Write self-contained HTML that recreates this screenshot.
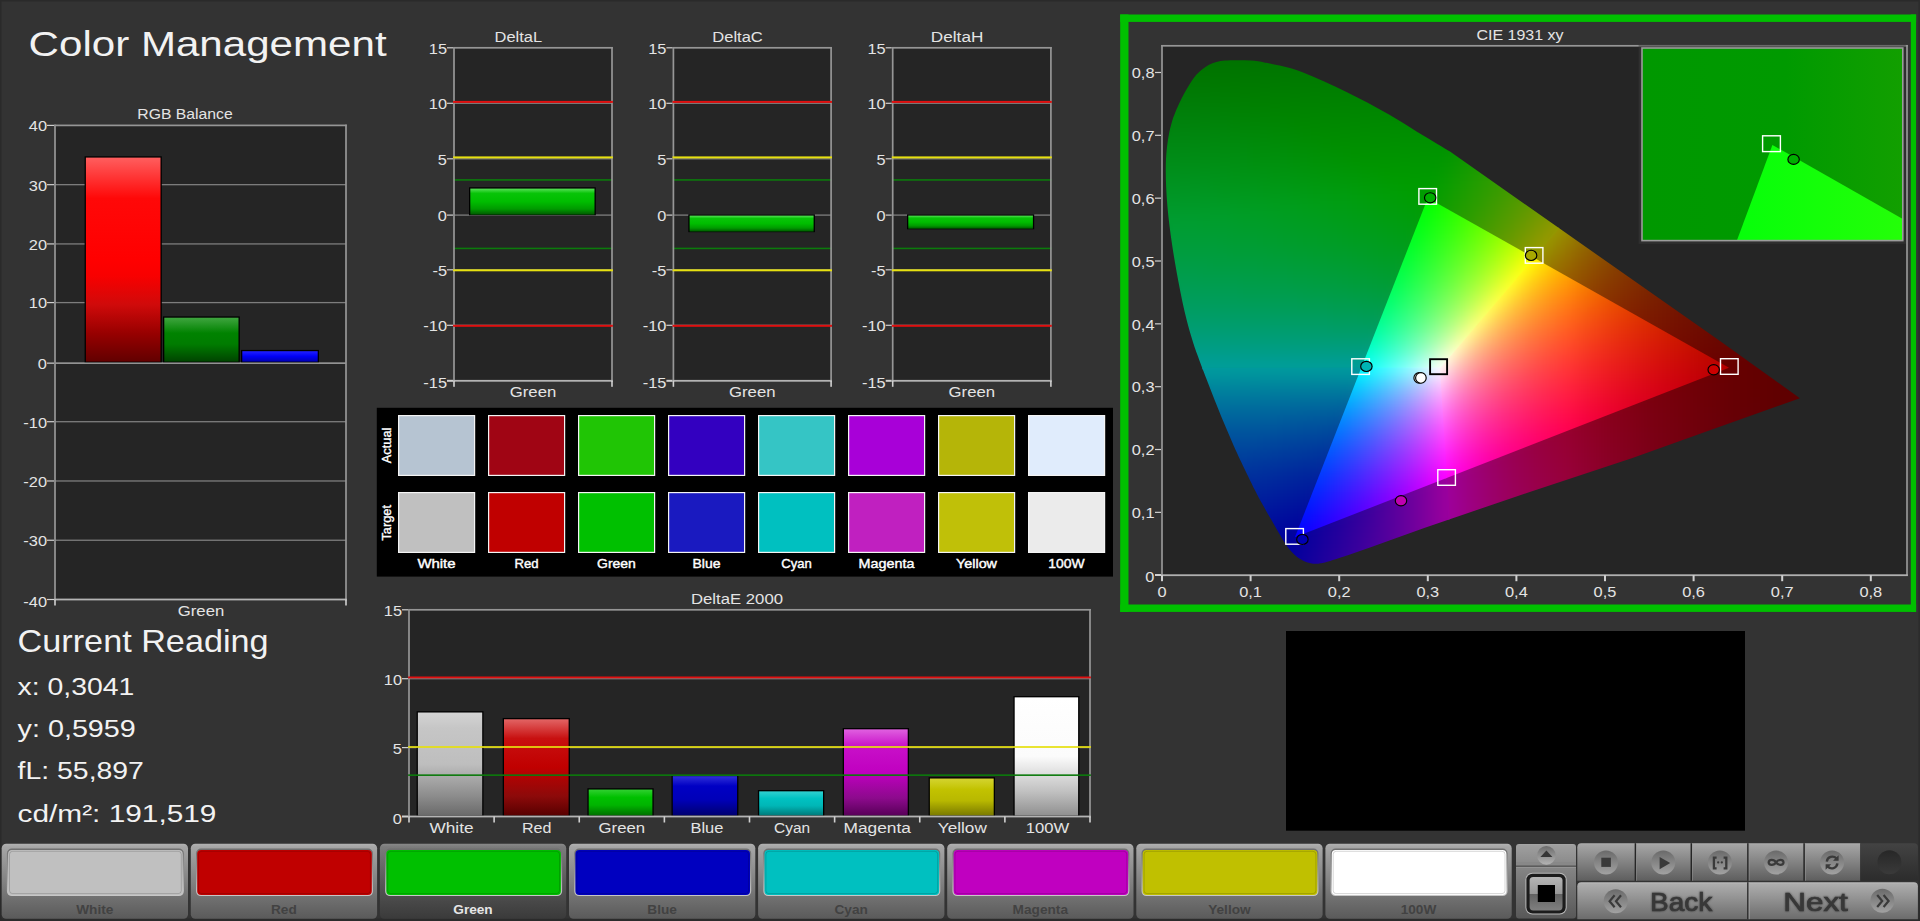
<!DOCTYPE html>
<html lang="en"><head><meta charset="utf-8"><title>Color Management</title>
<style>html,body{margin:0;padding:0;background:#333;overflow:hidden}svg{display:block;font-family:'Liberation Sans', sans-serif;fill:#e4e4e4}</style></head>
<body>
<svg width="1920" height="921" viewBox="0 0 1920 921">
<defs>
<linearGradient id="g1" x1="0" y1="0" x2="0" y2="1"><stop offset="0" stop-color="#282828"/><stop offset="1" stop-color="#303030"/></linearGradient>
<linearGradient id="g2" x1="0" y1="0" x2="0" y2="1"><stop offset="0" stop-color="#ff5e5e"/><stop offset="0.2" stop-color="#ff0808"/><stop offset="0.5" stop-color="#ff0000"/><stop offset="0.58" stop-color="#f80000"/><stop offset="0.72" stop-color="#d00a0a"/><stop offset="0.86" stop-color="#980000"/><stop offset="1" stop-color="#620000"/></linearGradient>
<linearGradient id="g3" x1="0" y1="0" x2="0" y2="1"><stop offset="0" stop-color="#3fa53f"/><stop offset="0.35" stop-color="#008200"/><stop offset="0.6" stop-color="#007c00"/><stop offset="1" stop-color="#004400"/></linearGradient>
<linearGradient id="g4" x1="0" y1="0" x2="0" y2="1"><stop offset="0" stop-color="#2020ff"/><stop offset="0.5" stop-color="#0000f4"/><stop offset="1" stop-color="#0000b0"/></linearGradient>
<linearGradient id="g5" x1="0" y1="0" x2="0" y2="1"><stop offset="0" stop-color="#58e058"/><stop offset="0.18" stop-color="#08c408"/><stop offset="0.5" stop-color="#00bd00"/><stop offset="0.78" stop-color="#009a00"/><stop offset="1" stop-color="#005800"/></linearGradient>
<linearGradient id="g6" x1="0" y1="0" x2="0" y2="1"><stop offset="0" stop-color="#58e058"/><stop offset="0.18" stop-color="#08c408"/><stop offset="0.5" stop-color="#00bd00"/><stop offset="0.78" stop-color="#009a00"/><stop offset="1" stop-color="#005800"/></linearGradient>
<linearGradient id="g7" x1="0" y1="0" x2="0" y2="1"><stop offset="0" stop-color="#58e058"/><stop offset="0.18" stop-color="#08c408"/><stop offset="0.5" stop-color="#00bd00"/><stop offset="0.78" stop-color="#009a00"/><stop offset="1" stop-color="#005800"/></linearGradient>
<linearGradient id="g8" x1="0" y1="0" x2="0" y2="1"><stop offset="0" stop-color="#d4d4d4"/><stop offset="0.15" stop-color="#c6c6c6"/><stop offset="0.5" stop-color="#bebebe"/><stop offset="0.8" stop-color="#8e8e8e"/><stop offset="1" stop-color="#6a6a6a"/></linearGradient>
<linearGradient id="g9" x1="0" y1="0" x2="0" y2="1"><stop offset="0" stop-color="#e26464"/><stop offset="0.2" stop-color="#c81010"/><stop offset="0.5" stop-color="#c00000"/><stop offset="0.8" stop-color="#8c0a0a"/><stop offset="1" stop-color="#580000"/></linearGradient>
<linearGradient id="g10" x1="0" y1="0" x2="0" y2="1"><stop offset="0" stop-color="#30d030"/><stop offset="0.3" stop-color="#00c000"/><stop offset="0.6" stop-color="#00b400"/><stop offset="1" stop-color="#007000"/></linearGradient>
<linearGradient id="g11" x1="0" y1="0" x2="0" y2="1"><stop offset="0" stop-color="#3030d8"/><stop offset="0.25" stop-color="#0000c4"/><stop offset="0.6" stop-color="#0000b8"/><stop offset="1" stop-color="#000070"/></linearGradient>
<linearGradient id="g12" x1="0" y1="0" x2="0" y2="1"><stop offset="0" stop-color="#30d0d0"/><stop offset="0.3" stop-color="#00c2c2"/><stop offset="0.6" stop-color="#00b6b6"/><stop offset="1" stop-color="#007a7a"/></linearGradient>
<linearGradient id="g13" x1="0" y1="0" x2="0" y2="1"><stop offset="0" stop-color="#e060e0"/><stop offset="0.2" stop-color="#c810c8"/><stop offset="0.5" stop-color="#c000c0"/><stop offset="0.8" stop-color="#8c0a8c"/><stop offset="1" stop-color="#580058"/></linearGradient>
<linearGradient id="g14" x1="0" y1="0" x2="0" y2="1"><stop offset="0" stop-color="#d4d430"/><stop offset="0.3" stop-color="#c2c200"/><stop offset="0.6" stop-color="#b8b800"/><stop offset="1" stop-color="#7a7a00"/></linearGradient>
<linearGradient id="g15" x1="0" y1="0" x2="0" y2="1"><stop offset="0" stop-color="#ffffff"/><stop offset="0.5" stop-color="#fbfbfb"/><stop offset="0.8" stop-color="#c0c0c0"/><stop offset="1" stop-color="#909090"/></linearGradient>
<clipPath id="locus"><path d="M1347.8 555.3C1344.53 556.35 1333.1 560.2 1328.2 561.6C1323.3 563 1321.33 563.42 1318.4 563.7C1315.47 563.98 1313.2 563.82 1310.6 563.3C1308 562.78 1305.57 562.1 1302.8 560.6C1300.03 559.1 1296.93 557.15 1294 554.3C1291.07 551.45 1288.58 548.55 1285.2 543.5C1281.82 538.45 1277.61 530.67 1273.74 524C1269.88 517.33 1265.16 509.17 1262.01 503.5C1258.86 497.83 1258.31 496.92 1254.85 490C1251.38 483.08 1244.95 469.85 1241.23 462C1237.51 454.15 1235.47 449.57 1232.53 442.9C1229.59 436.23 1226.49 428.95 1223.58 422C1220.68 415.05 1217.99 408.43 1215.11 401.2C1212.22 393.97 1209.26 386.42 1206.27 378.6C1203.28 370.78 1199.5 360.77 1197.16 354.3C1194.82 347.83 1193.98 345.43 1192.25 339.8C1190.52 334.17 1188.45 326.9 1186.79 320.5C1185.14 314.1 1183.72 307.77 1182.34 301.4C1180.96 295.03 1179.74 288.67 1178.53 282.3C1177.32 275.93 1176.17 269.57 1175.08 263.2C1173.99 256.83 1172.94 250.47 1171.99 244.1C1171.04 237.73 1170.15 231.37 1169.38 225C1168.61 218.63 1167.93 212.27 1167.39 205.9C1166.85 199.53 1166.4 193.17 1166.13 186.8C1165.86 180.43 1165.7 173.67 1165.77 167.7C1165.85 161.73 1166.07 156.53 1166.58 151C1167.1 145.47 1167.98 139.33 1168.86 134.5C1169.74 129.67 1170.91 125.42 1171.88 122C1172.85 118.58 1173.47 117.07 1174.68 114C1175.89 110.93 1177.54 107.07 1179.15 103.6C1180.76 100.13 1182.61 96.38 1184.32 93.2C1186.04 90.02 1187.73 87.25 1189.46 84.5C1191.19 81.75 1192.66 79.15 1194.7 76.7C1196.74 74.25 1199.38 71.75 1201.7 69.8C1204.02 67.85 1206.15 66.32 1208.6 65C1211.05 63.68 1213.65 62.65 1216.4 61.9C1219.15 61.15 1221.48 60.78 1225.1 60.5C1228.72 60.22 1233.77 60.18 1238.1 60.2C1242.43 60.22 1246.75 60.23 1251.1 60.6C1255.45 60.97 1261.05 61.92 1264.2 62.4C1267.35 62.88 1265.42 62.47 1270 63.5C1274.58 64.53 1284.47 66.4 1291.7 68.6C1298.93 70.8 1306.17 73.72 1313.4 76.7C1320.63 79.68 1327.85 83.07 1335.1 86.5C1342.35 89.93 1349.65 93.6 1356.9 97.3C1364.15 101 1371.37 104.72 1378.6 108.7C1385.83 112.68 1393.07 116.85 1400.3 121.2C1407.53 125.55 1413.72 129.73 1422 134.8C1430.28 139.87 1445.33 148.8 1450 151.6L1719.3 340.6L1799.9 398.3L1710.6 430L1632.5 458.1L1528.3 492.5L1424.2 527.9L1370 547.4Z"/></clipPath>
<clipPath id="tri"><path d="M1729.04 367.63L1427.8 197.96L1294.9 537.3Z"/></clipPath>
<clipPath id="sec0"><path d="M1438.23 367.98L1525.41 1686.12L2571.6 -961.46Z"/></clipPath>
<clipPath id="sec1"><path d="M1439.42 369.06L2572.79 -960.39L502.74 371.32Z"/></clipPath>
<clipPath id="sec2"><path d="M1439.8 367.45L503.12 369.72L1526.98 1685.59Z"/></clipPath>
<filter id="blo" color-interpolation-filters="sRGB" x="-5%" y="-5%" width="110%" height="110%"><feGaussianBlur stdDeviation="6"/></filter>
<filter id="bli" color-interpolation-filters="sRGB" x="-5%" y="-5%" width="110%" height="110%"><feGaussianBlur stdDeviation="4.5"/></filter>
<linearGradient id="insg" x1="0" y1="0" x2="1" y2="0"><stop offset="0" stop-color="#009800"/><stop offset="0.55" stop-color="#009a00"/><stop offset="1" stop-color="#129f00"/></linearGradient>
<linearGradient id="insb" x1="0" y1="0" x2="1" y2="0"><stop offset="0" stop-color="#06ff0a"/><stop offset="1" stop-color="#24ff08"/></linearGradient>
<linearGradient id="g16" x1="0" y1="0" x2="0" y2="1"><stop offset="0" stop-color="#b2b2b2"/><stop offset="0.04" stop-color="#a6a6a6"/><stop offset="0.55" stop-color="#7e7e7e"/><stop offset="1" stop-color="#5a5a5a"/></linearGradient>
<linearGradient id="g17" x1="0" y1="0" x2="0" y2="1"><stop offset="0" stop-color="#8a8a8a"/><stop offset="0.04" stop-color="#7c7c7c"/><stop offset="0.55" stop-color="#565656"/><stop offset="1" stop-color="#3a3a3a"/></linearGradient>
<linearGradient id="g18" x1="0" y1="0" x2="0" y2="1"><stop offset="0" stop-color="#6e6e6e"/><stop offset="1" stop-color="#c8c8c8"/></linearGradient>
<linearGradient id="g19" x1="0" y1="0" x2="0" y2="1"><stop offset="0" stop-color="#a8a8a8"/><stop offset="0.08" stop-color="#9e9e9e"/><stop offset="1" stop-color="#888888"/></linearGradient>
<linearGradient id="g20" x1="0" y1="0" x2="0" y2="1"><stop offset="0" stop-color="#868686"/><stop offset="1" stop-color="#585858"/></linearGradient>
<linearGradient id="g21" x1="0" y1="0" x2="0" y2="1"><stop offset="0" stop-color="#6c6c6c"/><stop offset="1" stop-color="#b4b4b4"/></linearGradient>
<linearGradient id="g22" x1="0" y1="0" x2="0" y2="1"><stop offset="0" stop-color="#6a6a6a"/><stop offset="1" stop-color="#a2a2a2"/></linearGradient>
<linearGradient id="g23" x1="0" y1="0" x2="0" y2="1"><stop offset="0" stop-color="#b6b6b6"/><stop offset="0.5" stop-color="#989898"/><stop offset="0.51" stop-color="#626262"/><stop offset="1" stop-color="#808080"/></linearGradient>
<linearGradient id="g24" x1="0" y1="0" x2="0" y2="1"><stop offset="0" stop-color="#b0b0b0"/><stop offset="0.05" stop-color="#a4a4a4"/><stop offset="1" stop-color="#5e5e5e"/></linearGradient>
<linearGradient id="g25" x1="0" y1="0" x2="0" y2="1"><stop offset="0" stop-color="#434343"/><stop offset="1" stop-color="#2c2c2c"/></linearGradient>
<linearGradient id="g26" x1="0" y1="0" x2="0" y2="1"><stop offset="0" stop-color="#272727"/><stop offset="1" stop-color="#3a3a3a"/></linearGradient>
<linearGradient id="g27" x1="0" y1="0" x2="0" y2="1"><stop offset="0" stop-color="#bcbcbc"/><stop offset="0.06" stop-color="#acacac"/><stop offset="1" stop-color="#6c6c6c"/></linearGradient>
<filter id="ts" x="-10%" y="-30%" width="120%" height="160%" color-interpolation-filters="sRGB"><feMorphology in="SourceGraphic" operator="dilate" radius="0.3" result="d"/><feGaussianBlur in="d" stdDeviation="0.9" result="b"/><feComponentTransfer in="b" result="b2"><feFuncA type="linear" slope="0.8"/></feComponentTransfer><feMerge><feMergeNode in="b2"/><feMergeNode in="SourceGraphic"/></feMerge></filter>
</defs>
<rect x="0" y="0" width="1920" height="921" fill="#333333"/>
<rect x="0" y="0" width="1920" height="2" fill="url(#g1)"/>
<rect x="0" y="0" width="1.5" height="921" fill="#2a2a2a"/>
<rect x="1918.4" y="0" width="1.6" height="921" fill="#2c2c2c"/>
<text x="28.6" y="56" font-size="35.4" textLength="358" lengthAdjust="spacingAndGlyphs" fill="#f2f2f2">Color Management</text>
<text x="17.6" y="651.9" font-size="31.3" textLength="251" lengthAdjust="spacingAndGlyphs" fill="#f2f2f2">Current Reading</text>
<text x="17.6" y="694.5" font-size="24.8" textLength="116.8" lengthAdjust="spacingAndGlyphs" fill="#f2f2f2">x: 0,3041</text>
<text x="17.6" y="736.8" font-size="24.8" textLength="118.2" lengthAdjust="spacingAndGlyphs" fill="#f2f2f2">y: 0,5959</text>
<text x="17.6" y="779.2" font-size="24.8" textLength="126.3" lengthAdjust="spacingAndGlyphs" fill="#f2f2f2">fL: 55,897</text>
<text x="17.6" y="821.6" font-size="24.8" textLength="198.8" lengthAdjust="spacingAndGlyphs" fill="#f2f2f2">cd/m²: 191,519</text>
<rect x="55" y="125.4" width="291" height="474.1" fill="#252525"/>
<rect x="55" y="184.01" width="291" height="1.3" fill="#7d7d7d"/>
<rect x="55" y="243.28" width="291" height="1.3" fill="#7d7d7d"/>
<rect x="55" y="301.94" width="291" height="1.3" fill="#7d7d7d"/>
<rect x="55" y="362.35" width="291" height="1.6" fill="#9a9a9a"/>
<rect x="55" y="421.06" width="291" height="1.3" fill="#7d7d7d"/>
<rect x="55" y="480.33" width="291" height="1.3" fill="#7d7d7d"/>
<rect x="55" y="539.59" width="291" height="1.3" fill="#7d7d7d"/>
<rect x="84.6" y="156.3" width="77.2" height="205.95" fill="#000"/>
<rect x="85.9" y="157.6" width="74.6" height="204.05" fill="url(#g2)"/>
<rect x="163" y="316.4" width="76.8" height="45.85" fill="#000"/>
<rect x="164.3" y="317.7" width="74.2" height="43.95" fill="url(#g3)"/>
<rect x="241" y="349.9" width="78" height="12.35" fill="#000"/>
<rect x="242.3" y="351.2" width="75.4" height="10.45" fill="url(#g4)"/>
<rect x="54.15" y="124.6" width="1.7" height="475.7" fill="#969696"/>
<rect x="345.15" y="124.6" width="1.7" height="475.7" fill="#969696"/>
<rect x="54.2" y="124.55" width="292.6" height="1.7" fill="#969696"/>
<rect x="54.2" y="598.6" width="292.6" height="1.8" fill="#b4b4b4"/>
<rect x="47" y="124.8" width="7" height="1.2" fill="#d0d0d0"/>
<text x="47" y="131.3" font-size="15.3" text-anchor="end" textLength="18.21" lengthAdjust="spacingAndGlyphs">40</text>
<rect x="47" y="184.06" width="7" height="1.2" fill="#d0d0d0"/>
<text x="47" y="190.56" font-size="15.3" text-anchor="end" textLength="18.21" lengthAdjust="spacingAndGlyphs">30</text>
<rect x="47" y="243.33" width="7" height="1.2" fill="#d0d0d0"/>
<text x="47" y="249.83" font-size="15.3" text-anchor="end" textLength="18.21" lengthAdjust="spacingAndGlyphs">20</text>
<rect x="47" y="301.99" width="7" height="1.2" fill="#d0d0d0"/>
<text x="47" y="308.49" font-size="15.3" text-anchor="end" textLength="18.21" lengthAdjust="spacingAndGlyphs">10</text>
<rect x="47" y="362.55" width="7" height="1.2" fill="#d0d0d0"/>
<text x="47" y="369.05" font-size="15.3" text-anchor="end" textLength="9.11" lengthAdjust="spacingAndGlyphs">0</text>
<rect x="47" y="421.11" width="7" height="1.2" fill="#d0d0d0"/>
<text x="47" y="427.61" font-size="15.3" text-anchor="end" textLength="23.66" lengthAdjust="spacingAndGlyphs">-10</text>
<rect x="47" y="480.38" width="7" height="1.2" fill="#d0d0d0"/>
<text x="47" y="486.88" font-size="15.3" text-anchor="end" textLength="23.66" lengthAdjust="spacingAndGlyphs">-20</text>
<rect x="47" y="539.64" width="7" height="1.2" fill="#d0d0d0"/>
<text x="47" y="546.14" font-size="15.3" text-anchor="end" textLength="23.66" lengthAdjust="spacingAndGlyphs">-30</text>
<rect x="47" y="598.9" width="7" height="1.2" fill="#d0d0d0"/>
<text x="47" y="606.7" font-size="15.3" text-anchor="end" textLength="23.66" lengthAdjust="spacingAndGlyphs">-40</text>
<rect x="54.2" y="599.5" width="1.6" height="6" fill="#d0d0d0"/>
<rect x="345.2" y="599.5" width="1.6" height="6" fill="#d0d0d0"/>
<text x="185" y="118.5" font-size="15.2" text-anchor="middle" textLength="95.5" lengthAdjust="spacingAndGlyphs">RGB Balance</text>
<text x="201" y="616.3" font-size="15.2" text-anchor="middle" textLength="46.5" lengthAdjust="spacingAndGlyphs">Green</text>
<rect x="454" y="47.8" width="158" height="333" fill="#252525"/>
<rect x="454" y="102.65" width="158" height="1.3" fill="#7d7d7d"/>
<rect x="454" y="158.15" width="158" height="1.3" fill="#7d7d7d"/>
<rect x="454" y="214.45" width="158" height="1.3" fill="#7d7d7d"/>
<rect x="454" y="269.15" width="158" height="1.3" fill="#7d7d7d"/>
<rect x="454" y="324.65" width="158" height="1.3" fill="#7d7d7d"/>
<rect x="453.1" y="179.12" width="159.8" height="1.6" fill="#0c7a0c"/>
<rect x="453.1" y="247.62" width="159.8" height="1.6" fill="#0c7a0c"/>
<rect x="469" y="187.29" width="126.8" height="28.01" fill="#000"/>
<rect x="470.3" y="188.59" width="124.2" height="26.11" fill="url(#g5)"/>
<rect x="453.15" y="47" width="1.7" height="334.6" fill="#969696"/>
<rect x="611.15" y="47" width="1.7" height="334.6" fill="#969696"/>
<rect x="453.2" y="46.95" width="159.6" height="1.7" fill="#969696"/>
<rect x="453.2" y="379.9" width="159.6" height="1.8" fill="#b4b4b4"/>
<rect x="453.1" y="100.9" width="159.8" height="2" fill="#e01010"/>
<rect x="453.1" y="324.8" width="159.8" height="2" fill="#e01010"/>
<rect x="453.1" y="156.4" width="159.8" height="2" fill="#e6e010"/>
<rect x="453.1" y="269.3" width="159.8" height="2" fill="#e6e010"/>
<rect x="447" y="47.2" width="6" height="1.2" fill="#d0d0d0"/>
<text x="447" y="53.7" font-size="15.3" text-anchor="end" textLength="18.21" lengthAdjust="spacingAndGlyphs">15</text>
<rect x="447" y="102.7" width="6" height="1.2" fill="#d0d0d0"/>
<text x="447" y="109.2" font-size="15.3" text-anchor="end" textLength="18.21" lengthAdjust="spacingAndGlyphs">10</text>
<rect x="447" y="158.2" width="6" height="1.2" fill="#d0d0d0"/>
<text x="447" y="164.7" font-size="15.3" text-anchor="end" textLength="9.11" lengthAdjust="spacingAndGlyphs">5</text>
<rect x="447" y="214.5" width="6" height="1.2" fill="#d0d0d0"/>
<text x="447" y="221" font-size="15.3" text-anchor="end" textLength="9.11" lengthAdjust="spacingAndGlyphs">0</text>
<rect x="447" y="269.2" width="6" height="1.2" fill="#d0d0d0"/>
<text x="447" y="275.7" font-size="15.3" text-anchor="end" textLength="14.56" lengthAdjust="spacingAndGlyphs">-5</text>
<rect x="447" y="324.7" width="6" height="1.2" fill="#d0d0d0"/>
<text x="447" y="331.2" font-size="15.3" text-anchor="end" textLength="23.66" lengthAdjust="spacingAndGlyphs">-10</text>
<rect x="447" y="379.8" width="6" height="2" fill="#d0d0d0"/>
<text x="447" y="388" font-size="15.3" text-anchor="end" textLength="23.66" lengthAdjust="spacingAndGlyphs">-15</text>
<rect x="453.2" y="380.8" width="1.6" height="6" fill="#d0d0d0"/>
<rect x="611.2" y="380.8" width="1.6" height="6" fill="#d0d0d0"/>
<text x="518.3" y="42.1" font-size="15.2" text-anchor="middle" textLength="47.5" lengthAdjust="spacingAndGlyphs">DeltaL</text>
<text x="533" y="397.4" font-size="15.2" text-anchor="middle" textLength="46.5" lengthAdjust="spacingAndGlyphs">Green</text>
<rect x="673.4" y="47.8" width="157.7" height="333" fill="#252525"/>
<rect x="673.4" y="102.65" width="157.7" height="1.3" fill="#7d7d7d"/>
<rect x="673.4" y="158.15" width="157.7" height="1.3" fill="#7d7d7d"/>
<rect x="673.4" y="214.45" width="157.7" height="1.3" fill="#7d7d7d"/>
<rect x="673.4" y="269.15" width="157.7" height="1.3" fill="#7d7d7d"/>
<rect x="673.4" y="324.65" width="157.7" height="1.3" fill="#7d7d7d"/>
<rect x="672.5" y="179.12" width="159.5" height="1.6" fill="#0c7a0c"/>
<rect x="672.5" y="247.62" width="159.5" height="1.6" fill="#0c7a0c"/>
<rect x="688.3" y="214.3" width="126.6" height="17.87" fill="#000"/>
<rect x="689.6" y="215.6" width="124" height="15.97" fill="url(#g6)"/>
<rect x="672.55" y="47" width="1.7" height="334.6" fill="#969696"/>
<rect x="830.25" y="47" width="1.7" height="334.6" fill="#969696"/>
<rect x="672.6" y="46.95" width="159.3" height="1.7" fill="#969696"/>
<rect x="672.6" y="379.9" width="159.3" height="1.8" fill="#b4b4b4"/>
<rect x="672.5" y="100.9" width="159.5" height="2" fill="#e01010"/>
<rect x="672.5" y="324.8" width="159.5" height="2" fill="#e01010"/>
<rect x="672.5" y="156.4" width="159.5" height="2" fill="#e6e010"/>
<rect x="672.5" y="269.3" width="159.5" height="2" fill="#e6e010"/>
<rect x="666.4" y="47.2" width="6" height="1.2" fill="#d0d0d0"/>
<text x="666.4" y="53.7" font-size="15.3" text-anchor="end" textLength="18.21" lengthAdjust="spacingAndGlyphs">15</text>
<rect x="666.4" y="102.7" width="6" height="1.2" fill="#d0d0d0"/>
<text x="666.4" y="109.2" font-size="15.3" text-anchor="end" textLength="18.21" lengthAdjust="spacingAndGlyphs">10</text>
<rect x="666.4" y="158.2" width="6" height="1.2" fill="#d0d0d0"/>
<text x="666.4" y="164.7" font-size="15.3" text-anchor="end" textLength="9.11" lengthAdjust="spacingAndGlyphs">5</text>
<rect x="666.4" y="214.5" width="6" height="1.2" fill="#d0d0d0"/>
<text x="666.4" y="221" font-size="15.3" text-anchor="end" textLength="9.11" lengthAdjust="spacingAndGlyphs">0</text>
<rect x="666.4" y="269.2" width="6" height="1.2" fill="#d0d0d0"/>
<text x="666.4" y="275.7" font-size="15.3" text-anchor="end" textLength="14.56" lengthAdjust="spacingAndGlyphs">-5</text>
<rect x="666.4" y="324.7" width="6" height="1.2" fill="#d0d0d0"/>
<text x="666.4" y="331.2" font-size="15.3" text-anchor="end" textLength="23.66" lengthAdjust="spacingAndGlyphs">-10</text>
<rect x="666.4" y="379.8" width="6" height="2" fill="#d0d0d0"/>
<text x="666.4" y="388" font-size="15.3" text-anchor="end" textLength="23.66" lengthAdjust="spacingAndGlyphs">-15</text>
<rect x="672.6" y="380.8" width="1.6" height="6" fill="#d0d0d0"/>
<rect x="830.3" y="380.8" width="1.6" height="6" fill="#d0d0d0"/>
<text x="737.55" y="42.1" font-size="15.2" text-anchor="middle" textLength="50.5" lengthAdjust="spacingAndGlyphs">DeltaC</text>
<text x="752.25" y="397.4" font-size="15.2" text-anchor="middle" textLength="46.5" lengthAdjust="spacingAndGlyphs">Green</text>
<rect x="892.7" y="47.8" width="158.2" height="333" fill="#252525"/>
<rect x="892.7" y="102.65" width="158.2" height="1.3" fill="#7d7d7d"/>
<rect x="892.7" y="158.15" width="158.2" height="1.3" fill="#7d7d7d"/>
<rect x="892.7" y="214.45" width="158.2" height="1.3" fill="#7d7d7d"/>
<rect x="892.7" y="269.15" width="158.2" height="1.3" fill="#7d7d7d"/>
<rect x="892.7" y="324.65" width="158.2" height="1.3" fill="#7d7d7d"/>
<rect x="891.8" y="179.12" width="160" height="1.6" fill="#0c7a0c"/>
<rect x="891.8" y="247.62" width="160" height="1.6" fill="#0c7a0c"/>
<rect x="907" y="214.3" width="127.2" height="15.02" fill="#000"/>
<rect x="908.3" y="215.6" width="124.6" height="13.12" fill="url(#g7)"/>
<rect x="891.85" y="47" width="1.7" height="334.6" fill="#969696"/>
<rect x="1050.05" y="47" width="1.7" height="334.6" fill="#969696"/>
<rect x="891.9" y="46.95" width="159.8" height="1.7" fill="#969696"/>
<rect x="891.9" y="379.9" width="159.8" height="1.8" fill="#b4b4b4"/>
<rect x="891.8" y="100.9" width="160" height="2" fill="#e01010"/>
<rect x="891.8" y="324.8" width="160" height="2" fill="#e01010"/>
<rect x="891.8" y="156.4" width="160" height="2" fill="#e6e010"/>
<rect x="891.8" y="269.3" width="160" height="2" fill="#e6e010"/>
<rect x="885.7" y="47.2" width="6" height="1.2" fill="#d0d0d0"/>
<text x="885.7" y="53.7" font-size="15.3" text-anchor="end" textLength="18.21" lengthAdjust="spacingAndGlyphs">15</text>
<rect x="885.7" y="102.7" width="6" height="1.2" fill="#d0d0d0"/>
<text x="885.7" y="109.2" font-size="15.3" text-anchor="end" textLength="18.21" lengthAdjust="spacingAndGlyphs">10</text>
<rect x="885.7" y="158.2" width="6" height="1.2" fill="#d0d0d0"/>
<text x="885.7" y="164.7" font-size="15.3" text-anchor="end" textLength="9.11" lengthAdjust="spacingAndGlyphs">5</text>
<rect x="885.7" y="214.5" width="6" height="1.2" fill="#d0d0d0"/>
<text x="885.7" y="221" font-size="15.3" text-anchor="end" textLength="9.11" lengthAdjust="spacingAndGlyphs">0</text>
<rect x="885.7" y="269.2" width="6" height="1.2" fill="#d0d0d0"/>
<text x="885.7" y="275.7" font-size="15.3" text-anchor="end" textLength="14.56" lengthAdjust="spacingAndGlyphs">-5</text>
<rect x="885.7" y="324.7" width="6" height="1.2" fill="#d0d0d0"/>
<text x="885.7" y="331.2" font-size="15.3" text-anchor="end" textLength="23.66" lengthAdjust="spacingAndGlyphs">-10</text>
<rect x="885.7" y="379.8" width="6" height="2" fill="#d0d0d0"/>
<text x="885.7" y="388" font-size="15.3" text-anchor="end" textLength="23.66" lengthAdjust="spacingAndGlyphs">-15</text>
<rect x="891.9" y="380.8" width="1.6" height="6" fill="#d0d0d0"/>
<rect x="1050.1" y="380.8" width="1.6" height="6" fill="#d0d0d0"/>
<text x="957.1" y="42.1" font-size="15.2" text-anchor="middle" textLength="52.5" lengthAdjust="spacingAndGlyphs">DeltaH</text>
<text x="971.8" y="397.4" font-size="15.2" text-anchor="middle" textLength="46.5" lengthAdjust="spacingAndGlyphs">Green</text>
<rect x="376.8" y="407.8" width="736.2" height="168.8" fill="#000"/>
<rect x="398" y="415" width="77.2" height="61" fill="#f4f4f4"/>
<rect x="399.2" y="416.2" width="74.8" height="58.6" fill="#b6c4d2"/>
<rect x="398" y="492" width="77.2" height="61" fill="#f4f4f4"/>
<rect x="399.2" y="493.2" width="74.8" height="58.6" fill="#c0c0c0"/>
<text x="436.5" y="567.7" font-size="13" text-anchor="middle" textLength="38.2" lengthAdjust="spacingAndGlyphs" fill="#ffffff" stroke="#fff" stroke-width="0.4">White</text>
<rect x="488" y="415" width="77.2" height="61" fill="#f4f4f4"/>
<rect x="489.2" y="416.2" width="74.8" height="58.6" fill="#a00514"/>
<rect x="488" y="492" width="77.2" height="61" fill="#f4f4f4"/>
<rect x="489.2" y="493.2" width="74.8" height="58.6" fill="#c00000"/>
<text x="526.5" y="567.7" font-size="13" text-anchor="middle" textLength="24.1" lengthAdjust="spacingAndGlyphs" fill="#ffffff" stroke="#fff" stroke-width="0.4">Red</text>
<rect x="578" y="415" width="77.2" height="61" fill="#f4f4f4"/>
<rect x="579.2" y="416.2" width="74.8" height="58.6" fill="#20c505"/>
<rect x="578" y="492" width="77.2" height="61" fill="#f4f4f4"/>
<rect x="579.2" y="493.2" width="74.8" height="58.6" fill="#00c000"/>
<text x="616.5" y="567.7" font-size="13" text-anchor="middle" textLength="38.8" lengthAdjust="spacingAndGlyphs" fill="#ffffff" stroke="#fff" stroke-width="0.4">Green</text>
<rect x="668" y="415" width="77.2" height="61" fill="#f4f4f4"/>
<rect x="669.2" y="416.2" width="74.8" height="58.6" fill="#3300c0"/>
<rect x="668" y="492" width="77.2" height="61" fill="#f4f4f4"/>
<rect x="669.2" y="493.2" width="74.8" height="58.6" fill="#1a1ac0"/>
<text x="706.5" y="567.7" font-size="13" text-anchor="middle" textLength="27.9" lengthAdjust="spacingAndGlyphs" fill="#ffffff" stroke="#fff" stroke-width="0.4">Blue</text>
<rect x="758" y="415" width="77.2" height="61" fill="#f4f4f4"/>
<rect x="759.2" y="416.2" width="74.8" height="58.6" fill="#35c5c5"/>
<rect x="758" y="492" width="77.2" height="61" fill="#f4f4f4"/>
<rect x="759.2" y="493.2" width="74.8" height="58.6" fill="#00c0c0"/>
<text x="796.5" y="567.7" font-size="13" text-anchor="middle" textLength="30.5" lengthAdjust="spacingAndGlyphs" fill="#ffffff" stroke="#fff" stroke-width="0.4">Cyan</text>
<rect x="848" y="415" width="77.2" height="61" fill="#f4f4f4"/>
<rect x="849.2" y="416.2" width="74.8" height="58.6" fill="#a800d8"/>
<rect x="848" y="492" width="77.2" height="61" fill="#f4f4f4"/>
<rect x="849.2" y="493.2" width="74.8" height="58.6" fill="#c020c0"/>
<text x="886.5" y="567.7" font-size="13" text-anchor="middle" textLength="55.9" lengthAdjust="spacingAndGlyphs" fill="#ffffff" stroke="#fff" stroke-width="0.4">Magenta</text>
<rect x="938" y="415" width="77.2" height="61" fill="#f4f4f4"/>
<rect x="939.2" y="416.2" width="74.8" height="58.6" fill="#b5b508"/>
<rect x="938" y="492" width="77.2" height="61" fill="#f4f4f4"/>
<rect x="939.2" y="493.2" width="74.8" height="58.6" fill="#c0c008"/>
<text x="976.5" y="567.7" font-size="13" text-anchor="middle" textLength="41" lengthAdjust="spacingAndGlyphs" fill="#ffffff" stroke="#fff" stroke-width="0.4">Yellow</text>
<rect x="1028" y="415" width="77.2" height="61" fill="#f4f4f4"/>
<rect x="1029.2" y="416.2" width="74.8" height="58.6" fill="#e0ecfc"/>
<rect x="1028" y="492" width="77.2" height="61" fill="#f4f4f4"/>
<rect x="1029.2" y="493.2" width="74.8" height="58.6" fill="#ebebeb"/>
<text x="1066.5" y="567.7" font-size="13" text-anchor="middle" textLength="36.3" lengthAdjust="spacingAndGlyphs" fill="#ffffff" stroke="#fff" stroke-width="0.4">100W</text>
<text transform="translate(391.3 445.4) rotate(-90)" font-size="12.6" text-anchor="middle" fill="#fff" textLength="35.6" lengthAdjust="spacingAndGlyphs" stroke="#fff" stroke-width="0.35">Actual</text>
<text transform="translate(391.3 522.8) rotate(-90)" font-size="12.6" text-anchor="middle" fill="#fff" textLength="35.6" lengthAdjust="spacingAndGlyphs" stroke="#fff" stroke-width="0.35">Target</text>
<rect x="409" y="609.8" width="681" height="206.7" fill="#252525"/>
<rect x="409" y="678.05" width="681" height="1.3" fill="#7d7d7d"/>
<rect x="409" y="746.95" width="681" height="1.3" fill="#7d7d7d"/>
<rect x="416.6" y="711.22" width="66.9" height="104.88" fill="#000"/>
<rect x="417.9" y="712.52" width="64.3" height="102.98" fill="url(#g8)"/>
<rect x="502.7" y="717.97" width="67.2" height="98.13" fill="#000"/>
<rect x="504" y="719.27" width="64.6" height="96.23" fill="url(#g9)"/>
<rect x="587.4" y="788.25" width="66.3" height="27.85" fill="#000"/>
<rect x="588.7" y="789.55" width="63.7" height="25.95" fill="url(#g10)"/>
<rect x="671.5" y="774.88" width="66.9" height="41.22" fill="#000"/>
<rect x="672.8" y="776.18" width="64.3" height="39.32" fill="url(#g11)"/>
<rect x="757.9" y="790.04" width="66.4" height="26.06" fill="#000"/>
<rect x="759.2" y="791.34" width="63.8" height="24.16" fill="url(#g12)"/>
<rect x="842.7" y="728.03" width="66.3" height="88.07" fill="#000"/>
<rect x="844" y="729.33" width="63.7" height="86.17" fill="url(#g13)"/>
<rect x="928.6" y="777.23" width="66.4" height="38.87" fill="#000"/>
<rect x="929.9" y="778.53" width="63.8" height="36.97" fill="url(#g14)"/>
<rect x="1013.4" y="696.06" width="66" height="120.04" fill="#000"/>
<rect x="1014.7" y="697.36" width="63.4" height="118.14" fill="url(#g15)"/>
<rect x="408.15" y="609" width="1.7" height="208.3" fill="#969696"/>
<rect x="1089.15" y="609" width="1.7" height="208.3" fill="#969696"/>
<rect x="408.2" y="608.95" width="682.6" height="1.7" fill="#969696"/>
<rect x="408.2" y="815.6" width="682.6" height="1.8" fill="#b4b4b4"/>
<rect x="408.1" y="676.5" width="682.8" height="1.8" fill="#e01010"/>
<rect x="408.1" y="746.15" width="682.8" height="1.7" fill="#e6e010"/>
<rect x="408.1" y="774.36" width="682.8" height="1.6" fill="#0c7a0c"/>
<rect x="402" y="609.2" width="6" height="1.2" fill="#d0d0d0"/>
<text x="402" y="615.7" font-size="15.3" text-anchor="end" textLength="18.21" lengthAdjust="spacingAndGlyphs">15</text>
<rect x="402" y="678.1" width="6" height="1.2" fill="#d0d0d0"/>
<text x="402" y="684.6" font-size="15.3" text-anchor="end" textLength="18.21" lengthAdjust="spacingAndGlyphs">10</text>
<rect x="402" y="747" width="6" height="1.2" fill="#d0d0d0"/>
<text x="402" y="753.5" font-size="15.3" text-anchor="end" textLength="9.11" lengthAdjust="spacingAndGlyphs">5</text>
<rect x="402" y="815.5" width="6" height="2" fill="#d0d0d0"/>
<text x="402" y="823.7" font-size="15.3" text-anchor="end" textLength="9.11" lengthAdjust="spacingAndGlyphs">0</text>
<rect x="408.2" y="816.5" width="1.6" height="6" fill="#d0d0d0"/>
<rect x="493.32" y="816.5" width="1.6" height="6" fill="#d0d0d0"/>
<rect x="578.45" y="816.5" width="1.6" height="6" fill="#d0d0d0"/>
<rect x="663.58" y="816.5" width="1.6" height="6" fill="#d0d0d0"/>
<rect x="748.7" y="816.5" width="1.6" height="6" fill="#d0d0d0"/>
<rect x="833.83" y="816.5" width="1.6" height="6" fill="#d0d0d0"/>
<rect x="918.95" y="816.5" width="1.6" height="6" fill="#d0d0d0"/>
<rect x="1004.08" y="816.5" width="1.6" height="6" fill="#d0d0d0"/>
<rect x="1089.2" y="816.5" width="1.6" height="6" fill="#d0d0d0"/>
<text x="451.56" y="832.9" font-size="15.2" text-anchor="middle" textLength="44" lengthAdjust="spacingAndGlyphs">White</text>
<text x="536.69" y="832.9" font-size="15.2" text-anchor="middle" textLength="29.5" lengthAdjust="spacingAndGlyphs">Red</text>
<text x="621.81" y="832.9" font-size="15.2" text-anchor="middle" textLength="46.5" lengthAdjust="spacingAndGlyphs">Green</text>
<text x="706.94" y="832.9" font-size="15.2" text-anchor="middle" textLength="33" lengthAdjust="spacingAndGlyphs">Blue</text>
<text x="792.06" y="832.9" font-size="15.2" text-anchor="middle" textLength="36" lengthAdjust="spacingAndGlyphs">Cyan</text>
<text x="877.19" y="832.9" font-size="15.2" text-anchor="middle" textLength="67.5" lengthAdjust="spacingAndGlyphs">Magenta</text>
<text x="962.31" y="832.9" font-size="15.2" text-anchor="middle" textLength="49" lengthAdjust="spacingAndGlyphs">Yellow</text>
<text x="1047.44" y="832.9" font-size="15.2" text-anchor="middle" textLength="43.5" lengthAdjust="spacingAndGlyphs">100W</text>
<text x="737" y="603.8" font-size="15.2" text-anchor="middle" textLength="92" lengthAdjust="spacingAndGlyphs">DeltaE 2000</text>
<rect x="1120.2" y="14.5" width="795.9" height="7.4" fill="#00c000"/>
<rect x="1120.2" y="604.5" width="795.9" height="7.4" fill="#00c000"/>
<rect x="1120.2" y="14.5" width="8.3" height="597.4" fill="#00c000"/>
<rect x="1910.8" y="14.5" width="5.3" height="597.4" fill="#00c000"/>
<rect x="1162" y="45.8" width="745" height="529.4" fill="#252525"/>
<g clip-path="url(#locus)" shape-rendering="crispEdges">
<g clip-path="url(#sec0)"><g filter="url(#blo)">
<path fill="#979700" d="M1550 210h20v10h-20z"/>
<path fill="#989800" d="M1540 220h10v10h-10z"/>
<path fill="#979700" d="M1550 220h10v10h-10z"/>
<path fill="#979200" d="M1560 220h10v10h-10z"/>
<path fill="#958400" d="M1570 220h10v10h-10z"/>
<path fill="#999900" d="M1530 230h10v10h-10z"/>
<path fill="#989800" d="M1540 230h10v10h-10z"/>
<path fill="#979400" d="M1550 230h10v10h-10z"/>
<path fill="#978700" d="M1560 230h10v10h-10z"/>
<path fill="#957b00" d="M1570 230h10v10h-10z"/>
<path fill="#916e00" d="M1580 230h10v10h-10z"/>
<path fill="#8e6400" d="M1590 230h10v10h-10z"/>
<path fill="#999900" d="M1520 240h20v10h-20z"/>
<path fill="#989700" d="M1540 240h10v10h-10z"/>
<path fill="#978900" d="M1550 240h10v10h-10z"/>
<path fill="#977d00" d="M1560 240h10v10h-10z"/>
<path fill="#957100" d="M1570 240h10v10h-10z"/>
<path fill="#916600" d="M1580 240h10v10h-10z"/>
<path fill="#8e5c00" d="M1590 240h10v10h-10z"/>
<path fill="#8a5400" d="M1600 240h10v10h-10z"/>
<path fill="#999901" d="M1520 250h10v10h-10z"/>
<path fill="#999900" d="M1530 250h10v10h-10z"/>
<path fill="#988b00" d="M1540 250h10v10h-10z"/>
<path fill="#977f00" d="M1550 250h10v10h-10z"/>
<path fill="#977300" d="M1560 250h10v10h-10z"/>
<path fill="#956900" d="M1570 250h10v10h-10z"/>
<path fill="#915e00" d="M1580 250h10v10h-10z"/>
<path fill="#8e5500" d="M1590 250h10v10h-10z"/>
<path fill="#8a4d00" d="M1600 250h10v10h-10z"/>
<path fill="#874600" d="M1610 250h10v10h-10z"/>
<path fill="#9a9a0c" d="M1510 260h10v10h-10z"/>
<path fill="#999907" d="M1520 260h10v10h-10z"/>
<path fill="#998d04" d="M1530 260h10v10h-10z"/>
<path fill="#988001" d="M1540 260h10v10h-10z"/>
<path fill="#977400" d="M1550 260h10v10h-10z"/>
<path fill="#976a00" d="M1560 260h10v10h-10z"/>
<path fill="#956000" d="M1570 260h10v10h-10z"/>
<path fill="#915700" d="M1580 260h10v10h-10z"/>
<path fill="#8e4f00" d="M1590 260h10v10h-10z"/>
<path fill="#8a4700" d="M1600 260h10v10h-10z"/>
<path fill="#874000" d="M1610 260h10v10h-10z"/>
<path fill="#843b00" d="M1620 260h10v10h-10z"/>
<path fill="#813500" d="M1630 260h10v10h-10z"/>
<path fill="#9b9b17" d="M1500 270h10v10h-10z"/>
<path fill="#9a9a11" d="M1510 270h10v10h-10z"/>
<path fill="#99900d" d="M1520 270h10v10h-10z"/>
<path fill="#998209" d="M1530 270h10v10h-10z"/>
<path fill="#987505" d="M1540 270h10v10h-10z"/>
<path fill="#976b02" d="M1550 270h10v10h-10z"/>
<path fill="#976200" d="M1560 270h10v10h-10z"/>
<path fill="#955900" d="M1570 270h10v10h-10z"/>
<path fill="#915000" d="M1580 270h10v10h-10z"/>
<path fill="#8e4800" d="M1590 270h10v10h-10z"/>
<path fill="#8a4100" d="M1600 270h10v10h-10z"/>
<path fill="#873b00" d="M1610 270h10v10h-10z"/>
<path fill="#843500" d="M1620 270h10v10h-10z"/>
<path fill="#813000" d="M1630 270h10v10h-10z"/>
<path fill="#7d2c00" d="M1640 270h10v10h-10z"/>
<path fill="#9b9b24" d="M1490 280h10v10h-10z"/>
<path fill="#9b9b1d" d="M1500 280h10v10h-10z"/>
<path fill="#9a9217" d="M1510 280h10v10h-10z"/>
<path fill="#998312" d="M1520 280h10v10h-10z"/>
<path fill="#99770e" d="M1530 280h10v10h-10z"/>
<path fill="#986b0a" d="M1540 280h10v10h-10z"/>
<path fill="#976207" d="M1550 280h10v10h-10z"/>
<path fill="#975904" d="M1560 280h10v10h-10z"/>
<path fill="#955102" d="M1570 280h10v10h-10z"/>
<path fill="#914900" d="M1580 280h10v10h-10z"/>
<path fill="#8e4200" d="M1590 280h10v10h-10z"/>
<path fill="#8a3b00" d="M1600 280h10v10h-10z"/>
<path fill="#873600" d="M1610 280h10v10h-10z"/>
<path fill="#843100" d="M1620 280h10v10h-10z"/>
<path fill="#812c00" d="M1630 280h10v10h-10z"/>
<path fill="#7d2800" d="M1640 280h10v10h-10z"/>
<path fill="#7a2400" d="M1650 280h10v10h-10z"/>
<path fill="#782100" d="M1660 280h10v10h-10z"/>
<path fill="#9c9c33" d="M1480 290h10v10h-10z"/>
<path fill="#9b9b2a" d="M1490 290h10v10h-10z"/>
<path fill="#9b9522" d="M1500 290h10v10h-10z"/>
<path fill="#9a851c" d="M1510 290h10v10h-10z"/>
<path fill="#997817" d="M1520 290h10v10h-10z"/>
<path fill="#996c12" d="M1530 290h10v10h-10z"/>
<path fill="#98620e" d="M1540 290h10v10h-10z"/>
<path fill="#97590b" d="M1550 290h10v10h-10z"/>
<path fill="#975108" d="M1560 290h10v10h-10z"/>
<path fill="#954a05" d="M1570 290h10v10h-10z"/>
<path fill="#914203" d="M1580 290h10v10h-10z"/>
<path fill="#8e3c01" d="M1590 290h10v10h-10z"/>
<path fill="#8a3600" d="M1600 290h10v10h-10z"/>
<path fill="#873100" d="M1610 290h10v10h-10z"/>
<path fill="#842c00" d="M1620 290h10v10h-10z"/>
<path fill="#812800" d="M1630 290h10v10h-10z"/>
<path fill="#7d2400" d="M1640 290h10v10h-10z"/>
<path fill="#7a2000" d="M1650 290h10v10h-10z"/>
<path fill="#781d00" d="M1660 290h10v10h-10z"/>
<path fill="#751b00" d="M1670 290h10v10h-10z"/>
<path fill="#9d9d43" d="M1470 300h10v10h-10z"/>
<path fill="#9c9c38" d="M1480 300h10v10h-10z"/>
<path fill="#9b982f" d="M1490 300h10v10h-10z"/>
<path fill="#9b8727" d="M1500 300h10v10h-10z"/>
<path fill="#9a7921" d="M1510 300h10v10h-10z"/>
<path fill="#996d1b" d="M1520 300h10v10h-10z"/>
<path fill="#996217" d="M1530 300h10v10h-10z"/>
<path fill="#985913" d="M1540 300h10v10h-10z"/>
<path fill="#97510f" d="M1550 300h10v10h-10z"/>
<path fill="#974a0c" d="M1560 300h10v10h-10z"/>
<path fill="#954309" d="M1570 300h10v10h-10z"/>
<path fill="#913c06" d="M1580 300h10v10h-10z"/>
<path fill="#8e3604" d="M1590 300h10v10h-10z"/>
<path fill="#8a3102" d="M1600 300h10v10h-10z"/>
<path fill="#872c00" d="M1610 300h10v10h-10z"/>
<path fill="#842700" d="M1620 300h10v10h-10z"/>
<path fill="#812300" d="M1630 300h10v10h-10z"/>
<path fill="#7d2000" d="M1640 300h10v10h-10z"/>
<path fill="#7a1d00" d="M1650 300h10v10h-10z"/>
<path fill="#781a00" d="M1660 300h10v10h-10z"/>
<path fill="#751700" d="M1670 300h10v10h-10z"/>
<path fill="#731500" d="M1680 300h10v10h-10z"/>
<path fill="#701300" d="M1690 300h10v10h-10z"/>
<path fill="#9d9d56" d="M1460 310h10v10h-10z"/>
<path fill="#9d9d48" d="M1470 310h10v10h-10z"/>
<path fill="#9c9b3d" d="M1480 310h10v10h-10z"/>
<path fill="#9b8934" d="M1490 310h10v10h-10z"/>
<path fill="#9b7a2c" d="M1500 310h10v10h-10z"/>
<path fill="#9a6d25" d="M1510 310h10v10h-10z"/>
<path fill="#996220" d="M1520 310h10v10h-10z"/>
<path fill="#99591b" d="M1530 310h10v10h-10z"/>
<path fill="#985017" d="M1540 310h10v10h-10z"/>
<path fill="#974913" d="M1550 310h10v10h-10z"/>
<path fill="#974310" d="M1560 310h10v10h-10z"/>
<path fill="#953c0c" d="M1570 310h10v10h-10z"/>
<path fill="#91360a" d="M1580 310h10v10h-10z"/>
<path fill="#8e3007" d="M1590 310h10v10h-10z"/>
<path fill="#8a2b05" d="M1600 310h10v10h-10z"/>
<path fill="#872703" d="M1610 310h10v10h-10z"/>
<path fill="#842302" d="M1620 310h10v10h-10z"/>
<path fill="#811f00" d="M1630 310h10v10h-10z"/>
<path fill="#7d1c00" d="M1640 310h10v10h-10z"/>
<path fill="#7a1900" d="M1650 310h10v10h-10z"/>
<path fill="#781700" d="M1660 310h10v10h-10z"/>
<path fill="#751400" d="M1670 310h10v10h-10z"/>
<path fill="#731200" d="M1680 310h10v10h-10z"/>
<path fill="#701000" d="M1690 310h10v10h-10z"/>
<path fill="#6d0f00" d="M1700 310h10v10h-10z"/>
<path fill="#9d9d5b" d="M1460 320h10v10h-10z"/>
<path fill="#9d9d4d" d="M1470 320h10v10h-10z"/>
<path fill="#9c8b42" d="M1480 320h10v10h-10z"/>
<path fill="#9b7b38" d="M1490 320h10v10h-10z"/>
<path fill="#9b6e30" d="M1500 320h10v10h-10z"/>
<path fill="#9a622a" d="M1510 320h10v10h-10z"/>
<path fill="#995824" d="M1520 320h10v10h-10z"/>
<path fill="#99501f" d="M1530 320h10v10h-10z"/>
<path fill="#98481a" d="M1540 320h10v10h-10z"/>
<path fill="#974117" d="M1550 320h10v10h-10z"/>
<path fill="#973c13" d="M1560 320h10v10h-10z"/>
<path fill="#953610" d="M1570 320h10v10h-10z"/>
<path fill="#91300d" d="M1580 320h10v10h-10z"/>
<path fill="#8e2b0a" d="M1590 320h10v10h-10z"/>
<path fill="#8a2608" d="M1600 320h10v10h-10z"/>
<path fill="#872206" d="M1610 320h10v10h-10z"/>
<path fill="#841f04" d="M1620 320h10v10h-10z"/>
<path fill="#811b02" d="M1630 320h10v10h-10z"/>
<path fill="#7d1901" d="M1640 320h10v10h-10z"/>
<path fill="#7a1600" d="M1650 320h10v10h-10z"/>
<path fill="#781400" d="M1660 320h10v10h-10z"/>
<path fill="#751100" d="M1670 320h10v10h-10z"/>
<path fill="#730f00" d="M1680 320h10v10h-10z"/>
<path fill="#700e00" d="M1690 320h10v10h-10z"/>
<path fill="#6d0c00" d="M1700 320h10v10h-10z"/>
<path fill="#6b0b00" d="M1710 320h10v10h-10z"/>
<path fill="#9d9d70" d="M1450 330h10v10h-10z"/>
<path fill="#9d9d5f" d="M1460 330h10v10h-10z"/>
<path fill="#9d8e52" d="M1470 330h10v10h-10z"/>
<path fill="#9c7d46" d="M1480 330h10v10h-10z"/>
<path fill="#9b6e3d" d="M1490 330h10v10h-10z"/>
<path fill="#9b6235" d="M1500 330h10v10h-10z"/>
<path fill="#9a582e" d="M1510 330h10v10h-10z"/>
<path fill="#994f28" d="M1520 330h10v10h-10z"/>
<path fill="#994723" d="M1530 330h10v10h-10z"/>
<path fill="#98401e" d="M1540 330h10v10h-10z"/>
<path fill="#973a1a" d="M1550 330h10v10h-10z"/>
<path fill="#973516" d="M1560 330h10v10h-10z"/>
<path fill="#953013" d="M1570 330h10v10h-10z"/>
<path fill="#912a10" d="M1580 330h10v10h-10z"/>
<path fill="#8e260d" d="M1590 330h10v10h-10z"/>
<path fill="#8a220b" d="M1600 330h10v10h-10z"/>
<path fill="#871e08" d="M1610 330h10v10h-10z"/>
<path fill="#841b06" d="M1620 330h10v10h-10z"/>
<path fill="#811805" d="M1630 330h10v10h-10z"/>
<path fill="#7d1503" d="M1640 330h10v10h-10z"/>
<path fill="#7a1302" d="M1650 330h10v10h-10z"/>
<path fill="#781001" d="M1660 330h10v10h-10z"/>
<path fill="#750e00" d="M1670 330h10v10h-10z"/>
<path fill="#730d00" d="M1680 330h10v10h-10z"/>
<path fill="#700b00" d="M1690 330h10v10h-10z"/>
<path fill="#6d0a00" d="M1700 330h10v10h-10z"/>
<path fill="#6b0800" d="M1710 330h10v10h-10z"/>
<path fill="#680700" d="M1720 330h10v10h-10z"/>
<path fill="#660600" d="M1730 330h10v10h-10z"/>
<path fill="#9d9d89" d="M1440 340h10v10h-10z"/>
<path fill="#9d9d74" d="M1450 340h10v10h-10z"/>
<path fill="#9d9063" d="M1460 340h10v10h-10z"/>
<path fill="#9d7e56" d="M1470 340h10v10h-10z"/>
<path fill="#9c6f4a" d="M1480 340h10v10h-10z"/>
<path fill="#9b6241" d="M1490 340h10v10h-10z"/>
<path fill="#9b5839" d="M1500 340h10v10h-10z"/>
<path fill="#9a4e32" d="M1510 340h10v10h-10z"/>
<path fill="#99462c" d="M1520 340h10v10h-10z"/>
<path fill="#993f26" d="M1530 340h10v10h-10z"/>
<path fill="#983922" d="M1540 340h10v10h-10z"/>
<path fill="#97331d" d="M1550 340h10v10h-10z"/>
<path fill="#972e1a" d="M1560 340h10v10h-10z"/>
<path fill="#952a16" d="M1570 340h10v10h-10z"/>
<path fill="#912513" d="M1580 340h10v10h-10z"/>
<path fill="#8e2110" d="M1590 340h10v10h-10z"/>
<path fill="#8a1d0d" d="M1600 340h10v10h-10z"/>
<path fill="#871a0b" d="M1610 340h10v10h-10z"/>
<path fill="#841709" d="M1620 340h10v10h-10z"/>
<path fill="#811407" d="M1630 340h10v10h-10z"/>
<path fill="#7d1205" d="M1640 340h10v10h-10z"/>
<path fill="#7a0f04" d="M1650 340h10v10h-10z"/>
<path fill="#780d03" d="M1660 340h10v10h-10z"/>
<path fill="#750c01" d="M1670 340h10v10h-10z"/>
<path fill="#730a00" d="M1680 340h10v10h-10z"/>
<path fill="#700900" d="M1690 340h10v10h-10z"/>
<path fill="#6d0700" d="M1700 340h10v10h-10z"/>
<path fill="#6b0600" d="M1710 340h10v10h-10z"/>
<path fill="#680500" d="M1720 340h10v10h-10z"/>
<path fill="#660400" d="M1730 340h10v10h-10z"/>
<path fill="#650300" d="M1740 340h10v10h-10z"/>
<path fill="#9d9d9d" d="M1430 350h10v10h-10z"/>
<path fill="#9d9d8c" d="M1440 350h10v10h-10z"/>
<path fill="#9d9377" d="M1450 350h10v10h-10z"/>
<path fill="#9d7f67" d="M1460 350h10v10h-10z"/>
<path fill="#9d7059" d="M1470 350h10v10h-10z"/>
<path fill="#9c624e" d="M1480 350h10v10h-10z"/>
<path fill="#9b5744" d="M1490 350h10v10h-10z"/>
<path fill="#9b4d3c" d="M1500 350h10v10h-10z"/>
<path fill="#9a4535" d="M1510 350h10v10h-10z"/>
<path fill="#993e2f" d="M1520 350h10v10h-10z"/>
<path fill="#99372a" d="M1530 350h10v10h-10z"/>
<path fill="#983225" d="M1540 350h10v10h-10z"/>
<path fill="#972d21" d="M1550 350h10v10h-10z"/>
<path fill="#97281d" d="M1560 350h10v10h-10z"/>
<path fill="#952419" d="M1570 350h10v10h-10z"/>
<path fill="#912016" d="M1580 350h10v10h-10z"/>
<path fill="#8e1c13" d="M1590 350h10v10h-10z"/>
<path fill="#8a1910" d="M1600 350h10v10h-10z"/>
<path fill="#87160d" d="M1610 350h10v10h-10z"/>
<path fill="#84130b" d="M1620 350h10v10h-10z"/>
<path fill="#811009" d="M1630 350h10v10h-10z"/>
<path fill="#7d0e07" d="M1640 350h10v10h-10z"/>
<path fill="#7a0c06" d="M1650 350h10v10h-10z"/>
<path fill="#780a04" d="M1660 350h10v10h-10z"/>
<path fill="#750903" d="M1670 350h10v10h-10z"/>
<path fill="#730702" d="M1680 350h10v10h-10z"/>
<path fill="#700601" d="M1690 350h10v10h-10z"/>
<path fill="#6d0500" d="M1700 350h10v10h-10z"/>
<path fill="#6b0400" d="M1710 350h10v10h-10z"/>
<path fill="#680300" d="M1720 350h10v10h-10z"/>
<path fill="#660200" d="M1730 350h10v10h-10z"/>
<path fill="#650100" d="M1740 350h10v10h-10z"/>
<path fill="#630000" d="M1750 350h10v10h-10z"/>
<path fill="#620000" d="M1760 350h10v10h-10z"/>
<path fill="#9d9d9d" d="M1420 360h20v10h-20z"/>
<path fill="#9d958e" d="M1440 360h10v10h-10z"/>
<path fill="#9d817a" d="M1450 360h10v10h-10z"/>
<path fill="#9d706a" d="M1460 360h10v10h-10z"/>
<path fill="#9d625d" d="M1470 360h10v10h-10z"/>
<path fill="#9c5652" d="M1480 360h10v10h-10z"/>
<path fill="#9b4c48" d="M1490 360h10v10h-10z"/>
<path fill="#9b4440" d="M1500 360h10v10h-10z"/>
<path fill="#9a3c39" d="M1510 360h10v10h-10z"/>
<path fill="#993632" d="M1520 360h10v10h-10z"/>
<path fill="#99302d" d="M1530 360h10v10h-10z"/>
<path fill="#982b28" d="M1540 360h10v10h-10z"/>
<path fill="#972624" d="M1550 360h10v10h-10z"/>
<path fill="#972220" d="M1560 360h10v10h-10z"/>
<path fill="#951e1c" d="M1570 360h10v10h-10z"/>
<path fill="#911b18" d="M1580 360h10v10h-10z"/>
<path fill="#8e1715" d="M1590 360h10v10h-10z"/>
<path fill="#8a1412" d="M1600 360h10v10h-10z"/>
<path fill="#871110" d="M1610 360h10v10h-10z"/>
<path fill="#840f0d" d="M1620 360h10v10h-10z"/>
<path fill="#810d0b" d="M1630 360h10v10h-10z"/>
<path fill="#7d0b09" d="M1640 360h10v10h-10z"/>
<path fill="#7a0908" d="M1650 360h10v10h-10z"/>
<path fill="#780806" d="M1660 360h10v10h-10z"/>
<path fill="#750605" d="M1670 360h10v10h-10z"/>
<path fill="#730504" d="M1680 360h10v10h-10z"/>
<path fill="#700403" d="M1690 360h10v10h-10z"/>
<path fill="#6d0302" d="M1700 360h10v10h-10z"/>
<path fill="#6b0201" d="M1710 360h10v10h-10z"/>
<path fill="#680100" d="M1720 360h10v10h-10z"/>
<path fill="#660000" d="M1730 360h10v10h-10z"/>
<path fill="#650000" d="M1740 360h10v10h-10z"/>
<path fill="#630000" d="M1750 360h10v10h-10z"/>
<path fill="#620000" d="M1760 360h10v10h-10z"/>
<path fill="#600000" d="M1770 360h10v10h-10z"/>
<path fill="#9d9d9d" d="M1420 370h10v10h-10z"/>
<path fill="#9d999d" d="M1430 370h10v10h-10z"/>
<path fill="#9d8290" d="M1440 370h10v10h-10z"/>
<path fill="#9d707d" d="M1450 370h10v10h-10z"/>
<path fill="#9d626d" d="M1460 370h10v10h-10z"/>
<path fill="#9d5660" d="M1470 370h10v10h-10z"/>
<path fill="#9c4b55" d="M1480 370h10v10h-10z"/>
<path fill="#9b424b" d="M1490 370h10v10h-10z"/>
<path fill="#9b3b43" d="M1500 370h10v10h-10z"/>
<path fill="#9a343c" d="M1510 370h10v10h-10z"/>
<path fill="#992e36" d="M1520 370h10v10h-10z"/>
<path fill="#992930" d="M1530 370h10v10h-10z"/>
<path fill="#98242b" d="M1540 370h10v10h-10z"/>
<path fill="#972027" d="M1550 370h10v10h-10z"/>
<path fill="#971d23" d="M1560 370h10v10h-10z"/>
<path fill="#95191f" d="M1570 370h10v10h-10z"/>
<path fill="#91161b" d="M1580 370h10v10h-10z"/>
<path fill="#8e1318" d="M1590 370h10v10h-10z"/>
<path fill="#8a1015" d="M1600 370h10v10h-10z"/>
<path fill="#870e12" d="M1610 370h10v10h-10z"/>
<path fill="#840b10" d="M1620 370h10v10h-10z"/>
<path fill="#81090d" d="M1630 370h10v10h-10z"/>
<path fill="#7d080b" d="M1640 370h10v10h-10z"/>
<path fill="#7a060a" d="M1650 370h10v10h-10z"/>
<path fill="#780508" d="M1660 370h10v10h-10z"/>
<path fill="#750407" d="M1670 370h10v10h-10z"/>
<path fill="#730205" d="M1680 370h10v10h-10z"/>
<path fill="#700104" d="M1690 370h10v10h-10z"/>
<path fill="#6d0003" d="M1700 370h10v10h-10z"/>
<path fill="#6b0002" d="M1710 370h10v10h-10z"/>
<path fill="#680001" d="M1720 370h10v10h-10z"/>
<path fill="#660001" d="M1730 370h10v10h-10z"/>
<path fill="#650000" d="M1740 370h10v10h-10z"/>
<path fill="#630000" d="M1750 370h10v10h-10z"/>
<path fill="#620000" d="M1760 370h10v10h-10z"/>
<path fill="#600000" d="M1770 370h10v10h-10z"/>
<path fill="#5f0000" d="M1780 370h10v10h-10z"/>
<path fill="#9d9c9d" d="M1420 380h10v10h-10z"/>
<path fill="#9d849d" d="M1430 380h10v10h-10z"/>
<path fill="#9d7092" d="M1440 380h10v10h-10z"/>
<path fill="#9d6180" d="M1450 380h10v10h-10z"/>
<path fill="#9d5470" d="M1460 380h10v10h-10z"/>
<path fill="#9d4a63" d="M1470 380h10v10h-10z"/>
<path fill="#9c4158" d="M1480 380h10v10h-10z"/>
<path fill="#9b394f" d="M1490 380h10v10h-10z"/>
<path fill="#9b3246" d="M1500 380h10v10h-10z"/>
<path fill="#9a2c3f" d="M1510 380h10v10h-10z"/>
<path fill="#992739" d="M1520 380h10v10h-10z"/>
<path fill="#992233" d="M1530 380h10v10h-10z"/>
<path fill="#981e2e" d="M1540 380h10v10h-10z"/>
<path fill="#971a29" d="M1550 380h10v10h-10z"/>
<path fill="#971725" d="M1560 380h10v10h-10z"/>
<path fill="#951421" d="M1570 380h10v10h-10z"/>
<path fill="#91111e" d="M1580 380h10v10h-10z"/>
<path fill="#8e0e1a" d="M1590 380h10v10h-10z"/>
<path fill="#8a0c17" d="M1600 380h10v10h-10z"/>
<path fill="#870a14" d="M1610 380h10v10h-10z"/>
<path fill="#840812" d="M1620 380h10v10h-10z"/>
<path fill="#81060f" d="M1630 380h10v10h-10z"/>
<path fill="#7d050d" d="M1640 380h10v10h-10z"/>
<path fill="#7a030b" d="M1650 380h10v10h-10z"/>
<path fill="#78020a" d="M1660 380h10v10h-10z"/>
<path fill="#750108" d="M1670 380h10v10h-10z"/>
<path fill="#730007" d="M1680 380h10v10h-10z"/>
<path fill="#700006" d="M1690 380h10v10h-10z"/>
<path fill="#6d0005" d="M1700 380h10v10h-10z"/>
<path fill="#6b0004" d="M1710 380h10v10h-10z"/>
<path fill="#680003" d="M1720 380h10v10h-10z"/>
<path fill="#660002" d="M1730 380h10v10h-10z"/>
<path fill="#650001" d="M1740 380h10v10h-10z"/>
<path fill="#630000" d="M1750 380h10v10h-10z"/>
<path fill="#620000" d="M1760 380h10v10h-10z"/>
<path fill="#600000" d="M1770 380h10v10h-10z"/>
<path fill="#5f0000" d="M1780 380h10v10h-10z"/>
<path fill="#5e0000" d="M1790 380h10v10h-10z"/>
<path fill="#5d0000" d="M1800 380h10v10h-10z"/>
<path fill="#9d719d" d="M1430 390h10v10h-10z"/>
<path fill="#9d6094" d="M1440 390h10v10h-10z"/>
<path fill="#9d5382" d="M1450 390h10v10h-10z"/>
<path fill="#9d4873" d="M1460 390h10v10h-10z"/>
<path fill="#9d3f66" d="M1470 390h10v10h-10z"/>
<path fill="#9c375b" d="M1480 390h10v10h-10z"/>
<path fill="#9b3052" d="M1490 390h10v10h-10z"/>
<path fill="#9b2a49" d="M1500 390h10v10h-10z"/>
<path fill="#9a2542" d="M1510 390h10v10h-10z"/>
<path fill="#99203c" d="M1520 390h10v10h-10z"/>
<path fill="#991c36" d="M1530 390h10v10h-10z"/>
<path fill="#981831" d="M1540 390h10v10h-10z"/>
<path fill="#97152c" d="M1550 390h10v10h-10z"/>
<path fill="#971228" d="M1560 390h10v10h-10z"/>
<path fill="#950f24" d="M1570 390h10v10h-10z"/>
<path fill="#910c20" d="M1580 390h10v10h-10z"/>
<path fill="#8e0a1c" d="M1590 390h10v10h-10z"/>
<path fill="#8a0819" d="M1600 390h10v10h-10z"/>
<path fill="#870616" d="M1610 390h10v10h-10z"/>
<path fill="#840414" d="M1620 390h10v10h-10z"/>
<path fill="#810311" d="M1630 390h10v10h-10z"/>
<path fill="#7d020f" d="M1640 390h10v10h-10z"/>
<path fill="#7a000d" d="M1650 390h10v10h-10z"/>
<path fill="#78000c" d="M1660 390h10v10h-10z"/>
<path fill="#75000a" d="M1670 390h10v10h-10z"/>
<path fill="#730009" d="M1680 390h10v10h-10z"/>
<path fill="#700007" d="M1690 390h10v10h-10z"/>
<path fill="#6d0006" d="M1700 390h10v10h-10z"/>
<path fill="#6b0005" d="M1710 390h10v10h-10z"/>
<path fill="#680004" d="M1720 390h10v10h-10z"/>
<path fill="#660003" d="M1730 390h10v10h-10z"/>
<path fill="#650002" d="M1740 390h10v10h-10z"/>
<path fill="#630001" d="M1750 390h10v10h-10z"/>
<path fill="#620001" d="M1760 390h10v10h-10z"/>
<path fill="#600000" d="M1770 390h10v10h-10z"/>
<path fill="#5f0000" d="M1780 390h10v10h-10z"/>
<path fill="#5e0000" d="M1790 390h10v10h-10z"/>
<path fill="#5d0000" d="M1800 390h20v10h-20z"/>
<path fill="#9d5f9d" d="M1430 400h10v10h-10z"/>
<path fill="#9d5196" d="M1440 400h10v10h-10z"/>
<path fill="#9d4684" d="M1450 400h10v10h-10z"/>
<path fill="#9d3c75" d="M1460 400h10v10h-10z"/>
<path fill="#9d3469" d="M1470 400h10v10h-10z"/>
<path fill="#9c2d5e" d="M1480 400h10v10h-10z"/>
<path fill="#9b2754" d="M1490 400h10v10h-10z"/>
<path fill="#9b224c" d="M1500 400h10v10h-10z"/>
<path fill="#9a1d45" d="M1510 400h10v10h-10z"/>
<path fill="#99193e" d="M1520 400h10v10h-10z"/>
<path fill="#991639" d="M1530 400h10v10h-10z"/>
<path fill="#981233" d="M1540 400h10v10h-10z"/>
<path fill="#970f2f" d="M1550 400h10v10h-10z"/>
<path fill="#970d2b" d="M1560 400h10v10h-10z"/>
<path fill="#950a26" d="M1570 400h10v10h-10z"/>
<path fill="#910822" d="M1580 400h10v10h-10z"/>
<path fill="#8e061f" d="M1590 400h10v10h-10z"/>
<path fill="#8a041b" d="M1600 400h10v10h-10z"/>
<path fill="#870318" d="M1610 400h10v10h-10z"/>
<path fill="#840116" d="M1620 400h10v10h-10z"/>
<path fill="#810013" d="M1630 400h10v10h-10z"/>
<path fill="#7d0011" d="M1640 400h10v10h-10z"/>
<path fill="#7a000f" d="M1650 400h10v10h-10z"/>
<path fill="#78000d" d="M1660 400h10v10h-10z"/>
<path fill="#75000c" d="M1670 400h10v10h-10z"/>
<path fill="#73000a" d="M1680 400h10v10h-10z"/>
<path fill="#700009" d="M1690 400h10v10h-10z"/>
<path fill="#6d0007" d="M1700 400h10v10h-10z"/>
<path fill="#6b0006" d="M1710 400h10v10h-10z"/>
<path fill="#680005" d="M1720 400h10v10h-10z"/>
<path fill="#660004" d="M1730 400h10v10h-10z"/>
<path fill="#650003" d="M1740 400h10v10h-10z"/>
<path fill="#630003" d="M1750 400h10v10h-10z"/>
<path fill="#620002" d="M1760 400h10v10h-10z"/>
<path fill="#600001" d="M1770 400h10v10h-10z"/>
<path fill="#5f0001" d="M1780 400h10v10h-10z"/>
<path fill="#5e0000" d="M1790 400h10v10h-10z"/>
<path fill="#5d0000" d="M1800 400h10v10h-10z"/>
<path fill="#9d509d" d="M1430 410h10v10h-10z"/>
<path fill="#9d4497" d="M1440 410h10v10h-10z"/>
<path fill="#9d3a86" d="M1450 410h10v10h-10z"/>
<path fill="#9d3278" d="M1460 410h10v10h-10z"/>
<path fill="#9d2b6b" d="M1470 410h10v10h-10z"/>
<path fill="#9c2460" d="M1480 410h10v10h-10z"/>
<path fill="#9b1f57" d="M1490 410h10v10h-10z"/>
<path fill="#9b1b4f" d="M1500 410h10v10h-10z"/>
<path fill="#9a1647" d="M1510 410h10v10h-10z"/>
<path fill="#991341" d="M1520 410h10v10h-10z"/>
<path fill="#99103b" d="M1530 410h10v10h-10z"/>
<path fill="#980d36" d="M1540 410h10v10h-10z"/>
<path fill="#970a31" d="M1550 410h10v10h-10z"/>
<path fill="#97082d" d="M1560 410h10v10h-10z"/>
<path fill="#950629" d="M1570 410h10v10h-10z"/>
<path fill="#910425" d="M1580 410h10v10h-10z"/>
<path fill="#8e0221" d="M1590 410h10v10h-10z"/>
<path fill="#8a001d" d="M1600 410h10v10h-10z"/>
<path fill="#87001a" d="M1610 410h10v10h-10z"/>
<path fill="#840018" d="M1620 410h10v10h-10z"/>
<path fill="#810015" d="M1630 410h10v10h-10z"/>
<path fill="#7d0013" d="M1640 410h10v10h-10z"/>
<path fill="#7a0011" d="M1650 410h10v10h-10z"/>
<path fill="#78000f" d="M1660 410h10v10h-10z"/>
<path fill="#75000d" d="M1670 410h10v10h-10z"/>
<path fill="#73000b" d="M1680 410h10v10h-10z"/>
<path fill="#70000a" d="M1690 410h10v10h-10z"/>
<path fill="#6d0009" d="M1700 410h10v10h-10z"/>
<path fill="#6b0008" d="M1710 410h10v10h-10z"/>
<path fill="#680006" d="M1720 410h10v10h-10z"/>
<path fill="#660005" d="M1730 410h10v10h-10z"/>
<path fill="#650005" d="M1740 410h10v10h-10z"/>
<path fill="#630004" d="M1750 410h10v10h-10z"/>
<path fill="#620003" d="M1760 410h10v10h-10z"/>
<path fill="#600002" d="M1770 410h10v10h-10z"/>
<path fill="#5f0002" d="M1780 410h10v10h-10z"/>
<path fill="#5e0001" d="M1790 410h10v10h-10z"/>
<path fill="#9d419d" d="M1430 420h10v10h-10z"/>
<path fill="#9d3799" d="M1440 420h10v10h-10z"/>
<path fill="#9d2f88" d="M1450 420h10v10h-10z"/>
<path fill="#9d277a" d="M1460 420h10v10h-10z"/>
<path fill="#9d216e" d="M1470 420h10v10h-10z"/>
<path fill="#9c1c63" d="M1480 420h10v10h-10z"/>
<path fill="#9b175a" d="M1490 420h10v10h-10z"/>
<path fill="#9b1351" d="M1500 420h10v10h-10z"/>
<path fill="#9a104a" d="M1510 420h10v10h-10z"/>
<path fill="#990d44" d="M1520 420h10v10h-10z"/>
<path fill="#990a3e" d="M1530 420h10v10h-10z"/>
<path fill="#980738" d="M1540 420h10v10h-10z"/>
<path fill="#970534" d="M1550 420h10v10h-10z"/>
<path fill="#97032f" d="M1560 420h10v10h-10z"/>
<path fill="#95012b" d="M1570 420h10v10h-10z"/>
<path fill="#910027" d="M1580 420h10v10h-10z"/>
<path fill="#8e0023" d="M1590 420h10v10h-10z"/>
<path fill="#8a001f" d="M1600 420h10v10h-10z"/>
<path fill="#87001c" d="M1610 420h10v10h-10z"/>
<path fill="#840019" d="M1620 420h10v10h-10z"/>
<path fill="#810017" d="M1630 420h10v10h-10z"/>
<path fill="#7d0014" d="M1640 420h10v10h-10z"/>
<path fill="#7a0012" d="M1650 420h10v10h-10z"/>
<path fill="#780010" d="M1660 420h10v10h-10z"/>
<path fill="#75000f" d="M1670 420h10v10h-10z"/>
<path fill="#73000d" d="M1680 420h10v10h-10z"/>
<path fill="#70000b" d="M1690 420h10v10h-10z"/>
<path fill="#6d000a" d="M1700 420h10v10h-10z"/>
<path fill="#6b0009" d="M1710 420h10v10h-10z"/>
<path fill="#680008" d="M1720 420h10v10h-10z"/>
<path fill="#660007" d="M1730 420h10v10h-10z"/>
<path fill="#650006" d="M1740 420h10v10h-10z"/>
<path fill="#630005" d="M1750 420h10v10h-10z"/>
<path fill="#620004" d="M1760 420h10v10h-10z"/>
<path fill="#9d349d" d="M1430 430h10v10h-10z"/>
<path fill="#9d2b9a" d="M1440 430h10v10h-10z"/>
<path fill="#9d248a" d="M1450 430h10v10h-10z"/>
<path fill="#9d1e7c" d="M1460 430h10v10h-10z"/>
<path fill="#9d1970" d="M1470 430h10v10h-10z"/>
<path fill="#9c1465" d="M1480 430h10v10h-10z"/>
<path fill="#9b105c" d="M1490 430h10v10h-10z"/>
<path fill="#9b0d54" d="M1500 430h10v10h-10z"/>
<path fill="#9a0a4c" d="M1510 430h10v10h-10z"/>
<path fill="#990746" d="M1520 430h10v10h-10z"/>
<path fill="#990440" d="M1530 430h10v10h-10z"/>
<path fill="#98023b" d="M1540 430h10v10h-10z"/>
<path fill="#970036" d="M1550 430h10v10h-10z"/>
<path fill="#970032" d="M1560 430h10v10h-10z"/>
<path fill="#95002d" d="M1570 430h10v10h-10z"/>
<path fill="#910029" d="M1580 430h10v10h-10z"/>
<path fill="#8e0025" d="M1590 430h10v10h-10z"/>
<path fill="#8a0021" d="M1600 430h10v10h-10z"/>
<path fill="#87001e" d="M1610 430h10v10h-10z"/>
<path fill="#84001b" d="M1620 430h10v10h-10z"/>
<path fill="#810019" d="M1630 430h10v10h-10z"/>
<path fill="#7d0016" d="M1640 430h10v10h-10z"/>
<path fill="#7a0014" d="M1650 430h10v10h-10z"/>
<path fill="#780012" d="M1660 430h10v10h-10z"/>
<path fill="#750010" d="M1670 430h10v10h-10z"/>
<path fill="#73000e" d="M1680 430h10v10h-10z"/>
<path fill="#70000d" d="M1690 430h10v10h-10z"/>
<path fill="#6d000b" d="M1700 430h10v10h-10z"/>
<path fill="#6b000a" d="M1710 430h10v10h-10z"/>
<path fill="#680009" d="M1720 430h10v10h-10z"/>
<path fill="#660008" d="M1730 430h10v10h-10z"/>
<path fill="#9d279d" d="M1430 440h10v10h-10z"/>
<path fill="#9d209c" d="M1440 440h10v10h-10z"/>
<path fill="#9d1a8c" d="M1450 440h10v10h-10z"/>
<path fill="#9d157e" d="M1460 440h10v10h-10z"/>
<path fill="#9d1172" d="M1470 440h10v10h-10z"/>
<path fill="#9c0d68" d="M1480 440h10v10h-10z"/>
<path fill="#9b095e" d="M1490 440h10v10h-10z"/>
<path fill="#9b0656" d="M1500 440h10v10h-10z"/>
<path fill="#9a044f" d="M1510 440h10v10h-10z"/>
<path fill="#990148" d="M1520 440h10v10h-10z"/>
<path fill="#990042" d="M1530 440h10v10h-10z"/>
<path fill="#98003d" d="M1540 440h10v10h-10z"/>
<path fill="#970038" d="M1550 440h10v10h-10z"/>
<path fill="#970034" d="M1560 440h10v10h-10z"/>
<path fill="#950030" d="M1570 440h10v10h-10z"/>
<path fill="#91002b" d="M1580 440h10v10h-10z"/>
<path fill="#8e0027" d="M1590 440h10v10h-10z"/>
<path fill="#8a0023" d="M1600 440h10v10h-10z"/>
<path fill="#870020" d="M1610 440h10v10h-10z"/>
<path fill="#84001d" d="M1620 440h10v10h-10z"/>
<path fill="#81001a" d="M1630 440h10v10h-10z"/>
<path fill="#7d0018" d="M1640 440h10v10h-10z"/>
<path fill="#7a0015" d="M1650 440h10v10h-10z"/>
<path fill="#780013" d="M1660 440h10v10h-10z"/>
<path fill="#750011" d="M1670 440h10v10h-10z"/>
<path fill="#730010" d="M1680 440h10v10h-10z"/>
<path fill="#70000e" d="M1690 440h10v10h-10z"/>
<path fill="#6d000d" d="M1700 440h10v10h-10z"/>
<path fill="#9d1c9d" d="M1430 450h10v10h-10z"/>
<path fill="#9d169d" d="M1440 450h10v10h-10z"/>
<path fill="#9d118d" d="M1450 450h10v10h-10z"/>
<path fill="#9d0c80" d="M1460 450h10v10h-10z"/>
<path fill="#9d0974" d="M1470 450h10v10h-10z"/>
<path fill="#9c056a" d="M1480 450h10v10h-10z"/>
<path fill="#9b0361" d="M1490 450h10v10h-10z"/>
<path fill="#9b0058" d="M1500 450h10v10h-10z"/>
<path fill="#9a0051" d="M1510 450h10v10h-10z"/>
<path fill="#99004b" d="M1520 450h10v10h-10z"/>
<path fill="#990045" d="M1530 450h10v10h-10z"/>
<path fill="#98003f" d="M1540 450h10v10h-10z"/>
<path fill="#97003b" d="M1550 450h10v10h-10z"/>
<path fill="#970036" d="M1560 450h10v10h-10z"/>
<path fill="#950032" d="M1570 450h10v10h-10z"/>
<path fill="#91002d" d="M1580 450h10v10h-10z"/>
<path fill="#8e0029" d="M1590 450h10v10h-10z"/>
<path fill="#8a0025" d="M1600 450h10v10h-10z"/>
<path fill="#870022" d="M1610 450h10v10h-10z"/>
<path fill="#84001f" d="M1620 450h10v10h-10z"/>
<path fill="#81001c" d="M1630 450h10v10h-10z"/>
<path fill="#7d0019" d="M1640 450h10v10h-10z"/>
<path fill="#7a0017" d="M1650 450h10v10h-10z"/>
<path fill="#780015" d="M1660 450h10v10h-10z"/>
<path fill="#750013" d="M1670 450h10v10h-10z"/>
<path fill="#730011" d="M1680 450h10v10h-10z"/>
<path fill="#9d119d" d="M1430 460h10v10h-10z"/>
<path fill="#9d0c9d" d="M1440 460h10v10h-10z"/>
<path fill="#9d088f" d="M1450 460h10v10h-10z"/>
<path fill="#9d0482" d="M1460 460h10v10h-10z"/>
<path fill="#9d0176" d="M1470 460h10v10h-10z"/>
<path fill="#9c006c" d="M1480 460h10v10h-10z"/>
<path fill="#9b0063" d="M1490 460h10v10h-10z"/>
<path fill="#9b005b" d="M1500 460h10v10h-10z"/>
<path fill="#9a0053" d="M1510 460h10v10h-10z"/>
<path fill="#99004d" d="M1520 460h10v10h-10z"/>
<path fill="#990047" d="M1530 460h10v10h-10z"/>
<path fill="#980042" d="M1540 460h10v10h-10z"/>
<path fill="#97003d" d="M1550 460h10v10h-10z"/>
<path fill="#970038" d="M1560 460h10v10h-10z"/>
<path fill="#950034" d="M1570 460h10v10h-10z"/>
<path fill="#91002f" d="M1580 460h10v10h-10z"/>
<path fill="#8e002b" d="M1590 460h10v10h-10z"/>
<path fill="#8a0027" d="M1600 460h10v10h-10z"/>
<path fill="#870024" d="M1610 460h10v10h-10z"/>
<path fill="#840020" d="M1620 460h10v10h-10z"/>
<path fill="#81001d" d="M1630 460h10v10h-10z"/>
<path fill="#7d001b" d="M1640 460h10v10h-10z"/>
<path fill="#7a0018" d="M1650 460h10v10h-10z"/>
<path fill="#9d079d" d="M1430 470h10v10h-10z"/>
<path fill="#9d039d" d="M1440 470h10v10h-10z"/>
<path fill="#9d0090" d="M1450 470h10v10h-10z"/>
<path fill="#9d0083" d="M1460 470h10v10h-10z"/>
<path fill="#9d0078" d="M1470 470h10v10h-10z"/>
<path fill="#9c006e" d="M1480 470h10v10h-10z"/>
<path fill="#9b0065" d="M1490 470h10v10h-10z"/>
<path fill="#9b005d" d="M1500 470h10v10h-10z"/>
<path fill="#9a0055" d="M1510 470h10v10h-10z"/>
<path fill="#99004f" d="M1520 470h10v10h-10z"/>
<path fill="#990049" d="M1530 470h10v10h-10z"/>
<path fill="#980044" d="M1540 470h10v10h-10z"/>
<path fill="#97003f" d="M1550 470h10v10h-10z"/>
<path fill="#97003a" d="M1560 470h10v10h-10z"/>
<path fill="#950036" d="M1570 470h10v10h-10z"/>
<path fill="#910031" d="M1580 470h10v10h-10z"/>
<path fill="#8e002d" d="M1590 470h10v10h-10z"/>
<path fill="#8a0029" d="M1600 470h10v10h-10z"/>
<path fill="#870025" d="M1610 470h10v10h-10z"/>
<path fill="#840022" d="M1620 470h10v10h-10z"/>
<path fill="#9d009d" d="M1430 480h20v10h-20z"/>
<path fill="#9d0091" d="M1450 480h10v10h-10z"/>
<path fill="#9d0085" d="M1460 480h10v10h-10z"/>
<path fill="#9d007a" d="M1470 480h10v10h-10z"/>
<path fill="#9c0070" d="M1480 480h10v10h-10z"/>
<path fill="#9b0067" d="M1490 480h10v10h-10z"/>
<path fill="#9b005f" d="M1500 480h10v10h-10z"/>
<path fill="#9a0057" d="M1510 480h10v10h-10z"/>
<path fill="#990051" d="M1520 480h10v10h-10z"/>
<path fill="#99004b" d="M1530 480h10v10h-10z"/>
<path fill="#980046" d="M1540 480h10v10h-10z"/>
<path fill="#970041" d="M1550 480h10v10h-10z"/>
<path fill="#97003c" d="M1560 480h10v10h-10z"/>
<path fill="#950038" d="M1570 480h10v10h-10z"/>
<path fill="#910033" d="M1580 480h10v10h-10z"/>
<path fill="#8e002f" d="M1590 480h10v10h-10z"/>
<path fill="#9d009d" d="M1430 490h20v10h-20z"/>
<path fill="#9d0093" d="M1450 490h10v10h-10z"/>
<path fill="#9d0086" d="M1460 490h10v10h-10z"/>
<path fill="#9d007b" d="M1470 490h10v10h-10z"/>
<path fill="#9c0071" d="M1480 490h10v10h-10z"/>
<path fill="#9b0068" d="M1490 490h10v10h-10z"/>
<path fill="#9b0060" d="M1500 490h10v10h-10z"/>
<path fill="#9a0059" d="M1510 490h10v10h-10z"/>
<path fill="#990053" d="M1520 490h10v10h-10z"/>
<path fill="#99004d" d="M1530 490h10v10h-10z"/>
<path fill="#980048" d="M1540 490h10v10h-10z"/>
<path fill="#970043" d="M1550 490h10v10h-10z"/>
<path fill="#97003e" d="M1560 490h10v10h-10z"/>
<path fill="#9d009d" d="M1430 500h20v10h-20z"/>
<path fill="#9d0094" d="M1450 500h10v10h-10z"/>
<path fill="#9d0088" d="M1460 500h10v10h-10z"/>
<path fill="#9d007d" d="M1470 500h10v10h-10z"/>
<path fill="#9c0073" d="M1480 500h10v10h-10z"/>
<path fill="#9b006a" d="M1490 500h10v10h-10z"/>
<path fill="#9b0062" d="M1500 500h10v10h-10z"/>
<path fill="#9a005b" d="M1510 500h10v10h-10z"/>
<path fill="#990055" d="M1520 500h10v10h-10z"/>
<path fill="#99004f" d="M1530 500h10v10h-10z"/>
<path fill="#9d009d" d="M1430 510h20v10h-20z"/>
<path fill="#9d0095" d="M1450 510h10v10h-10z"/>
<path fill="#9d0089" d="M1460 510h10v10h-10z"/>
<path fill="#9d007e" d="M1470 510h10v10h-10z"/>
<path fill="#9c0075" d="M1480 510h10v10h-10z"/>
<path fill="#9b006c" d="M1490 510h10v10h-10z"/>
<path fill="#9b0064" d="M1500 510h10v10h-10z"/>
<path fill="#9d009d" d="M1430 520h20v10h-20z"/>
<path fill="#9d0096" d="M1450 520h10v10h-10z"/>
<path fill="#9d008a" d="M1460 520h10v10h-10z"/>
<path fill="#9d0080" d="M1470 520h10v10h-10z"/>
<path fill="#9d009d" d="M1430 530h20v10h-20z"/>
</g></g>
<g clip-path="url(#sec1)"><g filter="url(#blo)">
<path fill="#006f00" d="M1220 40h30v10h-30z"/>
<path fill="#007000" d="M1200 50h20v10h-20z"/>
<path fill="#007100" d="M1220 50h30v10h-30z"/>
<path fill="#007200" d="M1250 50h20v10h-20z"/>
<path fill="#007300" d="M1270 50h30v10h-30z"/>
<path fill="#007201" d="M1180 60h10v10h-10z"/>
<path fill="#007200" d="M1190 60h10v10h-10z"/>
<path fill="#007300" d="M1200 60h30v10h-30z"/>
<path fill="#007400" d="M1230 60h20v10h-20z"/>
<path fill="#007500" d="M1250 60h30v10h-30z"/>
<path fill="#007600" d="M1280 60h20v10h-20z"/>
<path fill="#007700" d="M1300 60h30v10h-30z"/>
<path fill="#007502" d="M1180 70h10v10h-10z"/>
<path fill="#007501" d="M1190 70h10v10h-10z"/>
<path fill="#007500" d="M1200 70h10v10h-10z"/>
<path fill="#007600" d="M1210 70h20v10h-20z"/>
<path fill="#007700" d="M1230 70h30v10h-30z"/>
<path fill="#007800" d="M1260 70h20v10h-20z"/>
<path fill="#007900" d="M1280 70h30v10h-30z"/>
<path fill="#007a00" d="M1310 70h20v10h-20z"/>
<path fill="#007b00" d="M1330 70h20v10h-20z"/>
<path fill="#007705" d="M1170 80h10v10h-10z"/>
<path fill="#007704" d="M1180 80h10v10h-10z"/>
<path fill="#007803" d="M1190 80h10v10h-10z"/>
<path fill="#007802" d="M1200 80h10v10h-10z"/>
<path fill="#007901" d="M1210 80h10v10h-10z"/>
<path fill="#007900" d="M1220 80h20v10h-20z"/>
<path fill="#007a00" d="M1240 80h20v10h-20z"/>
<path fill="#007b00" d="M1260 80h30v10h-30z"/>
<path fill="#007c00" d="M1290 80h20v10h-20z"/>
<path fill="#007d00" d="M1310 80h30v10h-30z"/>
<path fill="#007e00" d="M1340 80h20v10h-20z"/>
<path fill="#007f00" d="M1360 80h10v10h-10z"/>
<path fill="#007a07" d="M1170 90h10v10h-10z"/>
<path fill="#007a06" d="M1180 90h10v10h-10z"/>
<path fill="#007b05" d="M1190 90h10v10h-10z"/>
<path fill="#007b04" d="M1200 90h10v10h-10z"/>
<path fill="#007b03" d="M1210 90h10v10h-10z"/>
<path fill="#007c02" d="M1220 90h10v10h-10z"/>
<path fill="#007c01" d="M1230 90h10v10h-10z"/>
<path fill="#007d00" d="M1240 90h30v10h-30z"/>
<path fill="#007e00" d="M1270 90h20v10h-20z"/>
<path fill="#007f00" d="M1290 90h30v10h-30z"/>
<path fill="#008000" d="M1320 90h20v10h-20z"/>
<path fill="#008100" d="M1340 90h30v10h-30z"/>
<path fill="#008200" d="M1370 90h20v10h-20z"/>
<path fill="#007c0a" d="M1160 100h10v10h-10z"/>
<path fill="#007d09" d="M1170 100h10v10h-10z"/>
<path fill="#007d08" d="M1180 100h10v10h-10z"/>
<path fill="#007d07" d="M1190 100h10v10h-10z"/>
<path fill="#007e06" d="M1200 100h10v10h-10z"/>
<path fill="#007e05" d="M1210 100h10v10h-10z"/>
<path fill="#007f04" d="M1220 100h10v10h-10z"/>
<path fill="#007f03" d="M1230 100h10v10h-10z"/>
<path fill="#007f02" d="M1240 100h10v10h-10z"/>
<path fill="#008001" d="M1250 100h10v10h-10z"/>
<path fill="#008000" d="M1260 100h10v10h-10z"/>
<path fill="#008100" d="M1270 100h30v10h-30z"/>
<path fill="#008200" d="M1300 100h20v10h-20z"/>
<path fill="#008300" d="M1320 100h30v10h-30z"/>
<path fill="#008400" d="M1350 100h20v10h-20z"/>
<path fill="#008500" d="M1370 100h30v10h-30z"/>
<path fill="#007f0c" d="M1160 110h10v10h-10z"/>
<path fill="#007f0b" d="M1170 110h10v10h-10z"/>
<path fill="#00800a" d="M1180 110h10v10h-10z"/>
<path fill="#008009" d="M1190 110h10v10h-10z"/>
<path fill="#008108" d="M1200 110h10v10h-10z"/>
<path fill="#008107" d="M1210 110h10v10h-10z"/>
<path fill="#008106" d="M1220 110h10v10h-10z"/>
<path fill="#008205" d="M1230 110h10v10h-10z"/>
<path fill="#008204" d="M1240 110h10v10h-10z"/>
<path fill="#008303" d="M1250 110h10v10h-10z"/>
<path fill="#008302" d="M1260 110h10v10h-10z"/>
<path fill="#008301" d="M1270 110h10v10h-10z"/>
<path fill="#008400" d="M1280 110h20v10h-20z"/>
<path fill="#008500" d="M1300 110h30v10h-30z"/>
<path fill="#008600" d="M1330 110h20v10h-20z"/>
<path fill="#008700" d="M1350 110h30v10h-30z"/>
<path fill="#008800" d="M1380 110h30v10h-30z"/>
<path fill="#008900" d="M1410 110h10v10h-10z"/>
<path fill="#00820e" d="M1160 120h20v10h-20z"/>
<path fill="#00830d" d="M1180 120h10v10h-10z"/>
<path fill="#00830c" d="M1190 120h10v10h-10z"/>
<path fill="#00830b" d="M1200 120h10v10h-10z"/>
<path fill="#00840a" d="M1210 120h10v10h-10z"/>
<path fill="#008409" d="M1220 120h10v10h-10z"/>
<path fill="#008507" d="M1230 120h10v10h-10z"/>
<path fill="#008506" d="M1240 120h10v10h-10z"/>
<path fill="#008505" d="M1250 120h10v10h-10z"/>
<path fill="#008604" d="M1260 120h10v10h-10z"/>
<path fill="#008603" d="M1270 120h10v10h-10z"/>
<path fill="#008702" d="M1280 120h10v10h-10z"/>
<path fill="#008700" d="M1290 120h20v10h-20z"/>
<path fill="#008800" d="M1310 120h20v10h-20z"/>
<path fill="#008900" d="M1330 120h30v10h-30z"/>
<path fill="#008a00" d="M1360 120h30v10h-30z"/>
<path fill="#008b00" d="M1390 120h20v10h-20z"/>
<path fill="#008c00" d="M1410 120h30v10h-30z"/>
<path fill="#008412" d="M1150 130h10v10h-10z"/>
<path fill="#008511" d="M1160 130h10v10h-10z"/>
<path fill="#008510" d="M1170 130h10v10h-10z"/>
<path fill="#00850f" d="M1180 130h10v10h-10z"/>
<path fill="#00860e" d="M1190 130h10v10h-10z"/>
<path fill="#00860d" d="M1200 130h10v10h-10z"/>
<path fill="#00870c" d="M1210 130h10v10h-10z"/>
<path fill="#00870b" d="M1220 130h10v10h-10z"/>
<path fill="#00870a" d="M1230 130h10v10h-10z"/>
<path fill="#008809" d="M1240 130h10v10h-10z"/>
<path fill="#008808" d="M1250 130h10v10h-10z"/>
<path fill="#008907" d="M1260 130h10v10h-10z"/>
<path fill="#008905" d="M1270 130h10v10h-10z"/>
<path fill="#008904" d="M1280 130h10v10h-10z"/>
<path fill="#008a03" d="M1290 130h10v10h-10z"/>
<path fill="#008a01" d="M1300 130h10v10h-10z"/>
<path fill="#008a00" d="M1310 130h10v10h-10z"/>
<path fill="#008b00" d="M1320 130h20v10h-20z"/>
<path fill="#008c00" d="M1340 130h30v10h-30z"/>
<path fill="#008d00" d="M1370 130h20v10h-20z"/>
<path fill="#008e00" d="M1390 130h30v10h-30z"/>
<path fill="#008f00" d="M1420 130h20v10h-20z"/>
<path fill="#009000" d="M1440 130h10v10h-10z"/>
<path fill="#008715" d="M1150 140h10v10h-10z"/>
<path fill="#008714" d="M1160 140h10v10h-10z"/>
<path fill="#008813" d="M1170 140h10v10h-10z"/>
<path fill="#008812" d="M1180 140h10v10h-10z"/>
<path fill="#008911" d="M1190 140h10v10h-10z"/>
<path fill="#008910" d="M1200 140h10v10h-10z"/>
<path fill="#00890f" d="M1210 140h10v10h-10z"/>
<path fill="#008a0e" d="M1220 140h10v10h-10z"/>
<path fill="#008a0d" d="M1230 140h10v10h-10z"/>
<path fill="#008b0c" d="M1240 140h10v10h-10z"/>
<path fill="#008b0a" d="M1250 140h10v10h-10z"/>
<path fill="#008b09" d="M1260 140h10v10h-10z"/>
<path fill="#008c08" d="M1270 140h10v10h-10z"/>
<path fill="#008c07" d="M1280 140h10v10h-10z"/>
<path fill="#008c05" d="M1290 140h10v10h-10z"/>
<path fill="#008d04" d="M1300 140h10v10h-10z"/>
<path fill="#008d03" d="M1310 140h10v10h-10z"/>
<path fill="#008e01" d="M1320 140h10v10h-10z"/>
<path fill="#008e00" d="M1330 140h20v10h-20z"/>
<path fill="#008f00" d="M1350 140h20v10h-20z"/>
<path fill="#009000" d="M1370 140h30v10h-30z"/>
<path fill="#009100" d="M1400 140h20v10h-20z"/>
<path fill="#009200" d="M1420 140h30v10h-30z"/>
<path fill="#049300" d="M1450 140h10v10h-10z"/>
<path fill="#0b9300" d="M1460 140h10v10h-10z"/>
<path fill="#008a18" d="M1150 150h10v10h-10z"/>
<path fill="#008a17" d="M1160 150h10v10h-10z"/>
<path fill="#008b16" d="M1170 150h10v10h-10z"/>
<path fill="#008b15" d="M1180 150h10v10h-10z"/>
<path fill="#008b14" d="M1190 150h10v10h-10z"/>
<path fill="#008c13" d="M1200 150h10v10h-10z"/>
<path fill="#008c12" d="M1210 150h10v10h-10z"/>
<path fill="#008d11" d="M1220 150h10v10h-10z"/>
<path fill="#008d10" d="M1230 150h10v10h-10z"/>
<path fill="#008d0f" d="M1240 150h10v10h-10z"/>
<path fill="#008e0d" d="M1250 150h10v10h-10z"/>
<path fill="#008e0c" d="M1260 150h10v10h-10z"/>
<path fill="#008e0b" d="M1270 150h10v10h-10z"/>
<path fill="#008f0a" d="M1280 150h10v10h-10z"/>
<path fill="#008f08" d="M1290 150h10v10h-10z"/>
<path fill="#009007" d="M1300 150h10v10h-10z"/>
<path fill="#009005" d="M1310 150h10v10h-10z"/>
<path fill="#009004" d="M1320 150h10v10h-10z"/>
<path fill="#009103" d="M1330 150h10v10h-10z"/>
<path fill="#009101" d="M1340 150h10v10h-10z"/>
<path fill="#009200" d="M1350 150h30v10h-30z"/>
<path fill="#009300" d="M1380 150h20v10h-20z"/>
<path fill="#009400" d="M1400 150h30v10h-30z"/>
<path fill="#009500" d="M1430 150h20v10h-20z"/>
<path fill="#079600" d="M1450 150h10v10h-10z"/>
<path fill="#0e9600" d="M1460 150h10v10h-10z"/>
<path fill="#159600" d="M1470 150h10v10h-10z"/>
<path fill="#008d1b" d="M1150 160h10v10h-10z"/>
<path fill="#008d1a" d="M1160 160h10v10h-10z"/>
<path fill="#008d19" d="M1170 160h10v10h-10z"/>
<path fill="#008e18" d="M1180 160h10v10h-10z"/>
<path fill="#008e17" d="M1190 160h10v10h-10z"/>
<path fill="#008f16" d="M1200 160h10v10h-10z"/>
<path fill="#008f15" d="M1210 160h10v10h-10z"/>
<path fill="#008f14" d="M1220 160h10v10h-10z"/>
<path fill="#009013" d="M1230 160h10v10h-10z"/>
<path fill="#009012" d="M1240 160h10v10h-10z"/>
<path fill="#009010" d="M1250 160h10v10h-10z"/>
<path fill="#00910f" d="M1260 160h10v10h-10z"/>
<path fill="#00910e" d="M1270 160h10v10h-10z"/>
<path fill="#00920d" d="M1280 160h10v10h-10z"/>
<path fill="#00920b" d="M1290 160h10v10h-10z"/>
<path fill="#00920a" d="M1300 160h10v10h-10z"/>
<path fill="#009308" d="M1310 160h10v10h-10z"/>
<path fill="#009307" d="M1320 160h10v10h-10z"/>
<path fill="#009405" d="M1330 160h10v10h-10z"/>
<path fill="#009404" d="M1340 160h10v10h-10z"/>
<path fill="#009402" d="M1350 160h10v10h-10z"/>
<path fill="#009501" d="M1360 160h10v10h-10z"/>
<path fill="#009500" d="M1370 160h10v10h-10z"/>
<path fill="#009600" d="M1380 160h30v10h-30z"/>
<path fill="#009700" d="M1410 160h20v10h-20z"/>
<path fill="#009800" d="M1430 160h10v10h-10z"/>
<path fill="#039800" d="M1440 160h10v10h-10z"/>
<path fill="#0a9800" d="M1450 160h10v10h-10z"/>
<path fill="#129900" d="M1460 160h10v10h-10z"/>
<path fill="#199900" d="M1470 160h10v10h-10z"/>
<path fill="#219900" d="M1480 160h10v10h-10z"/>
<path fill="#299800" d="M1490 160h10v10h-10z"/>
<path fill="#008f1f" d="M1150 170h10v10h-10z"/>
<path fill="#00901e" d="M1160 170h10v10h-10z"/>
<path fill="#00901d" d="M1170 170h10v10h-10z"/>
<path fill="#00911c" d="M1180 170h10v10h-10z"/>
<path fill="#00911b" d="M1190 170h10v10h-10z"/>
<path fill="#00911a" d="M1200 170h10v10h-10z"/>
<path fill="#009219" d="M1210 170h10v10h-10z"/>
<path fill="#009218" d="M1220 170h10v10h-10z"/>
<path fill="#009216" d="M1230 170h10v10h-10z"/>
<path fill="#009315" d="M1240 170h10v10h-10z"/>
<path fill="#009314" d="M1250 170h10v10h-10z"/>
<path fill="#009413" d="M1260 170h10v10h-10z"/>
<path fill="#009411" d="M1270 170h10v10h-10z"/>
<path fill="#009410" d="M1280 170h10v10h-10z"/>
<path fill="#00950f" d="M1290 170h10v10h-10z"/>
<path fill="#00950d" d="M1300 170h10v10h-10z"/>
<path fill="#00960c" d="M1310 170h10v10h-10z"/>
<path fill="#00960a" d="M1320 170h10v10h-10z"/>
<path fill="#009609" d="M1330 170h10v10h-10z"/>
<path fill="#009707" d="M1340 170h10v10h-10z"/>
<path fill="#009706" d="M1350 170h10v10h-10z"/>
<path fill="#009804" d="M1360 170h10v10h-10z"/>
<path fill="#009802" d="M1370 170h10v10h-10z"/>
<path fill="#009800" d="M1380 170h10v10h-10z"/>
<path fill="#009900" d="M1390 170h20v10h-20z"/>
<path fill="#009a00" d="M1410 170h30v10h-30z"/>
<path fill="#069b00" d="M1440 170h10v10h-10z"/>
<path fill="#0e9b00" d="M1450 170h10v10h-10z"/>
<path fill="#159c00" d="M1460 170h10v10h-10z"/>
<path fill="#1d9c00" d="M1470 170h10v10h-10z"/>
<path fill="#269b00" d="M1480 170h10v10h-10z"/>
<path fill="#2e9b00" d="M1490 170h10v10h-10z"/>
<path fill="#369b00" d="M1500 170h10v10h-10z"/>
<path fill="#009223" d="M1150 180h10v10h-10z"/>
<path fill="#009322" d="M1160 180h10v10h-10z"/>
<path fill="#009321" d="M1170 180h10v10h-10z"/>
<path fill="#009320" d="M1180 180h10v10h-10z"/>
<path fill="#00941f" d="M1190 180h10v10h-10z"/>
<path fill="#00941e" d="M1200 180h10v10h-10z"/>
<path fill="#00941c" d="M1210 180h10v10h-10z"/>
<path fill="#00951b" d="M1220 180h10v10h-10z"/>
<path fill="#00951a" d="M1230 180h10v10h-10z"/>
<path fill="#009619" d="M1240 180h10v10h-10z"/>
<path fill="#009618" d="M1250 180h10v10h-10z"/>
<path fill="#009616" d="M1260 180h10v10h-10z"/>
<path fill="#009715" d="M1270 180h10v10h-10z"/>
<path fill="#009714" d="M1280 180h10v10h-10z"/>
<path fill="#009812" d="M1290 180h10v10h-10z"/>
<path fill="#009811" d="M1300 180h10v10h-10z"/>
<path fill="#00980f" d="M1310 180h10v10h-10z"/>
<path fill="#00990e" d="M1320 180h10v10h-10z"/>
<path fill="#00990c" d="M1330 180h10v10h-10z"/>
<path fill="#009a0b" d="M1340 180h10v10h-10z"/>
<path fill="#009a09" d="M1350 180h10v10h-10z"/>
<path fill="#009a07" d="M1360 180h10v10h-10z"/>
<path fill="#009b06" d="M1370 180h10v10h-10z"/>
<path fill="#009b04" d="M1380 180h10v10h-10z"/>
<path fill="#009c02" d="M1390 180h10v10h-10z"/>
<path fill="#009c00" d="M1400 180h20v10h-20z"/>
<path fill="#009d00" d="M1420 180h10v10h-10z"/>
<path fill="#029d00" d="M1430 180h10v10h-10z"/>
<path fill="#099d00" d="M1440 180h10v10h-10z"/>
<path fill="#119d00" d="M1450 180h10v10h-10z"/>
<path fill="#1a9d00" d="M1460 180h10v10h-10z"/>
<path fill="#229d00" d="M1470 180h10v10h-10z"/>
<path fill="#2a9c00" d="M1480 180h10v10h-10z"/>
<path fill="#339b00" d="M1490 180h10v10h-10z"/>
<path fill="#3c9b00" d="M1500 180h10v10h-10z"/>
<path fill="#459a00" d="M1510 180h10v10h-10z"/>
<path fill="#009527" d="M1150 190h10v10h-10z"/>
<path fill="#009526" d="M1160 190h10v10h-10z"/>
<path fill="#009625" d="M1170 190h10v10h-10z"/>
<path fill="#009624" d="M1180 190h10v10h-10z"/>
<path fill="#009623" d="M1190 190h10v10h-10z"/>
<path fill="#009722" d="M1200 190h10v10h-10z"/>
<path fill="#009721" d="M1210 190h10v10h-10z"/>
<path fill="#00981f" d="M1220 190h10v10h-10z"/>
<path fill="#00981e" d="M1230 190h10v10h-10z"/>
<path fill="#00981d" d="M1240 190h10v10h-10z"/>
<path fill="#00991c" d="M1250 190h10v10h-10z"/>
<path fill="#00991a" d="M1260 190h10v10h-10z"/>
<path fill="#009a19" d="M1270 190h10v10h-10z"/>
<path fill="#009a18" d="M1280 190h10v10h-10z"/>
<path fill="#009a16" d="M1290 190h10v10h-10z"/>
<path fill="#009b15" d="M1300 190h10v10h-10z"/>
<path fill="#009b13" d="M1310 190h10v10h-10z"/>
<path fill="#009c12" d="M1320 190h10v10h-10z"/>
<path fill="#009c10" d="M1330 190h10v10h-10z"/>
<path fill="#009c0f" d="M1340 190h10v10h-10z"/>
<path fill="#009d0d" d="M1350 190h10v10h-10z"/>
<path fill="#009d0b" d="M1360 190h10v10h-10z"/>
<path fill="#009d09" d="M1370 190h10v10h-10z"/>
<path fill="#009d07" d="M1380 190h10v10h-10z"/>
<path fill="#009d06" d="M1390 190h10v10h-10z"/>
<path fill="#009d04" d="M1400 190h10v10h-10z"/>
<path fill="#009d02" d="M1410 190h10v10h-10z"/>
<path fill="#009d00" d="M1420 190h10v10h-10z"/>
<path fill="#059d00" d="M1430 190h10v10h-10z"/>
<path fill="#0d9d00" d="M1440 190h10v10h-10z"/>
<path fill="#159d00" d="M1450 190h10v10h-10z"/>
<path fill="#1e9d00" d="M1460 190h10v10h-10z"/>
<path fill="#269d00" d="M1470 190h10v10h-10z"/>
<path fill="#2f9c00" d="M1480 190h10v10h-10z"/>
<path fill="#389b00" d="M1490 190h10v10h-10z"/>
<path fill="#419b00" d="M1500 190h10v10h-10z"/>
<path fill="#4b9a00" d="M1510 190h10v10h-10z"/>
<path fill="#549900" d="M1520 190h10v10h-10z"/>
<path fill="#5e9900" d="M1530 190h10v10h-10z"/>
<path fill="#00982b" d="M1150 200h10v10h-10z"/>
<path fill="#00982a" d="M1160 200h10v10h-10z"/>
<path fill="#009829" d="M1170 200h10v10h-10z"/>
<path fill="#009928" d="M1180 200h10v10h-10z"/>
<path fill="#009927" d="M1190 200h10v10h-10z"/>
<path fill="#009a26" d="M1200 200h10v10h-10z"/>
<path fill="#009a25" d="M1210 200h10v10h-10z"/>
<path fill="#009a24" d="M1220 200h10v10h-10z"/>
<path fill="#009b23" d="M1230 200h10v10h-10z"/>
<path fill="#009b21" d="M1240 200h10v10h-10z"/>
<path fill="#009c20" d="M1250 200h10v10h-10z"/>
<path fill="#009c1f" d="M1260 200h10v10h-10z"/>
<path fill="#009c1d" d="M1270 200h10v10h-10z"/>
<path fill="#009d1c" d="M1280 200h10v10h-10z"/>
<path fill="#009d1b" d="M1290 200h10v10h-10z"/>
<path fill="#009d19" d="M1300 200h10v10h-10z"/>
<path fill="#009d17" d="M1310 200h10v10h-10z"/>
<path fill="#009d16" d="M1320 200h10v10h-10z"/>
<path fill="#009d14" d="M1330 200h10v10h-10z"/>
<path fill="#009d13" d="M1340 200h10v10h-10z"/>
<path fill="#009d11" d="M1350 200h10v10h-10z"/>
<path fill="#009d0f" d="M1360 200h10v10h-10z"/>
<path fill="#009d0d" d="M1370 200h10v10h-10z"/>
<path fill="#009d0b" d="M1380 200h10v10h-10z"/>
<path fill="#009d09" d="M1390 200h10v10h-10z"/>
<path fill="#009d07" d="M1400 200h10v10h-10z"/>
<path fill="#009d05" d="M1410 200h10v10h-10z"/>
<path fill="#009d03" d="M1420 200h10v10h-10z"/>
<path fill="#089d01" d="M1430 200h10v10h-10z"/>
<path fill="#119d00" d="M1440 200h10v10h-10z"/>
<path fill="#199d00" d="M1450 200h10v10h-10z"/>
<path fill="#229d00" d="M1460 200h10v10h-10z"/>
<path fill="#2b9d00" d="M1470 200h10v10h-10z"/>
<path fill="#349c00" d="M1480 200h10v10h-10z"/>
<path fill="#3e9b00" d="M1490 200h10v10h-10z"/>
<path fill="#489b00" d="M1500 200h10v10h-10z"/>
<path fill="#519a00" d="M1510 200h10v10h-10z"/>
<path fill="#5b9900" d="M1520 200h10v10h-10z"/>
<path fill="#669900" d="M1530 200h10v10h-10z"/>
<path fill="#709800" d="M1540 200h10v10h-10z"/>
<path fill="#009a30" d="M1150 210h10v10h-10z"/>
<path fill="#009b2f" d="M1160 210h10v10h-10z"/>
<path fill="#009b2e" d="M1170 210h10v10h-10z"/>
<path fill="#009c2d" d="M1180 210h10v10h-10z"/>
<path fill="#009c2c" d="M1190 210h10v10h-10z"/>
<path fill="#009c2b" d="M1200 210h10v10h-10z"/>
<path fill="#009d2a" d="M1210 210h10v10h-10z"/>
<path fill="#009d29" d="M1220 210h10v10h-10z"/>
<path fill="#009d27" d="M1230 210h10v10h-10z"/>
<path fill="#009d26" d="M1240 210h10v10h-10z"/>
<path fill="#009d25" d="M1250 210h10v10h-10z"/>
<path fill="#009d23" d="M1260 210h10v10h-10z"/>
<path fill="#009d22" d="M1270 210h10v10h-10z"/>
<path fill="#009d20" d="M1280 210h10v10h-10z"/>
<path fill="#009d1f" d="M1290 210h10v10h-10z"/>
<path fill="#009d1d" d="M1300 210h10v10h-10z"/>
<path fill="#009d1c" d="M1310 210h10v10h-10z"/>
<path fill="#009d1a" d="M1320 210h10v10h-10z"/>
<path fill="#009d18" d="M1330 210h10v10h-10z"/>
<path fill="#009d17" d="M1340 210h10v10h-10z"/>
<path fill="#009d15" d="M1350 210h10v10h-10z"/>
<path fill="#009d13" d="M1360 210h10v10h-10z"/>
<path fill="#009d11" d="M1370 210h10v10h-10z"/>
<path fill="#009d0f" d="M1380 210h10v10h-10z"/>
<path fill="#009d0e" d="M1390 210h10v10h-10z"/>
<path fill="#009d0c" d="M1400 210h10v10h-10z"/>
<path fill="#009d0a" d="M1410 210h10v10h-10z"/>
<path fill="#039d07" d="M1420 210h10v10h-10z"/>
<path fill="#0c9d05" d="M1430 210h10v10h-10z"/>
<path fill="#159d03" d="M1440 210h10v10h-10z"/>
<path fill="#1e9d01" d="M1450 210h10v10h-10z"/>
<path fill="#279d00" d="M1460 210h10v10h-10z"/>
<path fill="#309d00" d="M1470 210h10v10h-10z"/>
<path fill="#3a9c00" d="M1480 210h10v10h-10z"/>
<path fill="#449b00" d="M1490 210h10v10h-10z"/>
<path fill="#4e9b00" d="M1500 210h10v10h-10z"/>
<path fill="#599a00" d="M1510 210h10v10h-10z"/>
<path fill="#639900" d="M1520 210h10v10h-10z"/>
<path fill="#6e9900" d="M1530 210h10v10h-10z"/>
<path fill="#799800" d="M1540 210h10v10h-10z"/>
<path fill="#859700" d="M1550 210h10v10h-10z"/>
<path fill="#919700" d="M1560 210h10v10h-10z"/>
<path fill="#009d35" d="M1150 220h10v10h-10z"/>
<path fill="#009d34" d="M1160 220h10v10h-10z"/>
<path fill="#009d33" d="M1170 220h10v10h-10z"/>
<path fill="#009d32" d="M1180 220h10v10h-10z"/>
<path fill="#009d31" d="M1190 220h10v10h-10z"/>
<path fill="#009d2f" d="M1200 220h10v10h-10z"/>
<path fill="#009d2e" d="M1210 220h10v10h-10z"/>
<path fill="#009d2d" d="M1220 220h10v10h-10z"/>
<path fill="#009d2c" d="M1230 220h10v10h-10z"/>
<path fill="#009d2a" d="M1240 220h10v10h-10z"/>
<path fill="#009d29" d="M1250 220h10v10h-10z"/>
<path fill="#009d28" d="M1260 220h10v10h-10z"/>
<path fill="#009d26" d="M1270 220h10v10h-10z"/>
<path fill="#009d25" d="M1280 220h10v10h-10z"/>
<path fill="#009d23" d="M1290 220h10v10h-10z"/>
<path fill="#009d22" d="M1300 220h10v10h-10z"/>
<path fill="#009d20" d="M1310 220h10v10h-10z"/>
<path fill="#009d1f" d="M1320 220h10v10h-10z"/>
<path fill="#009d1d" d="M1330 220h10v10h-10z"/>
<path fill="#009d1b" d="M1340 220h10v10h-10z"/>
<path fill="#009d19" d="M1350 220h10v10h-10z"/>
<path fill="#009d18" d="M1360 220h10v10h-10z"/>
<path fill="#009d16" d="M1370 220h10v10h-10z"/>
<path fill="#009d14" d="M1380 220h10v10h-10z"/>
<path fill="#009d12" d="M1390 220h10v10h-10z"/>
<path fill="#009d10" d="M1400 220h10v10h-10z"/>
<path fill="#009d0e" d="M1410 220h10v10h-10z"/>
<path fill="#079d0c" d="M1420 220h10v10h-10z"/>
<path fill="#109d0a" d="M1430 220h10v10h-10z"/>
<path fill="#199d07" d="M1440 220h10v10h-10z"/>
<path fill="#229d05" d="M1450 220h10v10h-10z"/>
<path fill="#2c9d03" d="M1460 220h10v10h-10z"/>
<path fill="#369d00" d="M1470 220h10v10h-10z"/>
<path fill="#409c00" d="M1480 220h10v10h-10z"/>
<path fill="#4b9b00" d="M1490 220h10v10h-10z"/>
<path fill="#559b00" d="M1500 220h10v10h-10z"/>
<path fill="#609a00" d="M1510 220h10v10h-10z"/>
<path fill="#6c9900" d="M1520 220h10v10h-10z"/>
<path fill="#779900" d="M1530 220h10v10h-10z"/>
<path fill="#839800" d="M1540 220h10v10h-10z"/>
<path fill="#8f9700" d="M1550 220h10v10h-10z"/>
<path fill="#979700" d="M1560 220h10v10h-10z"/>
<path fill="#959500" d="M1570 220h10v10h-10z"/>
<path fill="#009d39" d="M1160 230h10v10h-10z"/>
<path fill="#009d37" d="M1170 230h10v10h-10z"/>
<path fill="#009d36" d="M1180 230h10v10h-10z"/>
<path fill="#009d35" d="M1190 230h10v10h-10z"/>
<path fill="#009d34" d="M1200 230h10v10h-10z"/>
<path fill="#009d33" d="M1210 230h10v10h-10z"/>
<path fill="#009d32" d="M1220 230h10v10h-10z"/>
<path fill="#009d30" d="M1230 230h10v10h-10z"/>
<path fill="#009d2f" d="M1240 230h10v10h-10z"/>
<path fill="#009d2e" d="M1250 230h10v10h-10z"/>
<path fill="#009d2c" d="M1260 230h10v10h-10z"/>
<path fill="#009d2b" d="M1270 230h10v10h-10z"/>
<path fill="#009d29" d="M1280 230h10v10h-10z"/>
<path fill="#009d28" d="M1290 230h10v10h-10z"/>
<path fill="#009d26" d="M1300 230h10v10h-10z"/>
<path fill="#009d25" d="M1310 230h10v10h-10z"/>
<path fill="#009d23" d="M1320 230h10v10h-10z"/>
<path fill="#009d22" d="M1330 230h10v10h-10z"/>
<path fill="#009d20" d="M1340 230h10v10h-10z"/>
<path fill="#009d1e" d="M1350 230h10v10h-10z"/>
<path fill="#009d1c" d="M1360 230h10v10h-10z"/>
<path fill="#009d1b" d="M1370 230h10v10h-10z"/>
<path fill="#009d19" d="M1380 230h10v10h-10z"/>
<path fill="#009d17" d="M1390 230h10v10h-10z"/>
<path fill="#009d15" d="M1400 230h10v10h-10z"/>
<path fill="#029d13" d="M1410 230h10v10h-10z"/>
<path fill="#0b9d11" d="M1420 230h10v10h-10z"/>
<path fill="#149d0e" d="M1430 230h10v10h-10z"/>
<path fill="#1e9d0c" d="M1440 230h10v10h-10z"/>
<path fill="#279d0a" d="M1450 230h10v10h-10z"/>
<path fill="#329d07" d="M1460 230h10v10h-10z"/>
<path fill="#3c9d05" d="M1470 230h10v10h-10z"/>
<path fill="#479c02" d="M1480 230h10v10h-10z"/>
<path fill="#529b00" d="M1490 230h10v10h-10z"/>
<path fill="#5d9b00" d="M1500 230h10v10h-10z"/>
<path fill="#699a00" d="M1510 230h10v10h-10z"/>
<path fill="#759900" d="M1520 230h10v10h-10z"/>
<path fill="#819900" d="M1530 230h10v10h-10z"/>
<path fill="#8e9800" d="M1540 230h10v10h-10z"/>
<path fill="#979700" d="M1550 230h20v10h-20z"/>
<path fill="#009d3d" d="M1160 240h10v10h-10z"/>
<path fill="#009d3c" d="M1170 240h10v10h-10z"/>
<path fill="#009d3b" d="M1180 240h10v10h-10z"/>
<path fill="#009d3a" d="M1190 240h10v10h-10z"/>
<path fill="#009d39" d="M1200 240h10v10h-10z"/>
<path fill="#009d38" d="M1210 240h10v10h-10z"/>
<path fill="#009d36" d="M1220 240h10v10h-10z"/>
<path fill="#009d35" d="M1230 240h10v10h-10z"/>
<path fill="#009d34" d="M1240 240h10v10h-10z"/>
<path fill="#009d33" d="M1250 240h10v10h-10z"/>
<path fill="#009d31" d="M1260 240h10v10h-10z"/>
<path fill="#009d30" d="M1270 240h10v10h-10z"/>
<path fill="#009d2e" d="M1280 240h10v10h-10z"/>
<path fill="#009d2d" d="M1290 240h10v10h-10z"/>
<path fill="#009d2b" d="M1300 240h10v10h-10z"/>
<path fill="#009d2a" d="M1310 240h10v10h-10z"/>
<path fill="#009d28" d="M1320 240h10v10h-10z"/>
<path fill="#009d27" d="M1330 240h10v10h-10z"/>
<path fill="#009d25" d="M1340 240h10v10h-10z"/>
<path fill="#009d23" d="M1350 240h10v10h-10z"/>
<path fill="#009d22" d="M1360 240h10v10h-10z"/>
<path fill="#009d20" d="M1370 240h10v10h-10z"/>
<path fill="#009d1e" d="M1380 240h10v10h-10z"/>
<path fill="#009d1c" d="M1390 240h10v10h-10z"/>
<path fill="#009d1a" d="M1400 240h10v10h-10z"/>
<path fill="#059d18" d="M1410 240h10v10h-10z"/>
<path fill="#0f9d16" d="M1420 240h10v10h-10z"/>
<path fill="#189d14" d="M1430 240h10v10h-10z"/>
<path fill="#239d11" d="M1440 240h10v10h-10z"/>
<path fill="#2d9d0f" d="M1450 240h10v10h-10z"/>
<path fill="#389d0c" d="M1460 240h10v10h-10z"/>
<path fill="#439d0a" d="M1470 240h10v10h-10z"/>
<path fill="#4e9c07" d="M1480 240h10v10h-10z"/>
<path fill="#5a9b05" d="M1490 240h10v10h-10z"/>
<path fill="#669b02" d="M1500 240h10v10h-10z"/>
<path fill="#729a00" d="M1510 240h10v10h-10z"/>
<path fill="#7f9900" d="M1520 240h10v10h-10z"/>
<path fill="#8c9900" d="M1530 240h10v10h-10z"/>
<path fill="#989800" d="M1540 240h10v10h-10z"/>
<path fill="#979700" d="M1550 240h10v10h-10z"/>
<path fill="#009d42" d="M1160 250h10v10h-10z"/>
<path fill="#009d41" d="M1170 250h10v10h-10z"/>
<path fill="#009d40" d="M1180 250h10v10h-10z"/>
<path fill="#009d3f" d="M1190 250h10v10h-10z"/>
<path fill="#009d3e" d="M1200 250h10v10h-10z"/>
<path fill="#009d3d" d="M1210 250h10v10h-10z"/>
<path fill="#009d3c" d="M1220 250h10v10h-10z"/>
<path fill="#009d3a" d="M1230 250h10v10h-10z"/>
<path fill="#009d39" d="M1240 250h10v10h-10z"/>
<path fill="#009d38" d="M1250 250h10v10h-10z"/>
<path fill="#009d37" d="M1260 250h10v10h-10z"/>
<path fill="#009d35" d="M1270 250h10v10h-10z"/>
<path fill="#009d34" d="M1280 250h10v10h-10z"/>
<path fill="#009d32" d="M1290 250h10v10h-10z"/>
<path fill="#009d31" d="M1300 250h10v10h-10z"/>
<path fill="#009d2f" d="M1310 250h10v10h-10z"/>
<path fill="#009d2e" d="M1320 250h10v10h-10z"/>
<path fill="#009d2c" d="M1330 250h10v10h-10z"/>
<path fill="#009d2b" d="M1340 250h10v10h-10z"/>
<path fill="#009d29" d="M1350 250h10v10h-10z"/>
<path fill="#009d27" d="M1360 250h10v10h-10z"/>
<path fill="#009d25" d="M1370 250h10v10h-10z"/>
<path fill="#009d23" d="M1380 250h10v10h-10z"/>
<path fill="#009d22" d="M1390 250h10v10h-10z"/>
<path fill="#009d20" d="M1400 250h10v10h-10z"/>
<path fill="#099d1d" d="M1410 250h10v10h-10z"/>
<path fill="#139d1b" d="M1420 250h10v10h-10z"/>
<path fill="#1d9d19" d="M1430 250h10v10h-10z"/>
<path fill="#289d17" d="M1440 250h10v10h-10z"/>
<path fill="#339d14" d="M1450 250h10v10h-10z"/>
<path fill="#3f9d12" d="M1460 250h10v10h-10z"/>
<path fill="#4a9d0f" d="M1470 250h10v10h-10z"/>
<path fill="#569c0d" d="M1480 250h10v10h-10z"/>
<path fill="#639b0a" d="M1490 250h10v10h-10z"/>
<path fill="#6f9b07" d="M1500 250h10v10h-10z"/>
<path fill="#7c9a04" d="M1510 250h10v10h-10z"/>
<path fill="#8a9901" d="M1520 250h10v10h-10z"/>
<path fill="#989900" d="M1530 250h10v10h-10z"/>
<path fill="#989800" d="M1540 250h10v10h-10z"/>
<path fill="#979700" d="M1550 250h10v10h-10z"/>
<path fill="#009d48" d="M1160 260h10v10h-10z"/>
<path fill="#009d47" d="M1170 260h10v10h-10z"/>
<path fill="#009d46" d="M1180 260h10v10h-10z"/>
<path fill="#009d45" d="M1190 260h10v10h-10z"/>
<path fill="#009d44" d="M1200 260h10v10h-10z"/>
<path fill="#009d42" d="M1210 260h10v10h-10z"/>
<path fill="#009d41" d="M1220 260h10v10h-10z"/>
<path fill="#009d40" d="M1230 260h10v10h-10z"/>
<path fill="#009d3f" d="M1240 260h10v10h-10z"/>
<path fill="#009d3e" d="M1250 260h10v10h-10z"/>
<path fill="#009d3c" d="M1260 260h10v10h-10z"/>
<path fill="#009d3b" d="M1270 260h10v10h-10z"/>
<path fill="#009d3a" d="M1280 260h10v10h-10z"/>
<path fill="#009d38" d="M1290 260h10v10h-10z"/>
<path fill="#009d37" d="M1300 260h10v10h-10z"/>
<path fill="#009d35" d="M1310 260h10v10h-10z"/>
<path fill="#009d34" d="M1320 260h10v10h-10z"/>
<path fill="#009d32" d="M1330 260h10v10h-10z"/>
<path fill="#009d31" d="M1340 260h10v10h-10z"/>
<path fill="#009d2f" d="M1350 260h10v10h-10z"/>
<path fill="#009d2d" d="M1360 260h10v10h-10z"/>
<path fill="#009d2b" d="M1370 260h10v10h-10z"/>
<path fill="#009d29" d="M1380 260h10v10h-10z"/>
<path fill="#009d28" d="M1390 260h10v10h-10z"/>
<path fill="#039d26" d="M1400 260h10v10h-10z"/>
<path fill="#0e9d24" d="M1410 260h10v10h-10z"/>
<path fill="#189d21" d="M1420 260h10v10h-10z"/>
<path fill="#239d1f" d="M1430 260h10v10h-10z"/>
<path fill="#2e9d1d" d="M1440 260h10v10h-10z"/>
<path fill="#3a9d1b" d="M1450 260h10v10h-10z"/>
<path fill="#469d18" d="M1460 260h10v10h-10z"/>
<path fill="#529d16" d="M1470 260h10v10h-10z"/>
<path fill="#5f9c13" d="M1480 260h10v10h-10z"/>
<path fill="#6c9b10" d="M1490 260h10v10h-10z"/>
<path fill="#7a9b0d" d="M1500 260h10v10h-10z"/>
<path fill="#889a0a" d="M1510 260h10v10h-10z"/>
<path fill="#969907" d="M1520 260h10v10h-10z"/>
<path fill="#999904" d="M1530 260h10v10h-10z"/>
<path fill="#989801" d="M1540 260h10v10h-10z"/>
<path fill="#009d4e" d="M1160 270h10v10h-10z"/>
<path fill="#009d4d" d="M1170 270h10v10h-10z"/>
<path fill="#009d4c" d="M1180 270h10v10h-10z"/>
<path fill="#009d4b" d="M1190 270h10v10h-10z"/>
<path fill="#009d49" d="M1200 270h10v10h-10z"/>
<path fill="#009d48" d="M1210 270h10v10h-10z"/>
<path fill="#009d47" d="M1220 270h10v10h-10z"/>
<path fill="#009d46" d="M1230 270h10v10h-10z"/>
<path fill="#009d45" d="M1240 270h10v10h-10z"/>
<path fill="#009d44" d="M1250 270h10v10h-10z"/>
<path fill="#009d42" d="M1260 270h10v10h-10z"/>
<path fill="#009d41" d="M1270 270h10v10h-10z"/>
<path fill="#009d40" d="M1280 270h10v10h-10z"/>
<path fill="#009d3e" d="M1290 270h10v10h-10z"/>
<path fill="#009d3d" d="M1300 270h10v10h-10z"/>
<path fill="#009d3c" d="M1310 270h10v10h-10z"/>
<path fill="#009d3a" d="M1320 270h10v10h-10z"/>
<path fill="#009d39" d="M1330 270h10v10h-10z"/>
<path fill="#009d37" d="M1340 270h10v10h-10z"/>
<path fill="#009d35" d="M1350 270h10v10h-10z"/>
<path fill="#009d34" d="M1360 270h10v10h-10z"/>
<path fill="#009d32" d="M1370 270h10v10h-10z"/>
<path fill="#009d30" d="M1380 270h10v10h-10z"/>
<path fill="#009d2e" d="M1390 270h10v10h-10z"/>
<path fill="#089d2c" d="M1400 270h10v10h-10z"/>
<path fill="#129d2a" d="M1410 270h10v10h-10z"/>
<path fill="#1d9d28" d="M1420 270h10v10h-10z"/>
<path fill="#299d26" d="M1430 270h10v10h-10z"/>
<path fill="#359d24" d="M1440 270h10v10h-10z"/>
<path fill="#419d21" d="M1450 270h10v10h-10z"/>
<path fill="#4e9d1f" d="M1460 270h10v10h-10z"/>
<path fill="#5b9d1c" d="M1470 270h10v10h-10z"/>
<path fill="#699c1a" d="M1480 270h10v10h-10z"/>
<path fill="#779b17" d="M1490 270h10v10h-10z"/>
<path fill="#859b14" d="M1500 270h10v10h-10z"/>
<path fill="#949a11" d="M1510 270h10v10h-10z"/>
<path fill="#99990e" d="M1520 270h10v10h-10z"/>
<path fill="#99990a" d="M1530 270h10v10h-10z"/>
<path fill="#009d54" d="M1160 280h10v10h-10z"/>
<path fill="#009d53" d="M1170 280h10v10h-10z"/>
<path fill="#009d52" d="M1180 280h10v10h-10z"/>
<path fill="#009d51" d="M1190 280h10v10h-10z"/>
<path fill="#009d50" d="M1200 280h10v10h-10z"/>
<path fill="#009d4f" d="M1210 280h10v10h-10z"/>
<path fill="#009d4e" d="M1220 280h10v10h-10z"/>
<path fill="#009d4d" d="M1230 280h10v10h-10z"/>
<path fill="#009d4b" d="M1240 280h10v10h-10z"/>
<path fill="#009d4a" d="M1250 280h10v10h-10z"/>
<path fill="#009d49" d="M1260 280h10v10h-10z"/>
<path fill="#009d48" d="M1270 280h10v10h-10z"/>
<path fill="#009d47" d="M1280 280h10v10h-10z"/>
<path fill="#009d45" d="M1290 280h10v10h-10z"/>
<path fill="#009d44" d="M1300 280h10v10h-10z"/>
<path fill="#009d42" d="M1310 280h10v10h-10z"/>
<path fill="#009d41" d="M1320 280h10v10h-10z"/>
<path fill="#009d40" d="M1330 280h10v10h-10z"/>
<path fill="#009d3e" d="M1340 280h10v10h-10z"/>
<path fill="#009d3c" d="M1350 280h10v10h-10z"/>
<path fill="#009d3b" d="M1360 280h10v10h-10z"/>
<path fill="#009d39" d="M1370 280h10v10h-10z"/>
<path fill="#009d37" d="M1380 280h10v10h-10z"/>
<path fill="#019d35" d="M1390 280h10v10h-10z"/>
<path fill="#0c9d34" d="M1400 280h10v10h-10z"/>
<path fill="#189d32" d="M1410 280h10v10h-10z"/>
<path fill="#239d2f" d="M1420 280h10v10h-10z"/>
<path fill="#2f9d2d" d="M1430 280h10v10h-10z"/>
<path fill="#3c9d2b" d="M1440 280h10v10h-10z"/>
<path fill="#499d29" d="M1450 280h10v10h-10z"/>
<path fill="#579d26" d="M1460 280h10v10h-10z"/>
<path fill="#659d24" d="M1470 280h10v10h-10z"/>
<path fill="#749c21" d="M1480 280h10v10h-10z"/>
<path fill="#839b1e" d="M1490 280h10v10h-10z"/>
<path fill="#929b1b" d="M1500 280h10v10h-10z"/>
<path fill="#9a9a18" d="M1510 280h10v10h-10z"/>
<path fill="#999915" d="M1520 280h10v10h-10z"/>
<path fill="#009d59" d="M1170 290h10v10h-10z"/>
<path fill="#009d58" d="M1180 290h20v10h-20z"/>
<path fill="#009d57" d="M1200 290h10v10h-10z"/>
<path fill="#009d56" d="M1210 290h10v10h-10z"/>
<path fill="#009d55" d="M1220 290h10v10h-10z"/>
<path fill="#009d54" d="M1230 290h10v10h-10z"/>
<path fill="#009d52" d="M1240 290h10v10h-10z"/>
<path fill="#009d51" d="M1250 290h10v10h-10z"/>
<path fill="#009d50" d="M1260 290h10v10h-10z"/>
<path fill="#009d4f" d="M1270 290h10v10h-10z"/>
<path fill="#009d4e" d="M1280 290h10v10h-10z"/>
<path fill="#009d4d" d="M1290 290h10v10h-10z"/>
<path fill="#009d4b" d="M1300 290h10v10h-10z"/>
<path fill="#009d4a" d="M1310 290h10v10h-10z"/>
<path fill="#009d49" d="M1320 290h10v10h-10z"/>
<path fill="#009d47" d="M1330 290h10v10h-10z"/>
<path fill="#009d46" d="M1340 290h10v10h-10z"/>
<path fill="#009d44" d="M1350 290h10v10h-10z"/>
<path fill="#009d43" d="M1360 290h10v10h-10z"/>
<path fill="#009d41" d="M1370 290h10v10h-10z"/>
<path fill="#009d3f" d="M1380 290h10v10h-10z"/>
<path fill="#069d3d" d="M1390 290h10v10h-10z"/>
<path fill="#119d3c" d="M1400 290h10v10h-10z"/>
<path fill="#1d9d3a" d="M1410 290h10v10h-10z"/>
<path fill="#2a9d38" d="M1420 290h10v10h-10z"/>
<path fill="#379d36" d="M1430 290h10v10h-10z"/>
<path fill="#449d33" d="M1440 290h10v10h-10z"/>
<path fill="#529d31" d="M1450 290h10v10h-10z"/>
<path fill="#619d2f" d="M1460 290h10v10h-10z"/>
<path fill="#709d2c" d="M1470 290h10v10h-10z"/>
<path fill="#809c29" d="M1480 290h10v10h-10z"/>
<path fill="#909b27" d="M1490 290h10v10h-10z"/>
<path fill="#9b9b24" d="M1500 290h10v10h-10z"/>
<path fill="#9a9a20" d="M1510 290h10v10h-10z"/>
<path fill="#009d60" d="M1170 300h20v10h-20z"/>
<path fill="#009d5f" d="M1190 300h10v10h-10z"/>
<path fill="#009d5e" d="M1200 300h10v10h-10z"/>
<path fill="#009d5d" d="M1210 300h10v10h-10z"/>
<path fill="#009d5c" d="M1220 300h10v10h-10z"/>
<path fill="#009d5b" d="M1230 300h10v10h-10z"/>
<path fill="#009d5a" d="M1240 300h10v10h-10z"/>
<path fill="#009d59" d="M1250 300h10v10h-10z"/>
<path fill="#009d58" d="M1260 300h10v10h-10z"/>
<path fill="#009d57" d="M1270 300h10v10h-10z"/>
<path fill="#009d56" d="M1280 300h10v10h-10z"/>
<path fill="#009d55" d="M1290 300h10v10h-10z"/>
<path fill="#009d53" d="M1300 300h10v10h-10z"/>
<path fill="#009d52" d="M1310 300h10v10h-10z"/>
<path fill="#009d51" d="M1320 300h10v10h-10z"/>
<path fill="#009d4f" d="M1330 300h10v10h-10z"/>
<path fill="#009d4e" d="M1340 300h10v10h-10z"/>
<path fill="#009d4d" d="M1350 300h10v10h-10z"/>
<path fill="#009d4b" d="M1360 300h10v10h-10z"/>
<path fill="#009d49" d="M1370 300h10v10h-10z"/>
<path fill="#009d48" d="M1380 300h10v10h-10z"/>
<path fill="#0b9d46" d="M1390 300h10v10h-10z"/>
<path fill="#179d44" d="M1400 300h10v10h-10z"/>
<path fill="#249d43" d="M1410 300h10v10h-10z"/>
<path fill="#319d41" d="M1420 300h10v10h-10z"/>
<path fill="#3f9d3f" d="M1430 300h10v10h-10z"/>
<path fill="#4d9d3d" d="M1440 300h10v10h-10z"/>
<path fill="#5c9d3a" d="M1450 300h10v10h-10z"/>
<path fill="#6c9d38" d="M1460 300h10v10h-10z"/>
<path fill="#7d9d36" d="M1470 300h10v10h-10z"/>
<path fill="#8e9c33" d="M1480 300h10v10h-10z"/>
<path fill="#9b9b30" d="M1490 300h10v10h-10z"/>
<path fill="#9b9b2d" d="M1500 300h10v10h-10z"/>
<path fill="#009d68" d="M1170 310h10v10h-10z"/>
<path fill="#009d67" d="M1180 310h10v10h-10z"/>
<path fill="#009d66" d="M1190 310h20v10h-20z"/>
<path fill="#009d65" d="M1210 310h10v10h-10z"/>
<path fill="#009d64" d="M1220 310h10v10h-10z"/>
<path fill="#009d63" d="M1230 310h10v10h-10z"/>
<path fill="#009d62" d="M1240 310h10v10h-10z"/>
<path fill="#009d61" d="M1250 310h10v10h-10z"/>
<path fill="#009d60" d="M1260 310h10v10h-10z"/>
<path fill="#009d5f" d="M1270 310h10v10h-10z"/>
<path fill="#009d5e" d="M1280 310h10v10h-10z"/>
<path fill="#009d5d" d="M1290 310h10v10h-10z"/>
<path fill="#009d5c" d="M1300 310h10v10h-10z"/>
<path fill="#009d5b" d="M1310 310h10v10h-10z"/>
<path fill="#009d5a" d="M1320 310h10v10h-10z"/>
<path fill="#009d58" d="M1330 310h10v10h-10z"/>
<path fill="#009d57" d="M1340 310h10v10h-10z"/>
<path fill="#009d56" d="M1350 310h10v10h-10z"/>
<path fill="#009d54" d="M1360 310h10v10h-10z"/>
<path fill="#009d53" d="M1370 310h10v10h-10z"/>
<path fill="#049d51" d="M1380 310h10v10h-10z"/>
<path fill="#109d50" d="M1390 310h10v10h-10z"/>
<path fill="#1d9d4e" d="M1400 310h10v10h-10z"/>
<path fill="#2b9d4c" d="M1410 310h10v10h-10z"/>
<path fill="#399d4b" d="M1420 310h10v10h-10z"/>
<path fill="#489d49" d="M1430 310h10v10h-10z"/>
<path fill="#579d47" d="M1440 310h10v10h-10z"/>
<path fill="#689d45" d="M1450 310h10v10h-10z"/>
<path fill="#799d43" d="M1460 310h10v10h-10z"/>
<path fill="#8b9d40" d="M1470 310h10v10h-10z"/>
<path fill="#9c9c3e" d="M1480 310h10v10h-10z"/>
<path fill="#9b9b3b" d="M1490 310h10v10h-10z"/>
<path fill="#009d70" d="M1170 320h20v10h-20z"/>
<path fill="#009d6f" d="M1190 320h10v10h-10z"/>
<path fill="#009d6e" d="M1200 320h10v10h-10z"/>
<path fill="#009d6d" d="M1210 320h20v10h-20z"/>
<path fill="#009d6c" d="M1230 320h10v10h-10z"/>
<path fill="#009d6b" d="M1240 320h10v10h-10z"/>
<path fill="#009d6a" d="M1250 320h10v10h-10z"/>
<path fill="#009d69" d="M1260 320h20v10h-20z"/>
<path fill="#009d68" d="M1280 320h10v10h-10z"/>
<path fill="#009d67" d="M1290 320h10v10h-10z"/>
<path fill="#009d66" d="M1300 320h10v10h-10z"/>
<path fill="#009d65" d="M1310 320h10v10h-10z"/>
<path fill="#009d64" d="M1320 320h10v10h-10z"/>
<path fill="#009d62" d="M1330 320h10v10h-10z"/>
<path fill="#009d61" d="M1340 320h10v10h-10z"/>
<path fill="#009d60" d="M1350 320h10v10h-10z"/>
<path fill="#009d5f" d="M1360 320h10v10h-10z"/>
<path fill="#009d5d" d="M1370 320h10v10h-10z"/>
<path fill="#099d5c" d="M1380 320h10v10h-10z"/>
<path fill="#169d5b" d="M1390 320h10v10h-10z"/>
<path fill="#249d59" d="M1400 320h10v10h-10z"/>
<path fill="#339d58" d="M1410 320h10v10h-10z"/>
<path fill="#429d56" d="M1420 320h10v10h-10z"/>
<path fill="#529d54" d="M1430 320h10v10h-10z"/>
<path fill="#639d52" d="M1440 320h10v10h-10z"/>
<path fill="#759d51" d="M1450 320h10v10h-10z"/>
<path fill="#879d4f" d="M1460 320h10v10h-10z"/>
<path fill="#9b9d4c" d="M1470 320h10v10h-10z"/>
<path fill="#9c9c4a" d="M1480 320h10v10h-10z"/>
<path fill="#9b9b47" d="M1490 320h10v10h-10z"/>
<path fill="#009d79" d="M1170 330h10v10h-10z"/>
<path fill="#009d78" d="M1180 330h20v10h-20z"/>
<path fill="#009d77" d="M1200 330h20v10h-20z"/>
<path fill="#009d76" d="M1220 330h10v10h-10z"/>
<path fill="#009d75" d="M1230 330h20v10h-20z"/>
<path fill="#009d74" d="M1250 330h10v10h-10z"/>
<path fill="#009d73" d="M1260 330h20v10h-20z"/>
<path fill="#009d72" d="M1280 330h10v10h-10z"/>
<path fill="#009d71" d="M1290 330h10v10h-10z"/>
<path fill="#009d70" d="M1300 330h10v10h-10z"/>
<path fill="#009d6f" d="M1310 330h10v10h-10z"/>
<path fill="#009d6e" d="M1320 330h10v10h-10z"/>
<path fill="#009d6d" d="M1330 330h10v10h-10z"/>
<path fill="#009d6c" d="M1340 330h10v10h-10z"/>
<path fill="#009d6b" d="M1350 330h10v10h-10z"/>
<path fill="#009d6a" d="M1360 330h10v10h-10z"/>
<path fill="#019d69" d="M1370 330h10v10h-10z"/>
<path fill="#0f9d68" d="M1380 330h10v10h-10z"/>
<path fill="#1d9d67" d="M1390 330h10v10h-10z"/>
<path fill="#2c9d66" d="M1400 330h10v10h-10z"/>
<path fill="#3c9d64" d="M1410 330h10v10h-10z"/>
<path fill="#4c9d63" d="M1420 330h10v10h-10z"/>
<path fill="#5e9d61" d="M1430 330h10v10h-10z"/>
<path fill="#709d60" d="M1440 330h10v10h-10z"/>
<path fill="#839d5e" d="M1450 330h10v10h-10z"/>
<path fill="#989d5c" d="M1460 330h10v10h-10z"/>
<path fill="#9d9d5a" d="M1470 330h10v10h-10z"/>
<path fill="#9c9c58" d="M1480 330h10v10h-10z"/>
<path fill="#009d82" d="M1180 340h20v10h-20z"/>
<path fill="#009d81" d="M1200 340h20v10h-20z"/>
<path fill="#009d80" d="M1220 340h20v10h-20z"/>
<path fill="#009d7f" d="M1240 340h20v10h-20z"/>
<path fill="#009d7e" d="M1260 340h20v10h-20z"/>
<path fill="#009d7d" d="M1280 340h20v10h-20z"/>
<path fill="#009d7c" d="M1300 340h10v10h-10z"/>
<path fill="#009d7b" d="M1310 340h20v10h-20z"/>
<path fill="#009d7a" d="M1330 340h10v10h-10z"/>
<path fill="#009d79" d="M1340 340h10v10h-10z"/>
<path fill="#009d78" d="M1350 340h10v10h-10z"/>
<path fill="#009d77" d="M1360 340h10v10h-10z"/>
<path fill="#079d77" d="M1370 340h10v10h-10z"/>
<path fill="#159d76" d="M1380 340h10v10h-10z"/>
<path fill="#259d75" d="M1390 340h10v10h-10z"/>
<path fill="#359d74" d="M1400 340h10v10h-10z"/>
<path fill="#469d73" d="M1410 340h10v10h-10z"/>
<path fill="#589d71" d="M1420 340h10v10h-10z"/>
<path fill="#6b9d70" d="M1430 340h10v10h-10z"/>
<path fill="#7f9d6f" d="M1440 340h10v10h-10z"/>
<path fill="#949d6e" d="M1450 340h10v10h-10z"/>
<path fill="#9d9d6c" d="M1460 340h10v10h-10z"/>
<path fill="#9d9d6a" d="M1470 340h10v10h-10z"/>
<path fill="#009d8d" d="M1180 350h20v10h-20z"/>
<path fill="#009d8c" d="M1200 350h30v10h-30z"/>
<path fill="#009d8b" d="M1230 350h30v10h-30z"/>
<path fill="#009d8a" d="M1260 350h30v10h-30z"/>
<path fill="#009d89" d="M1290 350h20v10h-20z"/>
<path fill="#009d88" d="M1310 350h30v10h-30z"/>
<path fill="#009d87" d="M1340 350h20v10h-20z"/>
<path fill="#009d86" d="M1360 350h10v10h-10z"/>
<path fill="#0d9d86" d="M1370 350h10v10h-10z"/>
<path fill="#1d9d85" d="M1380 350h10v10h-10z"/>
<path fill="#2d9d84" d="M1390 350h10v10h-10z"/>
<path fill="#3f9d84" d="M1400 350h10v10h-10z"/>
<path fill="#529d83" d="M1410 350h10v10h-10z"/>
<path fill="#659d82" d="M1420 350h10v10h-10z"/>
<path fill="#7a9d81" d="M1430 350h10v10h-10z"/>
<path fill="#909d81" d="M1440 350h10v10h-10z"/>
<path fill="#9d9d80" d="M1450 350h10v10h-10z"/>
<path fill="#9d9d7f" d="M1460 350h10v10h-10z"/>
<path fill="#009d98" d="M1180 360h120v10h-120z"/>
<path fill="#009d97" d="M1300 360h60v10h-60z"/>
<path fill="#049d97" d="M1360 360h10v10h-10z"/>
<path fill="#149d97" d="M1370 360h10v10h-10z"/>
<path fill="#259d96" d="M1380 360h10v10h-10z"/>
<path fill="#389d96" d="M1390 360h10v10h-10z"/>
<path fill="#4b9d96" d="M1400 360h10v10h-10z"/>
<path fill="#5f9d96" d="M1410 360h10v10h-10z"/>
<path fill="#759d96" d="M1420 360h10v10h-10z"/>
<path fill="#8c9d96" d="M1430 360h10v10h-10z"/>
<path fill="#9d9d95" d="M1440 360h20v10h-20z"/>
<path fill="#009d9d" d="M1190 370h170v10h-170z"/>
<path fill="#0b9d9d" d="M1360 370h10v10h-10z"/>
<path fill="#1d9d9d" d="M1370 370h10v10h-10z"/>
<path fill="#2f9d9d" d="M1380 370h10v10h-10z"/>
<path fill="#439d9d" d="M1390 370h10v10h-10z"/>
<path fill="#599d9d" d="M1400 370h10v10h-10z"/>
<path fill="#6f9d9d" d="M1410 370h10v10h-10z"/>
<path fill="#879d9d" d="M1420 370h10v10h-10z"/>
<path fill="#9d9d9d" d="M1430 370h20v10h-20z"/>
</g></g>
<g clip-path="url(#sec2)"><g filter="url(#blo)">
<path fill="#009d9d" d="M1180 350h190v10h-190z"/>
<path fill="#0f9d9d" d="M1370 350h10v10h-10z"/>
<path fill="#229d9d" d="M1380 350h10v10h-10z"/>
<path fill="#369d9d" d="M1390 350h10v10h-10z"/>
<path fill="#4b9d9d" d="M1400 350h10v10h-10z"/>
<path fill="#629d9d" d="M1410 350h10v10h-10z"/>
<path fill="#7a9d9d" d="M1420 350h10v10h-10z"/>
<path fill="#949d9d" d="M1430 350h10v10h-10z"/>
<path fill="#9d9d9d" d="M1440 350h10v10h-10z"/>
<path fill="#009d9d" d="M1180 360h180v10h-180z"/>
<path fill="#049d9d" d="M1360 360h10v10h-10z"/>
<path fill="#159d9d" d="M1370 360h10v10h-10z"/>
<path fill="#279d9d" d="M1380 360h10v10h-10z"/>
<path fill="#3a9d9d" d="M1390 360h10v10h-10z"/>
<path fill="#4e9d9d" d="M1400 360h10v10h-10z"/>
<path fill="#649d9d" d="M1410 360h10v10h-10z"/>
<path fill="#7b9d9d" d="M1420 360h10v10h-10z"/>
<path fill="#939d9d" d="M1430 360h10v10h-10z"/>
<path fill="#9d9d9d" d="M1440 360h10v10h-10z"/>
<path fill="#00959d" d="M1190 370h40v10h-40z"/>
<path fill="#00949d" d="M1230 370h50v10h-50z"/>
<path fill="#00939d" d="M1280 370h40v10h-40z"/>
<path fill="#00929d" d="M1320 370h30v10h-30z"/>
<path fill="#00919d" d="M1350 370h10v10h-10z"/>
<path fill="#0a919d" d="M1360 370h10v10h-10z"/>
<path fill="#1a919d" d="M1370 370h10v10h-10z"/>
<path fill="#2c909d" d="M1380 370h10v10h-10z"/>
<path fill="#3e909d" d="M1390 370h10v10h-10z"/>
<path fill="#518f9d" d="M1400 370h10v10h-10z"/>
<path fill="#658f9d" d="M1410 370h10v10h-10z"/>
<path fill="#7b8f9d" d="M1420 370h10v10h-10z"/>
<path fill="#928e9d" d="M1430 370h10v10h-10z"/>
<path fill="#9d8d9d" d="M1440 370h20v10h-20z"/>
<path fill="#00899d" d="M1190 380h30v10h-30z"/>
<path fill="#00889d" d="M1220 380h20v10h-20z"/>
<path fill="#00879d" d="M1240 380h20v10h-20z"/>
<path fill="#00869d" d="M1260 380h20v10h-20z"/>
<path fill="#00859d" d="M1280 380h20v10h-20z"/>
<path fill="#00849d" d="M1300 380h20v10h-20z"/>
<path fill="#00839d" d="M1320 380h10v10h-10z"/>
<path fill="#00829d" d="M1330 380h20v10h-20z"/>
<path fill="#01819d" d="M1350 380h10v10h-10z"/>
<path fill="#10809d" d="M1360 380h10v10h-10z"/>
<path fill="#1f7f9d" d="M1370 380h10v10h-10z"/>
<path fill="#307f9d" d="M1380 380h10v10h-10z"/>
<path fill="#417e9d" d="M1390 380h10v10h-10z"/>
<path fill="#537d9d" d="M1400 380h10v10h-10z"/>
<path fill="#677c9d" d="M1410 380h10v10h-10z"/>
<path fill="#7b7b9d" d="M1420 380h10v10h-10z"/>
<path fill="#917a9d" d="M1430 380h10v10h-10z"/>
<path fill="#9d799d" d="M1440 380h10v10h-10z"/>
<path fill="#9d779d" d="M1450 380h10v10h-10z"/>
<path fill="#007e9d" d="M1200 390h10v10h-10z"/>
<path fill="#007d9d" d="M1210 390h10v10h-10z"/>
<path fill="#007c9d" d="M1220 390h20v10h-20z"/>
<path fill="#007b9d" d="M1240 390h10v10h-10z"/>
<path fill="#007a9d" d="M1250 390h20v10h-20z"/>
<path fill="#00799d" d="M1270 390h10v10h-10z"/>
<path fill="#00789d" d="M1280 390h20v10h-20z"/>
<path fill="#00779d" d="M1300 390h10v10h-10z"/>
<path fill="#00769d" d="M1310 390h10v10h-10z"/>
<path fill="#00759d" d="M1320 390h10v10h-10z"/>
<path fill="#00749d" d="M1330 390h10v10h-10z"/>
<path fill="#00739d" d="M1340 390h10v10h-10z"/>
<path fill="#06729d" d="M1350 390h10v10h-10z"/>
<path fill="#14719d" d="M1360 390h10v10h-10z"/>
<path fill="#23709d" d="M1370 390h10v10h-10z"/>
<path fill="#336f9d" d="M1380 390h10v10h-10z"/>
<path fill="#446d9d" d="M1390 390h10v10h-10z"/>
<path fill="#566c9d" d="M1400 390h10v10h-10z"/>
<path fill="#686b9d" d="M1410 390h10v10h-10z"/>
<path fill="#7c699d" d="M1420 390h10v10h-10z"/>
<path fill="#90689d" d="M1430 390h10v10h-10z"/>
<path fill="#9d669d" d="M1440 390h10v10h-10z"/>
<path fill="#9d649d" d="M1450 390h10v10h-10z"/>
<path fill="#00739d" d="M1200 400h10v10h-10z"/>
<path fill="#00729d" d="M1210 400h10v10h-10z"/>
<path fill="#00719d" d="M1220 400h20v10h-20z"/>
<path fill="#00709d" d="M1240 400h10v10h-10z"/>
<path fill="#006f9d" d="M1250 400h10v10h-10z"/>
<path fill="#006e9d" d="M1260 400h10v10h-10z"/>
<path fill="#006d9d" d="M1270 400h10v10h-10z"/>
<path fill="#006c9d" d="M1280 400h10v10h-10z"/>
<path fill="#006b9d" d="M1290 400h10v10h-10z"/>
<path fill="#006a9d" d="M1300 400h10v10h-10z"/>
<path fill="#00699d" d="M1310 400h10v10h-10z"/>
<path fill="#00689d" d="M1320 400h10v10h-10z"/>
<path fill="#00679d" d="M1330 400h10v10h-10z"/>
<path fill="#00659d" d="M1340 400h10v10h-10z"/>
<path fill="#0b649d" d="M1350 400h10v10h-10z"/>
<path fill="#19639d" d="M1360 400h10v10h-10z"/>
<path fill="#27619d" d="M1370 400h10v10h-10z"/>
<path fill="#37609d" d="M1380 400h10v10h-10z"/>
<path fill="#475e9d" d="M1390 400h10v10h-10z"/>
<path fill="#585d9d" d="M1400 400h10v10h-10z"/>
<path fill="#695b9d" d="M1410 400h10v10h-10z"/>
<path fill="#7c599d" d="M1420 400h10v10h-10z"/>
<path fill="#90579d" d="M1430 400h10v10h-10z"/>
<path fill="#9d559d" d="M1440 400h10v10h-10z"/>
<path fill="#9d539d" d="M1450 400h10v10h-10z"/>
<path fill="#00699d" d="M1200 410h10v10h-10z"/>
<path fill="#00689d" d="M1210 410h10v10h-10z"/>
<path fill="#00679d" d="M1220 410h10v10h-10z"/>
<path fill="#00669d" d="M1230 410h10v10h-10z"/>
<path fill="#00659d" d="M1240 410h10v10h-10z"/>
<path fill="#00649d" d="M1250 410h10v10h-10z"/>
<path fill="#00639d" d="M1260 410h10v10h-10z"/>
<path fill="#00629d" d="M1270 410h10v10h-10z"/>
<path fill="#00619d" d="M1280 410h10v10h-10z"/>
<path fill="#00609d" d="M1290 410h10v10h-10z"/>
<path fill="#005e9d" d="M1300 410h10v10h-10z"/>
<path fill="#005d9d" d="M1310 410h10v10h-10z"/>
<path fill="#005c9d" d="M1320 410h10v10h-10z"/>
<path fill="#005a9d" d="M1330 410h10v10h-10z"/>
<path fill="#03599d" d="M1340 410h10v10h-10z"/>
<path fill="#10579d" d="M1350 410h10v10h-10z"/>
<path fill="#1d569d" d="M1360 410h10v10h-10z"/>
<path fill="#2b549d" d="M1370 410h10v10h-10z"/>
<path fill="#3a529d" d="M1380 410h10v10h-10z"/>
<path fill="#49519d" d="M1390 410h10v10h-10z"/>
<path fill="#594f9d" d="M1400 410h10v10h-10z"/>
<path fill="#6a4d9d" d="M1410 410h10v10h-10z"/>
<path fill="#7c4b9d" d="M1420 410h10v10h-10z"/>
<path fill="#8f489d" d="M1430 410h10v10h-10z"/>
<path fill="#9d469d" d="M1440 410h10v10h-10z"/>
<path fill="#9d449d" d="M1450 410h10v10h-10z"/>
<path fill="#005e9d" d="M1210 420h10v10h-10z"/>
<path fill="#005d9d" d="M1220 420h10v10h-10z"/>
<path fill="#005c9d" d="M1230 420h10v10h-10z"/>
<path fill="#005b9d" d="M1240 420h10v10h-10z"/>
<path fill="#005a9d" d="M1250 420h10v10h-10z"/>
<path fill="#00599d" d="M1260 420h10v10h-10z"/>
<path fill="#00589d" d="M1270 420h10v10h-10z"/>
<path fill="#00569d" d="M1280 420h10v10h-10z"/>
<path fill="#00559d" d="M1290 420h10v10h-10z"/>
<path fill="#00549d" d="M1300 420h10v10h-10z"/>
<path fill="#00529d" d="M1310 420h10v10h-10z"/>
<path fill="#00519d" d="M1320 420h10v10h-10z"/>
<path fill="#004f9d" d="M1330 420h10v10h-10z"/>
<path fill="#074d9d" d="M1340 420h10v10h-10z"/>
<path fill="#144c9d" d="M1350 420h10v10h-10z"/>
<path fill="#214a9d" d="M1360 420h10v10h-10z"/>
<path fill="#2e489d" d="M1370 420h10v10h-10z"/>
<path fill="#3d469d" d="M1380 420h10v10h-10z"/>
<path fill="#4b449d" d="M1390 420h10v10h-10z"/>
<path fill="#5b429d" d="M1400 420h10v10h-10z"/>
<path fill="#6b409d" d="M1410 420h10v10h-10z"/>
<path fill="#7c3d9d" d="M1420 420h10v10h-10z"/>
<path fill="#8e3b9d" d="M1430 420h10v10h-10z"/>
<path fill="#9d389d" d="M1440 420h10v10h-10z"/>
<path fill="#9d369d" d="M1450 420h10v10h-10z"/>
<path fill="#00559d" d="M1210 430h10v10h-10z"/>
<path fill="#00549d" d="M1220 430h10v10h-10z"/>
<path fill="#00539d" d="M1230 430h10v10h-10z"/>
<path fill="#00529d" d="M1240 430h10v10h-10z"/>
<path fill="#00519d" d="M1250 430h10v10h-10z"/>
<path fill="#004f9d" d="M1260 430h10v10h-10z"/>
<path fill="#004e9d" d="M1270 430h10v10h-10z"/>
<path fill="#004c9d" d="M1280 430h10v10h-10z"/>
<path fill="#004b9d" d="M1290 430h10v10h-10z"/>
<path fill="#00499d" d="M1300 430h10v10h-10z"/>
<path fill="#00489d" d="M1310 430h10v10h-10z"/>
<path fill="#00469d" d="M1320 430h10v10h-10z"/>
<path fill="#00449d" d="M1330 430h10v10h-10z"/>
<path fill="#0c439d" d="M1340 430h10v10h-10z"/>
<path fill="#18419d" d="M1350 430h10v10h-10z"/>
<path fill="#243f9d" d="M1360 430h10v10h-10z"/>
<path fill="#323d9d" d="M1370 430h10v10h-10z"/>
<path fill="#3f3b9d" d="M1380 430h10v10h-10z"/>
<path fill="#4e389d" d="M1390 430h10v10h-10z"/>
<path fill="#5d369d" d="M1400 430h10v10h-10z"/>
<path fill="#6c349d" d="M1410 430h10v10h-10z"/>
<path fill="#7d319d" d="M1420 430h10v10h-10z"/>
<path fill="#8e2f9d" d="M1430 430h10v10h-10z"/>
<path fill="#9d2c9d" d="M1440 430h10v10h-10z"/>
<path fill="#9d299d" d="M1450 430h10v10h-10z"/>
<path fill="#004c9d" d="M1220 440h10v10h-10z"/>
<path fill="#004a9d" d="M1230 440h10v10h-10z"/>
<path fill="#00499d" d="M1240 440h10v10h-10z"/>
<path fill="#00489d" d="M1250 440h10v10h-10z"/>
<path fill="#00469d" d="M1260 440h10v10h-10z"/>
<path fill="#00459d" d="M1270 440h10v10h-10z"/>
<path fill="#00439d" d="M1280 440h10v10h-10z"/>
<path fill="#00419d" d="M1290 440h10v10h-10z"/>
<path fill="#00409d" d="M1300 440h10v10h-10z"/>
<path fill="#003e9d" d="M1310 440h10v10h-10z"/>
<path fill="#003c9d" d="M1320 440h10v10h-10z"/>
<path fill="#043a9d" d="M1330 440h10v10h-10z"/>
<path fill="#10399d" d="M1340 440h10v10h-10z"/>
<path fill="#1b379d" d="M1350 440h10v10h-10z"/>
<path fill="#28349d" d="M1360 440h10v10h-10z"/>
<path fill="#34329d" d="M1370 440h10v10h-10z"/>
<path fill="#42309d" d="M1380 440h10v10h-10z"/>
<path fill="#502e9d" d="M1390 440h10v10h-10z"/>
<path fill="#5e2b9d" d="M1400 440h10v10h-10z"/>
<path fill="#6d299d" d="M1410 440h10v10h-10z"/>
<path fill="#7d269d" d="M1420 440h10v10h-10z"/>
<path fill="#8d239d" d="M1430 440h10v10h-10z"/>
<path fill="#9d209d" d="M1440 440h10v10h-10z"/>
<path fill="#9d1d9d" d="M1450 440h10v10h-10z"/>
<path fill="#00439d" d="M1220 450h10v10h-10z"/>
<path fill="#00429d" d="M1230 450h10v10h-10z"/>
<path fill="#00419d" d="M1240 450h10v10h-10z"/>
<path fill="#003f9d" d="M1250 450h10v10h-10z"/>
<path fill="#003e9d" d="M1260 450h10v10h-10z"/>
<path fill="#003c9d" d="M1270 450h10v10h-10z"/>
<path fill="#003a9d" d="M1280 450h10v10h-10z"/>
<path fill="#00399d" d="M1290 450h10v10h-10z"/>
<path fill="#00379d" d="M1300 450h10v10h-10z"/>
<path fill="#00359d" d="M1310 450h10v10h-10z"/>
<path fill="#00339d" d="M1320 450h10v10h-10z"/>
<path fill="#08319d" d="M1330 450h10v10h-10z"/>
<path fill="#132f9d" d="M1340 450h10v10h-10z"/>
<path fill="#1f2d9d" d="M1350 450h10v10h-10z"/>
<path fill="#2b2b9d" d="M1360 450h10v10h-10z"/>
<path fill="#37299d" d="M1370 450h10v10h-10z"/>
<path fill="#44269d" d="M1380 450h10v10h-10z"/>
<path fill="#51249d" d="M1390 450h10v10h-10z"/>
<path fill="#5f219d" d="M1400 450h10v10h-10z"/>
<path fill="#6e1f9d" d="M1410 450h10v10h-10z"/>
<path fill="#7d1c9d" d="M1420 450h10v10h-10z"/>
<path fill="#8d199d" d="M1430 450h10v10h-10z"/>
<path fill="#9d169d" d="M1440 450h10v10h-10z"/>
<path fill="#9d139d" d="M1450 450h10v10h-10z"/>
<path fill="#003a9d" d="M1230 460h10v10h-10z"/>
<path fill="#00399d" d="M1240 460h10v10h-10z"/>
<path fill="#00379d" d="M1250 460h10v10h-10z"/>
<path fill="#00359d" d="M1260 460h10v10h-10z"/>
<path fill="#00349d" d="M1270 460h10v10h-10z"/>
<path fill="#00329d" d="M1280 460h10v10h-10z"/>
<path fill="#00309d" d="M1290 460h10v10h-10z"/>
<path fill="#002e9d" d="M1300 460h10v10h-10z"/>
<path fill="#002d9d" d="M1310 460h10v10h-10z"/>
<path fill="#022b9d" d="M1320 460h10v10h-10z"/>
<path fill="#0c299d" d="M1330 460h10v10h-10z"/>
<path fill="#17269d" d="M1340 460h10v10h-10z"/>
<path fill="#22249d" d="M1350 460h10v10h-10z"/>
<path fill="#2e229d" d="M1360 460h10v10h-10z"/>
<path fill="#3a209d" d="M1370 460h10v10h-10z"/>
<path fill="#461d9d" d="M1380 460h10v10h-10z"/>
<path fill="#531b9d" d="M1390 460h10v10h-10z"/>
<path fill="#60189d" d="M1400 460h10v10h-10z"/>
<path fill="#6e159d" d="M1410 460h10v10h-10z"/>
<path fill="#7d129d" d="M1420 460h10v10h-10z"/>
<path fill="#8c0f9d" d="M1430 460h10v10h-10z"/>
<path fill="#9c0c9d" d="M1440 460h10v10h-10z"/>
<path fill="#9d099d" d="M1450 460h10v10h-10z"/>
<path fill="#00339d" d="M1230 470h10v10h-10z"/>
<path fill="#00319d" d="M1240 470h10v10h-10z"/>
<path fill="#00309d" d="M1250 470h10v10h-10z"/>
<path fill="#002e9d" d="M1260 470h10v10h-10z"/>
<path fill="#002c9d" d="M1270 470h10v10h-10z"/>
<path fill="#002a9d" d="M1280 470h10v10h-10z"/>
<path fill="#00289d" d="M1290 470h10v10h-10z"/>
<path fill="#00269d" d="M1300 470h10v10h-10z"/>
<path fill="#00259d" d="M1310 470h10v10h-10z"/>
<path fill="#06229d" d="M1320 470h10v10h-10z"/>
<path fill="#10209d" d="M1330 470h10v10h-10z"/>
<path fill="#1a1e9d" d="M1340 470h10v10h-10z"/>
<path fill="#251c9d" d="M1350 470h10v10h-10z"/>
<path fill="#301a9d" d="M1360 470h10v10h-10z"/>
<path fill="#3c179d" d="M1370 470h10v10h-10z"/>
<path fill="#48159d" d="M1380 470h10v10h-10z"/>
<path fill="#55129d" d="M1390 470h10v10h-10z"/>
<path fill="#620f9d" d="M1400 470h10v10h-10z"/>
<path fill="#6f0c9d" d="M1410 470h10v10h-10z"/>
<path fill="#7d099d" d="M1420 470h10v10h-10z"/>
<path fill="#8c069d" d="M1430 470h10v10h-10z"/>
<path fill="#9b039d" d="M1440 470h10v10h-10z"/>
<path fill="#9d009d" d="M1450 470h10v10h-10z"/>
<path fill="#002a9d" d="M1240 480h10v10h-10z"/>
<path fill="#00289d" d="M1250 480h10v10h-10z"/>
<path fill="#00279d" d="M1260 480h10v10h-10z"/>
<path fill="#00259d" d="M1270 480h10v10h-10z"/>
<path fill="#00239d" d="M1280 480h10v10h-10z"/>
<path fill="#00219d" d="M1290 480h10v10h-10z"/>
<path fill="#001f9d" d="M1300 480h10v10h-10z"/>
<path fill="#001d9d" d="M1310 480h10v10h-10z"/>
<path fill="#091b9d" d="M1320 480h10v10h-10z"/>
<path fill="#13199d" d="M1330 480h10v10h-10z"/>
<path fill="#1d169d" d="M1340 480h10v10h-10z"/>
<path fill="#28149d" d="M1350 480h10v10h-10z"/>
<path fill="#33129d" d="M1360 480h10v10h-10z"/>
<path fill="#3e0f9d" d="M1370 480h10v10h-10z"/>
<path fill="#4a0d9d" d="M1380 480h10v10h-10z"/>
<path fill="#560a9d" d="M1390 480h10v10h-10z"/>
<path fill="#63079d" d="M1400 480h10v10h-10z"/>
<path fill="#70049d" d="M1410 480h10v10h-10z"/>
<path fill="#7d019d" d="M1420 480h10v10h-10z"/>
<path fill="#8c009d" d="M1430 480h10v10h-10z"/>
<path fill="#9a009d" d="M1440 480h10v10h-10z"/>
<path fill="#9d009d" d="M1450 480h10v10h-10z"/>
<path fill="#00239d" d="M1240 490h10v10h-10z"/>
<path fill="#00229d" d="M1250 490h10v10h-10z"/>
<path fill="#00209d" d="M1260 490h10v10h-10z"/>
<path fill="#001e9d" d="M1270 490h10v10h-10z"/>
<path fill="#001c9d" d="M1280 490h10v10h-10z"/>
<path fill="#001a9d" d="M1290 490h10v10h-10z"/>
<path fill="#00189d" d="M1300 490h10v10h-10z"/>
<path fill="#03169d" d="M1310 490h10v10h-10z"/>
<path fill="#0d149d" d="M1320 490h10v10h-10z"/>
<path fill="#16119d" d="M1330 490h10v10h-10z"/>
<path fill="#200f9d" d="M1340 490h10v10h-10z"/>
<path fill="#2b0d9d" d="M1350 490h10v10h-10z"/>
<path fill="#350a9d" d="M1360 490h10v10h-10z"/>
<path fill="#40089d" d="M1370 490h10v10h-10z"/>
<path fill="#4c059d" d="M1380 490h10v10h-10z"/>
<path fill="#57029d" d="M1390 490h10v10h-10z"/>
<path fill="#64009d" d="M1400 490h10v10h-10z"/>
<path fill="#70009d" d="M1410 490h10v10h-10z"/>
<path fill="#7e009d" d="M1420 490h10v10h-10z"/>
<path fill="#8b009d" d="M1430 490h10v10h-10z"/>
<path fill="#99009d" d="M1440 490h10v10h-10z"/>
<path fill="#9d009d" d="M1450 490h10v10h-10z"/>
<path fill="#001b9d" d="M1250 500h10v10h-10z"/>
<path fill="#00199d" d="M1260 500h10v10h-10z"/>
<path fill="#00179d" d="M1270 500h10v10h-10z"/>
<path fill="#00159d" d="M1280 500h10v10h-10z"/>
<path fill="#00139d" d="M1290 500h10v10h-10z"/>
<path fill="#00119d" d="M1300 500h10v10h-10z"/>
<path fill="#070f9d" d="M1310 500h10v10h-10z"/>
<path fill="#100d9d" d="M1320 500h10v10h-10z"/>
<path fill="#190b9d" d="M1330 500h10v10h-10z"/>
<path fill="#23089d" d="M1340 500h10v10h-10z"/>
<path fill="#2d069d" d="M1350 500h10v10h-10z"/>
<path fill="#37039d" d="M1360 500h10v10h-10z"/>
<path fill="#42019d" d="M1370 500h10v10h-10z"/>
<path fill="#4d009d" d="M1380 500h10v10h-10z"/>
<path fill="#59009d" d="M1390 500h10v10h-10z"/>
<path fill="#65009d" d="M1400 500h10v10h-10z"/>
<path fill="#71009d" d="M1410 500h10v10h-10z"/>
<path fill="#7e009d" d="M1420 500h10v10h-10z"/>
<path fill="#8b009d" d="M1430 500h10v10h-10z"/>
<path fill="#99009d" d="M1440 500h10v10h-10z"/>
<path fill="#9d009d" d="M1450 500h10v10h-10z"/>
<path fill="#00159d" d="M1250 510h10v10h-10z"/>
<path fill="#00139d" d="M1260 510h10v10h-10z"/>
<path fill="#00119d" d="M1270 510h10v10h-10z"/>
<path fill="#000f9d" d="M1280 510h10v10h-10z"/>
<path fill="#000d9d" d="M1290 510h10v10h-10z"/>
<path fill="#010b9d" d="M1300 510h10v10h-10z"/>
<path fill="#0a099d" d="M1310 510h10v10h-10z"/>
<path fill="#13069d" d="M1320 510h10v10h-10z"/>
<path fill="#1c049d" d="M1330 510h10v10h-10z"/>
<path fill="#26029d" d="M1340 510h10v10h-10z"/>
<path fill="#2f009d" d="M1350 510h10v10h-10z"/>
<path fill="#39009d" d="M1360 510h10v10h-10z"/>
<path fill="#44009d" d="M1370 510h10v10h-10z"/>
<path fill="#4f009d" d="M1380 510h10v10h-10z"/>
<path fill="#5a009d" d="M1390 510h10v10h-10z"/>
<path fill="#65009d" d="M1400 510h10v10h-10z"/>
<path fill="#71009d" d="M1410 510h10v10h-10z"/>
<path fill="#7e009d" d="M1420 510h10v10h-10z"/>
<path fill="#8b009d" d="M1430 510h10v10h-10z"/>
<path fill="#98009d" d="M1440 510h10v10h-10z"/>
<path fill="#9d009d" d="M1450 510h10v10h-10z"/>
<path fill="#000d9d" d="M1260 520h10v10h-10z"/>
<path fill="#000b9d" d="M1270 520h10v10h-10z"/>
<path fill="#00099d" d="M1280 520h10v10h-10z"/>
<path fill="#00079d" d="M1290 520h10v10h-10z"/>
<path fill="#04059d" d="M1300 520h10v10h-10z"/>
<path fill="#0d039d" d="M1310 520h10v10h-10z"/>
<path fill="#16009d" d="M1320 520h10v10h-10z"/>
<path fill="#1f009d" d="M1330 520h10v10h-10z"/>
<path fill="#28009d" d="M1340 520h10v10h-10z"/>
<path fill="#32009d" d="M1350 520h10v10h-10z"/>
<path fill="#3b009d" d="M1360 520h10v10h-10z"/>
<path fill="#46009d" d="M1370 520h10v10h-10z"/>
<path fill="#50009d" d="M1380 520h10v10h-10z"/>
<path fill="#5b009d" d="M1390 520h10v10h-10z"/>
<path fill="#66009d" d="M1400 520h10v10h-10z"/>
<path fill="#72009d" d="M1410 520h10v10h-10z"/>
<path fill="#7e009d" d="M1420 520h10v10h-10z"/>
<path fill="#8a009d" d="M1430 520h10v10h-10z"/>
<path fill="#97009d" d="M1440 520h10v10h-10z"/>
<path fill="#9d009d" d="M1450 520h20v10h-20z"/>
<path fill="#00079d" d="M1260 530h10v10h-10z"/>
<path fill="#00059d" d="M1270 530h10v10h-10z"/>
<path fill="#00039d" d="M1280 530h10v10h-10z"/>
<path fill="#00019d" d="M1290 530h10v10h-10z"/>
<path fill="#07009d" d="M1300 530h10v10h-10z"/>
<path fill="#10009d" d="M1310 530h10v10h-10z"/>
<path fill="#18009d" d="M1320 530h10v10h-10z"/>
<path fill="#21009d" d="M1330 530h10v10h-10z"/>
<path fill="#2a009d" d="M1340 530h10v10h-10z"/>
<path fill="#34009d" d="M1350 530h10v10h-10z"/>
<path fill="#3d009d" d="M1360 530h10v10h-10z"/>
<path fill="#47009d" d="M1370 530h10v10h-10z"/>
<path fill="#52009d" d="M1380 530h10v10h-10z"/>
<path fill="#5c009d" d="M1390 530h10v10h-10z"/>
<path fill="#67009d" d="M1400 530h10v10h-10z"/>
<path fill="#72009d" d="M1410 530h10v10h-10z"/>
<path fill="#7e009d" d="M1420 530h10v10h-10z"/>
<path fill="#8a009d" d="M1430 530h10v10h-10z"/>
<path fill="#96009d" d="M1440 530h10v10h-10z"/>
<path fill="#00009d" d="M1270 540h20v10h-20z"/>
<path fill="#02009d" d="M1290 540h10v10h-10z"/>
<path fill="#0a009d" d="M1300 540h10v10h-10z"/>
<path fill="#13009d" d="M1310 540h10v10h-10z"/>
<path fill="#1b009d" d="M1320 540h10v10h-10z"/>
<path fill="#24009d" d="M1330 540h10v10h-10z"/>
<path fill="#2d009d" d="M1340 540h10v10h-10z"/>
<path fill="#36009d" d="M1350 540h10v10h-10z"/>
<path fill="#3f009d" d="M1360 540h10v10h-10z"/>
<path fill="#49009d" d="M1370 540h10v10h-10z"/>
<path fill="#53009d" d="M1380 540h10v10h-10z"/>
<path fill="#5d009d" d="M1390 540h10v10h-10z"/>
<path fill="#68009d" d="M1400 540h10v10h-10z"/>
<path fill="#73009d" d="M1410 540h10v10h-10z"/>
<path fill="#00009d" d="M1270 550h20v10h-20z"/>
<path fill="#05009d" d="M1290 550h10v10h-10z"/>
<path fill="#0d009d" d="M1300 550h10v10h-10z"/>
<path fill="#15009d" d="M1310 550h10v10h-10z"/>
<path fill="#1d009d" d="M1320 550h10v10h-10z"/>
<path fill="#26009d" d="M1330 550h10v10h-10z"/>
<path fill="#2f009d" d="M1340 550h10v10h-10z"/>
<path fill="#38009d" d="M1350 550h10v10h-10z"/>
<path fill="#41009d" d="M1360 550h10v10h-10z"/>
<path fill="#4a009d" d="M1370 550h10v10h-10z"/>
<path fill="#54009d" d="M1380 550h10v10h-10z"/>
<path fill="#01009d" d="M1280 560h10v10h-10z"/>
<path fill="#08009d" d="M1290 560h10v10h-10z"/>
<path fill="#10009d" d="M1300 560h10v10h-10z"/>
<path fill="#18009d" d="M1310 560h10v10h-10z"/>
<path fill="#20009d" d="M1320 560h10v10h-10z"/>
<path fill="#28009d" d="M1330 560h10v10h-10z"/>
<path fill="#31009d" d="M1340 560h10v10h-10z"/>
<path fill="#39009d" d="M1350 560h10v10h-10z"/>
<path fill="#42009d" d="M1360 560h10v10h-10z"/>
<path fill="#12009d" d="M1300 570h10v10h-10z"/>
<path fill="#1a009d" d="M1310 570h10v10h-10z"/>
<path fill="#22009d" d="M1320 570h10v10h-10z"/>
<path fill="#2a009d" d="M1330 570h10v10h-10z"/>
</g></g>
</g>
<g clip-path="url(#tri)" shape-rendering="crispEdges">
<g clip-path="url(#sec0)"><g filter="url(#bli)">
<path fill="#ffff00" d="M1528 240h8v8h-8z"/>
<path fill="#ffff00" d="M1520 248h16v8h-16z"/>
<path fill="#fffb00" d="M1536 248h8v8h-8z"/>
<path fill="#ffff0d" d="M1512 256h8v8h-8z"/>
<path fill="#ffff08" d="M1520 256h8v8h-8z"/>
<path fill="#fffd03" d="M1528 256h8v8h-8z"/>
<path fill="#ffeb00" d="M1536 256h8v8h-8z"/>
<path fill="#ffda00" d="M1544 256h8v8h-8z"/>
<path fill="#ffcb00" d="M1552 256h8v8h-8z"/>
<path fill="#ffff15" d="M1512 264h8v8h-8z"/>
<path fill="#ffff10" d="M1520 264h8v8h-8z"/>
<path fill="#ffed0a" d="M1528 264h8v8h-8z"/>
<path fill="#ffdb06" d="M1536 264h8v8h-8z"/>
<path fill="#ffcc02" d="M1544 264h8v8h-8z"/>
<path fill="#ffbe00" d="M1552 264h8v8h-8z"/>
<path fill="#ffb100" d="M1560 264h8v8h-8z"/>
<path fill="#fea500" d="M1568 264h8v8h-8z"/>
<path fill="#ffff24" d="M1504 272h8v8h-8z"/>
<path fill="#ffff1d" d="M1512 272h8v8h-8z"/>
<path fill="#ffef17" d="M1520 272h8v8h-8z"/>
<path fill="#ffdd11" d="M1528 272h8v8h-8z"/>
<path fill="#ffcd0d" d="M1536 272h8v8h-8z"/>
<path fill="#ffbe08" d="M1544 272h8v8h-8z"/>
<path fill="#ffb104" d="M1552 272h8v8h-8z"/>
<path fill="#ffa501" d="M1560 272h8v8h-8z"/>
<path fill="#fe9a00" d="M1568 272h8v8h-8z"/>
<path fill="#fa8e00" d="M1576 272h8v8h-8z"/>
<path fill="#f68300" d="M1584 272h8v8h-8z"/>
<path fill="#ffff34" d="M1496 280h8v8h-8z"/>
<path fill="#ffff2c" d="M1504 280h8v8h-8z"/>
<path fill="#fff224" d="M1512 280h8v8h-8z"/>
<path fill="#ffde1e" d="M1520 280h8v8h-8z"/>
<path fill="#ffcd18" d="M1528 280h8v8h-8z"/>
<path fill="#ffbe13" d="M1536 280h8v8h-8z"/>
<path fill="#ffb10e" d="M1544 280h8v8h-8z"/>
<path fill="#ffa50a" d="M1552 280h8v8h-8z"/>
<path fill="#ff9a07" d="M1560 280h8v8h-8z"/>
<path fill="#fe8f03" d="M1568 280h8v8h-8z"/>
<path fill="#fa8400" d="M1576 280h8v8h-8z"/>
<path fill="#f67a00" d="M1584 280h8v8h-8z"/>
<path fill="#f37100" d="M1592 280h8v8h-8z"/>
<path fill="#ef6800" d="M1600 280h8v8h-8z"/>
<path fill="#ffff45" d="M1488 288h8v8h-8z"/>
<path fill="#ffff3b" d="M1496 288h8v8h-8z"/>
<path fill="#fff433" d="M1504 288h8v8h-8z"/>
<path fill="#ffe02b" d="M1512 288h8v8h-8z"/>
<path fill="#ffcf24" d="M1520 288h8v8h-8z"/>
<path fill="#ffbf1e" d="M1528 288h8v8h-8z"/>
<path fill="#ffb119" d="M1536 288h8v8h-8z"/>
<path fill="#ffa414" d="M1544 288h8v8h-8z"/>
<path fill="#ff9910" d="M1552 288h8v8h-8z"/>
<path fill="#ff8f0c" d="M1560 288h8v8h-8z"/>
<path fill="#fe8509" d="M1568 288h8v8h-8z"/>
<path fill="#fa7b05" d="M1576 288h8v8h-8z"/>
<path fill="#f67102" d="M1584 288h8v8h-8z"/>
<path fill="#f36900" d="M1592 288h8v8h-8z"/>
<path fill="#ef6100" d="M1600 288h8v8h-8z"/>
<path fill="#eb5900" d="M1608 288h8v8h-8z"/>
<path fill="#ffff59" d="M1480 296h8v8h-8z"/>
<path fill="#ffff4d" d="M1488 296h8v8h-8z"/>
<path fill="#fff742" d="M1496 296h8v8h-8z"/>
<path fill="#ffe239" d="M1504 296h8v8h-8z"/>
<path fill="#ffd032" d="M1512 296h8v8h-8z"/>
<path fill="#ffbf2b" d="M1520 296h8v8h-8z"/>
<path fill="#ffb124" d="M1528 296h8v8h-8z"/>
<path fill="#ffa41f" d="M1536 296h8v8h-8z"/>
<path fill="#ff981a" d="M1544 296h8v8h-8z"/>
<path fill="#ff8e16" d="M1552 296h8v8h-8z"/>
<path fill="#ff8411" d="M1560 296h8v8h-8z"/>
<path fill="#fe7b0e" d="M1568 296h8v8h-8z"/>
<path fill="#fa710a" d="M1576 296h8v8h-8z"/>
<path fill="#f66907" d="M1584 296h8v8h-8z"/>
<path fill="#f36104" d="M1592 296h8v8h-8z"/>
<path fill="#ef5901" d="M1600 296h8v8h-8z"/>
<path fill="#eb5200" d="M1608 296h8v8h-8z"/>
<path fill="#e84c00" d="M1616 296h8v8h-8z"/>
<path fill="#e44600" d="M1624 296h8v8h-8z"/>
<path fill="#ffff6e" d="M1472 304h8v8h-8z"/>
<path fill="#ffff60" d="M1480 304h8v8h-8z"/>
<path fill="#fffa53" d="M1488 304h8v8h-8z"/>
<path fill="#ffe449" d="M1496 304h8v8h-8z"/>
<path fill="#ffd140" d="M1504 304h8v8h-8z"/>
<path fill="#ffc038" d="M1512 304h8v8h-8z"/>
<path fill="#ffb131" d="M1520 304h8v8h-8z"/>
<path fill="#ffa42a" d="M1528 304h8v8h-8z"/>
<path fill="#ff9825" d="M1536 304h8v8h-8z"/>
<path fill="#ff8d1f" d="M1544 304h8v8h-8z"/>
<path fill="#ff831b" d="M1552 304h8v8h-8z"/>
<path fill="#ff7a17" d="M1560 304h8v8h-8z"/>
<path fill="#fe7113" d="M1568 304h8v8h-8z"/>
<path fill="#fa680f" d="M1576 304h8v8h-8z"/>
<path fill="#f6600b" d="M1584 304h8v8h-8z"/>
<path fill="#f35908" d="M1592 304h8v8h-8z"/>
<path fill="#ef5206" d="M1600 304h8v8h-8z"/>
<path fill="#eb4b03" d="M1608 304h8v8h-8z"/>
<path fill="#e84601" d="M1616 304h8v8h-8z"/>
<path fill="#e44000" d="M1624 304h8v8h-8z"/>
<path fill="#e03b00" d="M1632 304h8v8h-8z"/>
<path fill="#dc3700" d="M1640 304h8v8h-8z"/>
<path fill="#ffff75" d="M1472 312h8v8h-8z"/>
<path fill="#fffe66" d="M1480 312h8v8h-8z"/>
<path fill="#ffe65a" d="M1488 312h8v8h-8z"/>
<path fill="#ffd24f" d="M1496 312h8v8h-8z"/>
<path fill="#ffc146" d="M1504 312h8v8h-8z"/>
<path fill="#ffb13e" d="M1512 312h8v8h-8z"/>
<path fill="#ffa336" d="M1520 312h8v8h-8z"/>
<path fill="#ff9730" d="M1528 312h8v8h-8z"/>
<path fill="#ff8c2a" d="M1536 312h8v8h-8z"/>
<path fill="#ff8225" d="M1544 312h8v8h-8z"/>
<path fill="#ff7920" d="M1552 312h8v8h-8z"/>
<path fill="#ff701b" d="M1560 312h8v8h-8z"/>
<path fill="#fe6817" d="M1568 312h8v8h-8z"/>
<path fill="#fa6013" d="M1576 312h8v8h-8z"/>
<path fill="#f65810" d="M1584 312h8v8h-8z"/>
<path fill="#f3510d" d="M1592 312h8v8h-8z"/>
<path fill="#ef4b0a" d="M1600 312h8v8h-8z"/>
<path fill="#eb4507" d="M1608 312h8v8h-8z"/>
<path fill="#e83f05" d="M1616 312h8v8h-8z"/>
<path fill="#e43a02" d="M1624 312h8v8h-8z"/>
<path fill="#e03600" d="M1632 312h8v8h-8z"/>
<path fill="#dc3100" d="M1640 312h8v8h-8z"/>
<path fill="#d92d00" d="M1648 312h8v8h-8z"/>
<path fill="#d52a00" d="M1656 312h8v8h-8z"/>
<path fill="#ffff8c" d="M1464 320h8v8h-8z"/>
<path fill="#ffff7b" d="M1472 320h8v8h-8z"/>
<path fill="#ffe96c" d="M1480 320h8v8h-8z"/>
<path fill="#ffd460" d="M1488 320h8v8h-8z"/>
<path fill="#ffc155" d="M1496 320h8v8h-8z"/>
<path fill="#ffb14c" d="M1504 320h8v8h-8z"/>
<path fill="#ffa343" d="M1512 320h8v8h-8z"/>
<path fill="#ff963c" d="M1520 320h8v8h-8z"/>
<path fill="#ff8b35" d="M1528 320h8v8h-8z"/>
<path fill="#ff802f" d="M1536 320h8v8h-8z"/>
<path fill="#ff772a" d="M1544 320h8v8h-8z"/>
<path fill="#ff6f25" d="M1552 320h8v8h-8z"/>
<path fill="#ff6720" d="M1560 320h8v8h-8z"/>
<path fill="#fe5f1c" d="M1568 320h8v8h-8z"/>
<path fill="#fa5718" d="M1576 320h8v8h-8z"/>
<path fill="#f65014" d="M1584 320h8v8h-8z"/>
<path fill="#f34a11" d="M1592 320h8v8h-8z"/>
<path fill="#ef440e" d="M1600 320h8v8h-8z"/>
<path fill="#eb3e0b" d="M1608 320h8v8h-8z"/>
<path fill="#e83908" d="M1616 320h8v8h-8z"/>
<path fill="#e43506" d="M1624 320h8v8h-8z"/>
<path fill="#e03004" d="M1632 320h8v8h-8z"/>
<path fill="#dc2c02" d="M1640 320h8v8h-8z"/>
<path fill="#d92800" d="M1648 320h8v8h-8z"/>
<path fill="#d52500" d="M1656 320h8v8h-8z"/>
<path fill="#d12200" d="M1664 320h8v8h-8z"/>
<path fill="#ffffa6" d="M1456 328h8v8h-8z"/>
<path fill="#ffff92" d="M1464 328h8v8h-8z"/>
<path fill="#ffec81" d="M1472 328h8v8h-8z"/>
<path fill="#ffd572" d="M1480 328h8v8h-8z"/>
<path fill="#ffc266" d="M1488 328h8v8h-8z"/>
<path fill="#ffb15b" d="M1496 328h8v8h-8z"/>
<path fill="#ffa251" d="M1504 328h8v8h-8z"/>
<path fill="#ff9549" d="M1512 328h8v8h-8z"/>
<path fill="#ff8941" d="M1520 328h8v8h-8z"/>
<path fill="#ff7f3a" d="M1528 328h8v8h-8z"/>
<path fill="#ff7534" d="M1536 328h8v8h-8z"/>
<path fill="#ff6d2f" d="M1544 328h8v8h-8z"/>
<path fill="#ff6529" d="M1552 328h8v8h-8z"/>
<path fill="#ff5e25" d="M1560 328h8v8h-8z"/>
<path fill="#fe5720" d="M1568 328h8v8h-8z"/>
<path fill="#fa4f1c" d="M1576 328h8v8h-8z"/>
<path fill="#f64918" d="M1584 328h8v8h-8z"/>
<path fill="#f34315" d="M1592 328h8v8h-8z"/>
<path fill="#ef3d11" d="M1600 328h8v8h-8z"/>
<path fill="#eb380e" d="M1608 328h8v8h-8z"/>
<path fill="#e8330c" d="M1616 328h8v8h-8z"/>
<path fill="#e42f09" d="M1624 328h8v8h-8z"/>
<path fill="#e02b07" d="M1632 328h8v8h-8z"/>
<path fill="#dc2705" d="M1640 328h8v8h-8z"/>
<path fill="#d92403" d="M1648 328h8v8h-8z"/>
<path fill="#d52001" d="M1656 328h8v8h-8z"/>
<path fill="#d11d00" d="M1664 328h8v8h-8z"/>
<path fill="#ce1b00" d="M1672 328h8v8h-8z"/>
<path fill="#ca1800" d="M1680 328h8v8h-8z"/>
<path fill="#ffffc3" d="M1448 336h8v8h-8z"/>
<path fill="#ffffab" d="M1456 336h8v8h-8z"/>
<path fill="#ffef97" d="M1464 336h8v8h-8z"/>
<path fill="#ffd786" d="M1472 336h8v8h-8z"/>
<path fill="#ffc378" d="M1480 336h8v8h-8z"/>
<path fill="#ffb16b" d="M1488 336h8v8h-8z"/>
<path fill="#ffa260" d="M1496 336h8v8h-8z"/>
<path fill="#ff9456" d="M1504 336h8v8h-8z"/>
<path fill="#ff884e" d="M1512 336h8v8h-8z"/>
<path fill="#ff7d46" d="M1520 336h8v8h-8z"/>
<path fill="#ff733f" d="M1528 336h8v8h-8z"/>
<path fill="#ff6b39" d="M1536 336h8v8h-8z"/>
<path fill="#ff6333" d="M1544 336h8v8h-8z"/>
<path fill="#ff5b2e" d="M1552 336h8v8h-8z"/>
<path fill="#ff5529" d="M1560 336h8v8h-8z"/>
<path fill="#fe4e25" d="M1568 336h8v8h-8z"/>
<path fill="#fa4820" d="M1576 336h8v8h-8z"/>
<path fill="#f6411c" d="M1584 336h8v8h-8z"/>
<path fill="#f33c18" d="M1592 336h8v8h-8z"/>
<path fill="#ef3715" d="M1600 336h8v8h-8z"/>
<path fill="#eb3212" d="M1608 336h8v8h-8z"/>
<path fill="#e82d0f" d="M1616 336h8v8h-8z"/>
<path fill="#e4290c" d="M1624 336h8v8h-8z"/>
<path fill="#e0260a" d="M1632 336h8v8h-8z"/>
<path fill="#dc2208" d="M1640 336h8v8h-8z"/>
<path fill="#d91f06" d="M1648 336h8v8h-8z"/>
<path fill="#d51c04" d="M1656 336h8v8h-8z"/>
<path fill="#d11902" d="M1664 336h8v8h-8z"/>
<path fill="#ce1701" d="M1672 336h8v8h-8z"/>
<path fill="#ca1400" d="M1680 336h8v8h-8z"/>
<path fill="#c61200" d="M1688 336h8v8h-8z"/>
<path fill="#c31000" d="M1696 336h8v8h-8z"/>
<path fill="#ffffe4" d="M1440 344h8v8h-8z"/>
<path fill="#ffffc7" d="M1448 344h8v8h-8z"/>
<path fill="#fff2b0" d="M1456 344h8v8h-8z"/>
<path fill="#ffd99c" d="M1464 344h8v8h-8z"/>
<path fill="#ffc38b" d="M1472 344h8v8h-8z"/>
<path fill="#ffb17d" d="M1480 344h8v8h-8z"/>
<path fill="#ffa170" d="M1488 344h8v8h-8z"/>
<path fill="#ff9365" d="M1496 344h8v8h-8z"/>
<path fill="#ff875c" d="M1504 344h8v8h-8z"/>
<path fill="#ff7c53" d="M1512 344h8v8h-8z"/>
<path fill="#ff724b" d="M1520 344h8v8h-8z"/>
<path fill="#ff6944" d="M1528 344h8v8h-8z"/>
<path fill="#ff613e" d="M1536 344h8v8h-8z"/>
<path fill="#ff5938" d="M1544 344h8v8h-8z"/>
<path fill="#ff5232" d="M1552 344h8v8h-8z"/>
<path fill="#ff4c2e" d="M1560 344h8v8h-8z"/>
<path fill="#fe4629" d="M1568 344h8v8h-8z"/>
<path fill="#fa4024" d="M1576 344h8v8h-8z"/>
<path fill="#f63a20" d="M1584 344h8v8h-8z"/>
<path fill="#f3351c" d="M1592 344h8v8h-8z"/>
<path fill="#ef3019" d="M1600 344h8v8h-8z"/>
<path fill="#eb2c15" d="M1608 344h8v8h-8z"/>
<path fill="#e82812" d="M1616 344h8v8h-8z"/>
<path fill="#e42410" d="M1624 344h8v8h-8z"/>
<path fill="#e0210d" d="M1632 344h8v8h-8z"/>
<path fill="#dc1d0b" d="M1640 344h8v8h-8z"/>
<path fill="#d91a09" d="M1648 344h8v8h-8z"/>
<path fill="#d51807" d="M1656 344h8v8h-8z"/>
<path fill="#d11505" d="M1664 344h8v8h-8z"/>
<path fill="#ce1303" d="M1672 344h8v8h-8z"/>
<path fill="#ca1102" d="M1680 344h8v8h-8z"/>
<path fill="#c60e00" d="M1688 344h8v8h-8z"/>
<path fill="#c30d00" d="M1696 344h8v8h-8z"/>
<path fill="#bf0b00" d="M1704 344h8v8h-8z"/>
<path fill="#bb0900" d="M1712 344h8v8h-8z"/>
<path fill="#ffffff" d="M1432 352h8v8h-8z"/>
<path fill="#ffffe7" d="M1440 352h8v8h-8z"/>
<path fill="#fff6cb" d="M1448 352h8v8h-8z"/>
<path fill="#ffdbb4" d="M1456 352h8v8h-8z"/>
<path fill="#ffc4a1" d="M1464 352h8v8h-8z"/>
<path fill="#ffb190" d="M1472 352h8v8h-8z"/>
<path fill="#ffa082" d="M1480 352h8v8h-8z"/>
<path fill="#ff9275" d="M1488 352h8v8h-8z"/>
<path fill="#ff856a" d="M1496 352h8v8h-8z"/>
<path fill="#ff7a60" d="M1504 352h8v8h-8z"/>
<path fill="#ff7058" d="M1512 352h8v8h-8z"/>
<path fill="#ff6650" d="M1520 352h8v8h-8z"/>
<path fill="#ff5e49" d="M1528 352h8v8h-8z"/>
<path fill="#ff5742" d="M1536 352h8v8h-8z"/>
<path fill="#ff503c" d="M1544 352h8v8h-8z"/>
<path fill="#ff4a37" d="M1552 352h8v8h-8z"/>
<path fill="#ff4432" d="M1560 352h8v8h-8z"/>
<path fill="#fe3e2d" d="M1568 352h8v8h-8z"/>
<path fill="#fa3928" d="M1576 352h8v8h-8z"/>
<path fill="#f63324" d="M1584 352h8v8h-8z"/>
<path fill="#f32e20" d="M1592 352h8v8h-8z"/>
<path fill="#ef2a1c" d="M1600 352h8v8h-8z"/>
<path fill="#eb2619" d="M1608 352h8v8h-8z"/>
<path fill="#e82216" d="M1616 352h8v8h-8z"/>
<path fill="#e41f13" d="M1624 352h8v8h-8z"/>
<path fill="#e01c10" d="M1632 352h8v8h-8z"/>
<path fill="#dc190e" d="M1640 352h8v8h-8z"/>
<path fill="#d9160b" d="M1648 352h8v8h-8z"/>
<path fill="#d51309" d="M1656 352h8v8h-8z"/>
<path fill="#d11108" d="M1664 352h8v8h-8z"/>
<path fill="#ce0f06" d="M1672 352h8v8h-8z"/>
<path fill="#ca0d04" d="M1680 352h8v8h-8z"/>
<path fill="#c60b03" d="M1688 352h8v8h-8z"/>
<path fill="#c30901" d="M1696 352h8v8h-8z"/>
<path fill="#bf0800" d="M1704 352h8v8h-8z"/>
<path fill="#bb0600" d="M1712 352h8v8h-8z"/>
<path fill="#b70500" d="M1720 352h8v8h-8z"/>
<path fill="#b40400" d="M1728 352h8v8h-8z"/>
<path fill="#ffffff" d="M1432 360h8v8h-8z"/>
<path fill="#fffaea" d="M1440 360h8v8h-8z"/>
<path fill="#ffddcf" d="M1448 360h8v8h-8z"/>
<path fill="#ffc5b8" d="M1456 360h8v8h-8z"/>
<path fill="#ffb1a5" d="M1464 360h8v8h-8z"/>
<path fill="#ffa095" d="M1472 360h8v8h-8z"/>
<path fill="#ff9186" d="M1480 360h8v8h-8z"/>
<path fill="#ff837a" d="M1488 360h8v8h-8z"/>
<path fill="#ff786f" d="M1496 360h8v8h-8z"/>
<path fill="#ff6d65" d="M1504 360h8v8h-8z"/>
<path fill="#ff645c" d="M1512 360h8v8h-8z"/>
<path fill="#ff5c54" d="M1520 360h8v8h-8z"/>
<path fill="#ff544d" d="M1528 360h8v8h-8z"/>
<path fill="#ff4d46" d="M1536 360h8v8h-8z"/>
<path fill="#ff4740" d="M1544 360h8v8h-8z"/>
<path fill="#ff413b" d="M1552 360h8v8h-8z"/>
<path fill="#ff3c36" d="M1560 360h8v8h-8z"/>
<path fill="#fe3731" d="M1568 360h8v8h-8z"/>
<path fill="#fa312c" d="M1576 360h8v8h-8z"/>
<path fill="#f62c27" d="M1584 360h8v8h-8z"/>
<path fill="#f32823" d="M1592 360h8v8h-8z"/>
<path fill="#ef241f" d="M1600 360h8v8h-8z"/>
<path fill="#eb201c" d="M1608 360h8v8h-8z"/>
<path fill="#e81d19" d="M1616 360h8v8h-8z"/>
<path fill="#e41a16" d="M1624 360h8v8h-8z"/>
<path fill="#e01713" d="M1632 360h8v8h-8z"/>
<path fill="#dc1411" d="M1640 360h8v8h-8z"/>
<path fill="#d9120e" d="M1648 360h8v8h-8z"/>
<path fill="#d50f0c" d="M1656 360h8v8h-8z"/>
<path fill="#d10d0a" d="M1664 360h8v8h-8z"/>
<path fill="#ce0b08" d="M1672 360h8v8h-8z"/>
<path fill="#ca0907" d="M1680 360h8v8h-8z"/>
<path fill="#c60805" d="M1688 360h8v8h-8z"/>
<path fill="#c30603" d="M1696 360h8v8h-8z"/>
<path fill="#bf0502" d="M1704 360h8v8h-8z"/>
<path fill="#bb0301" d="M1712 360h8v8h-8z"/>
<path fill="#b70200" d="M1720 360h8v8h-8z"/>
<path fill="#b40100" d="M1728 360h8v8h-8z"/>
<path fill="#b20000" d="M1736 360h8v8h-8z"/>
<path fill="#ffffff" d="M1424 368h8v8h-8z"/>
<path fill="#fffeff" d="M1432 368h8v8h-8z"/>
<path fill="#ffe0ed" d="M1440 368h8v8h-8z"/>
<path fill="#ffc6d3" d="M1448 368h8v8h-8z"/>
<path fill="#ffb1bc" d="M1456 368h8v8h-8z"/>
<path fill="#ff9fa9" d="M1464 368h8v8h-8z"/>
<path fill="#ff8f99" d="M1472 368h8v8h-8z"/>
<path fill="#ff828b" d="M1480 368h8v8h-8z"/>
<path fill="#ff767e" d="M1488 368h8v8h-8z"/>
<path fill="#ff6b73" d="M1496 368h8v8h-8z"/>
<path fill="#ff6269" d="M1504 368h8v8h-8z"/>
<path fill="#ff5960" d="M1512 368h8v8h-8z"/>
<path fill="#ff5158" d="M1520 368h8v8h-8z"/>
<path fill="#ff4a51" d="M1528 368h8v8h-8z"/>
<path fill="#ff444b" d="M1536 368h8v8h-8z"/>
<path fill="#ff3e44" d="M1544 368h8v8h-8z"/>
<path fill="#ff393f" d="M1552 368h8v8h-8z"/>
<path fill="#ff343a" d="M1560 368h8v8h-8z"/>
<path fill="#fe2f35" d="M1568 368h8v8h-8z"/>
<path fill="#fa2a30" d="M1576 368h8v8h-8z"/>
<path fill="#f6262b" d="M1584 368h8v8h-8z"/>
<path fill="#f32227" d="M1592 368h8v8h-8z"/>
<path fill="#ef1e23" d="M1600 368h8v8h-8z"/>
<path fill="#eb1b1f" d="M1608 368h8v8h-8z"/>
<path fill="#e8181c" d="M1616 368h8v8h-8z"/>
<path fill="#e41519" d="M1624 368h8v8h-8z"/>
<path fill="#e01216" d="M1632 368h8v8h-8z"/>
<path fill="#dc1013" d="M1640 368h8v8h-8z"/>
<path fill="#d90d11" d="M1648 368h8v8h-8z"/>
<path fill="#d50b0f" d="M1656 368h8v8h-8z"/>
<path fill="#d1090d" d="M1664 368h8v8h-8z"/>
<path fill="#ce070b" d="M1672 368h8v8h-8z"/>
<path fill="#ca0609" d="M1680 368h8v8h-8z"/>
<path fill="#c60407" d="M1688 368h8v8h-8z"/>
<path fill="#c30306" d="M1696 368h8v8h-8z"/>
<path fill="#bf0104" d="M1704 368h8v8h-8z"/>
<path fill="#bb0003" d="M1712 368h8v8h-8z"/>
<path fill="#b70002" d="M1720 368h8v8h-8z"/>
<path fill="#b40001" d="M1728 368h8v8h-8z"/>
<path fill="#ffe3ff" d="M1432 376h8v8h-8z"/>
<path fill="#ffc8f0" d="M1440 376h8v8h-8z"/>
<path fill="#ffb1d6" d="M1448 376h8v8h-8z"/>
<path fill="#ff9ec0" d="M1456 376h8v8h-8z"/>
<path fill="#ff8ead" d="M1464 376h8v8h-8z"/>
<path fill="#ff809d" d="M1472 376h8v8h-8z"/>
<path fill="#ff738f" d="M1480 376h8v8h-8z"/>
<path fill="#ff6983" d="M1488 376h8v8h-8z"/>
<path fill="#ff5f77" d="M1496 376h8v8h-8z"/>
<path fill="#ff566e" d="M1504 376h8v8h-8z"/>
<path fill="#ff4e65" d="M1512 376h8v8h-8z"/>
<path fill="#ff475d" d="M1520 376h8v8h-8z"/>
<path fill="#ff4155" d="M1528 376h8v8h-8z"/>
<path fill="#ff3b4f" d="M1536 376h8v8h-8z"/>
<path fill="#ff3648" d="M1544 376h8v8h-8z"/>
<path fill="#ff3143" d="M1552 376h8v8h-8z"/>
<path fill="#ff2c3e" d="M1560 376h8v8h-8z"/>
<path fill="#fe2838" d="M1568 376h8v8h-8z"/>
<path fill="#fa2433" d="M1576 376h8v8h-8z"/>
<path fill="#f6202e" d="M1584 376h8v8h-8z"/>
<path fill="#f31c2a" d="M1592 376h8v8h-8z"/>
<path fill="#ef1826" d="M1600 376h8v8h-8z"/>
<path fill="#eb1522" d="M1608 376h8v8h-8z"/>
<path fill="#e8121f" d="M1616 376h8v8h-8z"/>
<path fill="#e4101c" d="M1624 376h8v8h-8z"/>
<path fill="#e00d19" d="M1632 376h8v8h-8z"/>
<path fill="#dc0b16" d="M1640 376h8v8h-8z"/>
<path fill="#d90913" d="M1648 376h8v8h-8z"/>
<path fill="#d50711" d="M1656 376h8v8h-8z"/>
<path fill="#d1050f" d="M1664 376h8v8h-8z"/>
<path fill="#ce040d" d="M1672 376h8v8h-8z"/>
<path fill="#ca020b" d="M1680 376h8v8h-8z"/>
<path fill="#c60109" d="M1688 376h8v8h-8z"/>
<path fill="#c30008" d="M1696 376h8v8h-8z"/>
<path fill="#bf0006" d="M1704 376h8v8h-8z"/>
<path fill="#bb0005" d="M1712 376h8v8h-8z"/>
<path fill="#b70004" d="M1720 376h8v8h-8z"/>
<path fill="#ffc9ff" d="M1432 384h8v8h-8z"/>
<path fill="#ffb1f2" d="M1440 384h8v8h-8z"/>
<path fill="#ff9dd9" d="M1448 384h8v8h-8z"/>
<path fill="#ff8cc3" d="M1456 384h8v8h-8z"/>
<path fill="#ff7eb1" d="M1464 384h8v8h-8z"/>
<path fill="#ff71a1" d="M1472 384h8v8h-8z"/>
<path fill="#ff6693" d="M1480 384h8v8h-8z"/>
<path fill="#ff5c87" d="M1488 384h8v8h-8z"/>
<path fill="#ff537c" d="M1496 384h8v8h-8z"/>
<path fill="#ff4b72" d="M1504 384h8v8h-8z"/>
<path fill="#ff4469" d="M1512 384h8v8h-8z"/>
<path fill="#ff3e61" d="M1520 384h8v8h-8z"/>
<path fill="#ff3859" d="M1528 384h8v8h-8z"/>
<path fill="#ff3352" d="M1536 384h8v8h-8z"/>
<path fill="#ff2e4c" d="M1544 384h8v8h-8z"/>
<path fill="#ff2947" d="M1552 384h8v8h-8z"/>
<path fill="#ff2541" d="M1560 384h8v8h-8z"/>
<path fill="#fe213c" d="M1568 384h8v8h-8z"/>
<path fill="#fa1d37" d="M1576 384h8v8h-8z"/>
<path fill="#f61932" d="M1584 384h8v8h-8z"/>
<path fill="#f3162d" d="M1592 384h8v8h-8z"/>
<path fill="#ef1329" d="M1600 384h8v8h-8z"/>
<path fill="#eb1025" d="M1608 384h8v8h-8z"/>
<path fill="#e80d22" d="M1616 384h8v8h-8z"/>
<path fill="#e40b1e" d="M1624 384h8v8h-8z"/>
<path fill="#e0091b" d="M1632 384h8v8h-8z"/>
<path fill="#dc0719" d="M1640 384h8v8h-8z"/>
<path fill="#d90516" d="M1648 384h8v8h-8z"/>
<path fill="#d50314" d="M1656 384h8v8h-8z"/>
<path fill="#d10211" d="M1664 384h8v8h-8z"/>
<path fill="#ce000f" d="M1672 384h8v8h-8z"/>
<path fill="#ca000d" d="M1680 384h8v8h-8z"/>
<path fill="#c6000b" d="M1688 384h8v8h-8z"/>
<path fill="#c3000a" d="M1696 384h8v8h-8z"/>
<path fill="#bf0008" d="M1704 384h8v8h-8z"/>
<path fill="#ffb1ff" d="M1432 392h8v8h-8z"/>
<path fill="#ff9cf4" d="M1440 392h8v8h-8z"/>
<path fill="#ff8bdc" d="M1448 392h8v8h-8z"/>
<path fill="#ff7bc7" d="M1456 392h8v8h-8z"/>
<path fill="#ff6eb5" d="M1464 392h8v8h-8z"/>
<path fill="#ff63a5" d="M1472 392h8v8h-8z"/>
<path fill="#ff5997" d="M1480 392h8v8h-8z"/>
<path fill="#ff508a" d="M1488 392h8v8h-8z"/>
<path fill="#ff487f" d="M1496 392h8v8h-8z"/>
<path fill="#ff4175" d="M1504 392h8v8h-8z"/>
<path fill="#ff3a6d" d="M1512 392h8v8h-8z"/>
<path fill="#ff3564" d="M1520 392h8v8h-8z"/>
<path fill="#ff2f5d" d="M1528 392h8v8h-8z"/>
<path fill="#ff2a56" d="M1536 392h8v8h-8z"/>
<path fill="#ff2650" d="M1544 392h8v8h-8z"/>
<path fill="#ff224a" d="M1552 392h8v8h-8z"/>
<path fill="#ff1e45" d="M1560 392h8v8h-8z"/>
<path fill="#fe1a40" d="M1568 392h8v8h-8z"/>
<path fill="#fa173a" d="M1576 392h8v8h-8z"/>
<path fill="#f61335" d="M1584 392h8v8h-8z"/>
<path fill="#f31031" d="M1592 392h8v8h-8z"/>
<path fill="#ef0d2c" d="M1600 392h8v8h-8z"/>
<path fill="#eb0b28" d="M1608 392h8v8h-8z"/>
<path fill="#e80825" d="M1616 392h8v8h-8z"/>
<path fill="#e40621" d="M1624 392h8v8h-8z"/>
<path fill="#e0041e" d="M1632 392h8v8h-8z"/>
<path fill="#dc031b" d="M1640 392h8v8h-8z"/>
<path fill="#d90119" d="M1648 392h8v8h-8z"/>
<path fill="#d50016" d="M1656 392h8v8h-8z"/>
<path fill="#d10014" d="M1664 392h8v8h-8z"/>
<path fill="#ce0011" d="M1672 392h8v8h-8z"/>
<path fill="#ca000f" d="M1680 392h8v8h-8z"/>
<path fill="#ff9bff" d="M1432 400h8v8h-8z"/>
<path fill="#ff89f6" d="M1440 400h8v8h-8z"/>
<path fill="#ff79de" d="M1448 400h8v8h-8z"/>
<path fill="#ff6bca" d="M1456 400h8v8h-8z"/>
<path fill="#ff60b8" d="M1464 400h8v8h-8z"/>
<path fill="#ff56a8" d="M1472 400h8v8h-8z"/>
<path fill="#ff4d9a" d="M1480 400h8v8h-8z"/>
<path fill="#ff458e" d="M1488 400h8v8h-8z"/>
<path fill="#ff3d83" d="M1496 400h8v8h-8z"/>
<path fill="#ff3779" d="M1504 400h8v8h-8z"/>
<path fill="#ff3170" d="M1512 400h8v8h-8z"/>
<path fill="#ff2c68" d="M1520 400h8v8h-8z"/>
<path fill="#ff2761" d="M1528 400h8v8h-8z"/>
<path fill="#ff225a" d="M1536 400h8v8h-8z"/>
<path fill="#ff1e54" d="M1544 400h8v8h-8z"/>
<path fill="#ff1a4e" d="M1552 400h8v8h-8z"/>
<path fill="#ff1748" d="M1560 400h8v8h-8z"/>
<path fill="#fe1443" d="M1568 400h8v8h-8z"/>
<path fill="#fa103d" d="M1576 400h8v8h-8z"/>
<path fill="#f60d38" d="M1584 400h8v8h-8z"/>
<path fill="#f30b34" d="M1592 400h8v8h-8z"/>
<path fill="#ef082f" d="M1600 400h8v8h-8z"/>
<path fill="#eb062b" d="M1608 400h8v8h-8z"/>
<path fill="#e80427" d="M1616 400h8v8h-8z"/>
<path fill="#e40224" d="M1624 400h8v8h-8z"/>
<path fill="#e00021" d="M1632 400h8v8h-8z"/>
<path fill="#dc001e" d="M1640 400h8v8h-8z"/>
<path fill="#d9001b" d="M1648 400h8v8h-8z"/>
<path fill="#d50018" d="M1656 400h8v8h-8z"/>
<path fill="#d10016" d="M1664 400h8v8h-8z"/>
<path fill="#ff86ff" d="M1432 408h8v8h-8z"/>
<path fill="#ff76f8" d="M1440 408h8v8h-8z"/>
<path fill="#ff68e1" d="M1448 408h8v8h-8z"/>
<path fill="#ff5ccd" d="M1456 408h8v8h-8z"/>
<path fill="#ff52bb" d="M1464 408h8v8h-8z"/>
<path fill="#ff49ac" d="M1472 408h8v8h-8z"/>
<path fill="#ff419e" d="M1480 408h8v8h-8z"/>
<path fill="#ff3a92" d="M1488 408h8v8h-8z"/>
<path fill="#ff3387" d="M1496 408h8v8h-8z"/>
<path fill="#ff2d7d" d="M1504 408h8v8h-8z"/>
<path fill="#ff2874" d="M1512 408h8v8h-8z"/>
<path fill="#ff236c" d="M1520 408h8v8h-8z"/>
<path fill="#ff1f64" d="M1528 408h8v8h-8z"/>
<path fill="#ff1b5d" d="M1536 408h8v8h-8z"/>
<path fill="#ff1757" d="M1544 408h8v8h-8z"/>
<path fill="#ff1351" d="M1552 408h8v8h-8z"/>
<path fill="#ff104c" d="M1560 408h8v8h-8z"/>
<path fill="#fe0d46" d="M1568 408h8v8h-8z"/>
<path fill="#fa0a41" d="M1576 408h8v8h-8z"/>
<path fill="#f6083b" d="M1584 408h8v8h-8z"/>
<path fill="#f30537" d="M1592 408h8v8h-8z"/>
<path fill="#ef0332" d="M1600 408h8v8h-8z"/>
<path fill="#eb012e" d="M1608 408h8v8h-8z"/>
<path fill="#e8002a" d="M1616 408h8v8h-8z"/>
<path fill="#e40027" d="M1624 408h8v8h-8z"/>
<path fill="#e00023" d="M1632 408h8v8h-8z"/>
<path fill="#dc0020" d="M1640 408h8v8h-8z"/>
<path fill="#ff73ff" d="M1432 416h8v8h-8z"/>
<path fill="#ff65fa" d="M1440 416h8v8h-8z"/>
<path fill="#ff59e3" d="M1448 416h8v8h-8z"/>
<path fill="#ff4ecf" d="M1456 416h8v8h-8z"/>
<path fill="#ff45be" d="M1464 416h8v8h-8z"/>
<path fill="#ff3daf" d="M1472 416h8v8h-8z"/>
<path fill="#ff35a1" d="M1480 416h8v8h-8z"/>
<path fill="#ff2f95" d="M1488 416h8v8h-8z"/>
<path fill="#ff298a" d="M1496 416h8v8h-8z"/>
<path fill="#ff2480" d="M1504 416h8v8h-8z"/>
<path fill="#ff1f77" d="M1512 416h8v8h-8z"/>
<path fill="#ff1b6f" d="M1520 416h8v8h-8z"/>
<path fill="#ff1768" d="M1528 416h8v8h-8z"/>
<path fill="#ff1361" d="M1536 416h8v8h-8z"/>
<path fill="#ff105a" d="M1544 416h8v8h-8z"/>
<path fill="#ff0d54" d="M1552 416h8v8h-8z"/>
<path fill="#ff0a4f" d="M1560 416h8v8h-8z"/>
<path fill="#fe074a" d="M1568 416h8v8h-8z"/>
<path fill="#fa0444" d="M1576 416h8v8h-8z"/>
<path fill="#f6023f" d="M1584 416h8v8h-8z"/>
<path fill="#f3003a" d="M1592 416h8v8h-8z"/>
<path fill="#ef0035" d="M1600 416h8v8h-8z"/>
<path fill="#eb0031" d="M1608 416h8v8h-8z"/>
<path fill="#e8002d" d="M1616 416h8v8h-8z"/>
<path fill="#ff61ff" d="M1432 424h8v8h-8z"/>
<path fill="#ff55fc" d="M1440 424h8v8h-8z"/>
<path fill="#ff4ae6" d="M1448 424h8v8h-8z"/>
<path fill="#ff41d2" d="M1456 424h8v8h-8z"/>
<path fill="#ff38c1" d="M1464 424h8v8h-8z"/>
<path fill="#ff31b2" d="M1472 424h8v8h-8z"/>
<path fill="#ff2ba4" d="M1480 424h8v8h-8z"/>
<path fill="#ff2598" d="M1488 424h8v8h-8z"/>
<path fill="#ff208d" d="M1496 424h8v8h-8z"/>
<path fill="#ff1b84" d="M1504 424h8v8h-8z"/>
<path fill="#ff177b" d="M1512 424h8v8h-8z"/>
<path fill="#ff1372" d="M1520 424h8v8h-8z"/>
<path fill="#ff0f6b" d="M1528 424h8v8h-8z"/>
<path fill="#ff0c64" d="M1536 424h8v8h-8z"/>
<path fill="#ff095e" d="M1544 424h8v8h-8z"/>
<path fill="#ff0658" d="M1552 424h8v8h-8z"/>
<path fill="#ff0352" d="M1560 424h8v8h-8z"/>
<path fill="#fe014d" d="M1568 424h8v8h-8z"/>
<path fill="#fa0047" d="M1576 424h8v8h-8z"/>
<path fill="#f60041" d="M1584 424h8v8h-8z"/>
<path fill="#f3003c" d="M1592 424h8v8h-8z"/>
<path fill="#ef0038" d="M1600 424h8v8h-8z"/>
<path fill="#ff50ff" d="M1432 432h8v8h-8z"/>
<path fill="#ff45fe" d="M1440 432h8v8h-8z"/>
<path fill="#ff3ce8" d="M1448 432h8v8h-8z"/>
<path fill="#ff34d5" d="M1456 432h8v8h-8z"/>
<path fill="#ff2dc4" d="M1464 432h8v8h-8z"/>
<path fill="#ff26b5" d="M1472 432h8v8h-8z"/>
<path fill="#ff20a7" d="M1480 432h8v8h-8z"/>
<path fill="#ff1b9b" d="M1488 432h8v8h-8z"/>
<path fill="#ff1791" d="M1496 432h8v8h-8z"/>
<path fill="#ff1287" d="M1504 432h8v8h-8z"/>
<path fill="#ff0e7e" d="M1512 432h8v8h-8z"/>
<path fill="#ff0b76" d="M1520 432h8v8h-8z"/>
<path fill="#ff086e" d="M1528 432h8v8h-8z"/>
<path fill="#ff0567" d="M1536 432h8v8h-8z"/>
<path fill="#ff0261" d="M1544 432h8v8h-8z"/>
<path fill="#ff005b" d="M1552 432h8v8h-8z"/>
<path fill="#ff0055" d="M1560 432h8v8h-8z"/>
<path fill="#fe0050" d="M1568 432h8v8h-8z"/>
<path fill="#fa004a" d="M1576 432h8v8h-8z"/>
<path fill="#ff40ff" d="M1432 440h8v8h-8z"/>
<path fill="#ff37ff" d="M1440 440h8v8h-8z"/>
<path fill="#ff2fea" d="M1448 440h8v8h-8z"/>
<path fill="#ff28d7" d="M1456 440h8v8h-8z"/>
<path fill="#ff21c6" d="M1464 440h8v8h-8z"/>
<path fill="#ff1cb8" d="M1472 440h8v8h-8z"/>
<path fill="#ff16aa" d="M1480 440h8v8h-8z"/>
<path fill="#ff129f" d="M1488 440h8v8h-8z"/>
<path fill="#ff0e94" d="M1496 440h8v8h-8z"/>
<path fill="#ff0a8a" d="M1504 440h8v8h-8z"/>
<path fill="#ff0781" d="M1512 440h8v8h-8z"/>
<path fill="#ff0379" d="M1520 440h8v8h-8z"/>
<path fill="#ff0171" d="M1528 440h8v8h-8z"/>
<path fill="#ff006a" d="M1536 440h8v8h-8z"/>
<path fill="#ff0064" d="M1544 440h8v8h-8z"/>
<path fill="#ff005e" d="M1552 440h8v8h-8z"/>
<path fill="#ff0058" d="M1560 440h8v8h-8z"/>
<path fill="#ff31ff" d="M1432 448h8v8h-8z"/>
<path fill="#ff29ff" d="M1440 448h8v8h-8z"/>
<path fill="#ff22ec" d="M1448 448h8v8h-8z"/>
<path fill="#ff1cd9" d="M1456 448h8v8h-8z"/>
<path fill="#ff16c9" d="M1464 448h8v8h-8z"/>
<path fill="#ff11ba" d="M1472 448h8v8h-8z"/>
<path fill="#ff0dad" d="M1480 448h8v8h-8z"/>
<path fill="#ff09a1" d="M1488 448h8v8h-8z"/>
<path fill="#ff0597" d="M1496 448h8v8h-8z"/>
<path fill="#ff028d" d="M1504 448h8v8h-8z"/>
<path fill="#ff0084" d="M1512 448h8v8h-8z"/>
<path fill="#ff007c" d="M1520 448h8v8h-8z"/>
<path fill="#ff0074" d="M1528 448h8v8h-8z"/>
<path fill="#ff006d" d="M1536 448h8v8h-8z"/>
<path fill="#ff23ff" d="M1432 456h8v8h-8z"/>
<path fill="#ff1cff" d="M1440 456h8v8h-8z"/>
<path fill="#ff16ed" d="M1448 456h8v8h-8z"/>
<path fill="#ff11db" d="M1456 456h8v8h-8z"/>
<path fill="#ff0ccb" d="M1464 456h8v8h-8z"/>
<path fill="#ff08bd" d="M1472 456h8v8h-8z"/>
<path fill="#ff04b0" d="M1480 456h8v8h-8z"/>
<path fill="#ff00a4" d="M1488 456h8v8h-8z"/>
<path fill="#ff009a" d="M1496 456h8v8h-8z"/>
<path fill="#ff0090" d="M1504 456h8v8h-8z"/>
<path fill="#ff0087" d="M1512 456h8v8h-8z"/>
<path fill="#ff007f" d="M1520 456h8v8h-8z"/>
<path fill="#ff16ff" d="M1432 464h8v8h-8z"/>
<path fill="#ff10ff" d="M1440 464h8v8h-8z"/>
<path fill="#ff0bef" d="M1448 464h8v8h-8z"/>
<path fill="#ff06dd" d="M1456 464h8v8h-8z"/>
<path fill="#ff02ce" d="M1464 464h8v8h-8z"/>
<path fill="#ff00bf" d="M1472 464h8v8h-8z"/>
<path fill="#ff00b2" d="M1480 464h8v8h-8z"/>
<path fill="#ff00a7" d="M1488 464h8v8h-8z"/>
<path fill="#ff009c" d="M1496 464h8v8h-8z"/>
<path fill="#ff09ff" d="M1432 472h8v8h-8z"/>
<path fill="#ff04ff" d="M1440 472h8v8h-8z"/>
<path fill="#ff00f1" d="M1448 472h8v8h-8z"/>
<path fill="#ff00df" d="M1456 472h8v8h-8z"/>
<path fill="#ff00d0" d="M1464 472h8v8h-8z"/>
<path fill="#ff00c2" d="M1472 472h8v8h-8z"/>
<path fill="#ff00ff" d="M1432 480h16v8h-16z"/>
<path fill="#ff00f2" d="M1448 480h8v8h-8z"/>
<path fill="#ff00e1" d="M1456 480h8v8h-8z"/>
<path fill="#ff00ff" d="M1432 488h8v8h-8z"/>
</g></g>
<g clip-path="url(#sec1)"><g filter="url(#bli)">
<path fill="#00ff00" d="M1424 184h8v8h-8z"/>
<path fill="#00ff01" d="M1416 192h8v8h-8z"/>
<path fill="#00ff00" d="M1424 192h8v8h-8z"/>
<path fill="#0aff00" d="M1432 192h8v8h-8z"/>
<path fill="#14ff00" d="M1440 192h8v8h-8z"/>
<path fill="#00ff06" d="M1416 200h8v8h-8z"/>
<path fill="#03ff04" d="M1424 200h8v8h-8z"/>
<path fill="#0eff01" d="M1432 200h8v8h-8z"/>
<path fill="#19ff00" d="M1440 200h8v8h-8z"/>
<path fill="#24ff00" d="M1448 200h8v8h-8z"/>
<path fill="#2fff00" d="M1456 200h8v8h-8z"/>
<path fill="#00ff0e" d="M1408 208h8v8h-8z"/>
<path fill="#00ff0c" d="M1416 208h8v8h-8z"/>
<path fill="#08ff09" d="M1424 208h8v8h-8z"/>
<path fill="#13ff06" d="M1432 208h8v8h-8z"/>
<path fill="#1eff03" d="M1440 208h8v8h-8z"/>
<path fill="#29ff00" d="M1448 208h8v8h-8z"/>
<path fill="#35ff00" d="M1456 208h8v8h-8z"/>
<path fill="#41ff00" d="M1464 208h8v8h-8z"/>
<path fill="#4eff00" d="M1472 208h8v8h-8z"/>
<path fill="#00ff14" d="M1408 216h8v8h-8z"/>
<path fill="#01ff11" d="M1416 216h8v8h-8z"/>
<path fill="#0cff0e" d="M1424 216h8v8h-8z"/>
<path fill="#18ff0c" d="M1432 216h8v8h-8z"/>
<path fill="#23ff09" d="M1440 216h8v8h-8z"/>
<path fill="#2fff06" d="M1448 216h8v8h-8z"/>
<path fill="#3cff03" d="M1456 216h8v8h-8z"/>
<path fill="#48ff00" d="M1464 216h8v8h-8z"/>
<path fill="#55ff00" d="M1472 216h8v8h-8z"/>
<path fill="#62ff00" d="M1480 216h8v8h-8z"/>
<path fill="#00ff1d" d="M1400 224h8v8h-8z"/>
<path fill="#00ff1a" d="M1408 224h8v8h-8z"/>
<path fill="#06ff17" d="M1416 224h8v8h-8z"/>
<path fill="#11ff14" d="M1424 224h8v8h-8z"/>
<path fill="#1dff12" d="M1432 224h8v8h-8z"/>
<path fill="#29ff0f" d="M1440 224h8v8h-8z"/>
<path fill="#35ff0c" d="M1448 224h8v8h-8z"/>
<path fill="#42ff09" d="M1456 224h8v8h-8z"/>
<path fill="#4fff05" d="M1464 224h8v8h-8z"/>
<path fill="#5dff02" d="M1472 224h8v8h-8z"/>
<path fill="#6aff00" d="M1480 224h8v8h-8z"/>
<path fill="#79ff00" d="M1488 224h8v8h-8z"/>
<path fill="#87ff00" d="M1496 224h8v8h-8z"/>
<path fill="#00ff23" d="M1400 232h8v8h-8z"/>
<path fill="#00ff20" d="M1408 232h8v8h-8z"/>
<path fill="#0aff1d" d="M1416 232h8v8h-8z"/>
<path fill="#16ff1b" d="M1424 232h8v8h-8z"/>
<path fill="#23ff18" d="M1432 232h8v8h-8z"/>
<path fill="#2fff15" d="M1440 232h8v8h-8z"/>
<path fill="#3cff12" d="M1448 232h8v8h-8z"/>
<path fill="#49ff0f" d="M1456 232h8v8h-8z"/>
<path fill="#57ff0c" d="M1464 232h8v8h-8z"/>
<path fill="#65ff08" d="M1472 232h8v8h-8z"/>
<path fill="#73ff05" d="M1480 232h8v8h-8z"/>
<path fill="#82ff01" d="M1488 232h8v8h-8z"/>
<path fill="#91ff00" d="M1496 232h8v8h-8z"/>
<path fill="#a1ff00" d="M1504 232h8v8h-8z"/>
<path fill="#b1ff00" d="M1512 232h8v8h-8z"/>
<path fill="#00ff2a" d="M1400 240h8v8h-8z"/>
<path fill="#03ff27" d="M1408 240h8v8h-8z"/>
<path fill="#0fff24" d="M1416 240h8v8h-8z"/>
<path fill="#1cff21" d="M1424 240h8v8h-8z"/>
<path fill="#29ff1e" d="M1432 240h8v8h-8z"/>
<path fill="#36ff1c" d="M1440 240h8v8h-8z"/>
<path fill="#43ff19" d="M1448 240h8v8h-8z"/>
<path fill="#51ff15" d="M1456 240h8v8h-8z"/>
<path fill="#5fff12" d="M1464 240h8v8h-8z"/>
<path fill="#6eff0f" d="M1472 240h8v8h-8z"/>
<path fill="#7dff0b" d="M1480 240h8v8h-8z"/>
<path fill="#8cff08" d="M1488 240h8v8h-8z"/>
<path fill="#9cff04" d="M1496 240h8v8h-8z"/>
<path fill="#acff01" d="M1504 240h8v8h-8z"/>
<path fill="#bdff00" d="M1512 240h8v8h-8z"/>
<path fill="#cfff00" d="M1520 240h8v8h-8z"/>
<path fill="#e1ff00" d="M1528 240h8v8h-8z"/>
<path fill="#00ff33" d="M1392 248h8v8h-8z"/>
<path fill="#00ff31" d="M1400 248h8v8h-8z"/>
<path fill="#08ff2e" d="M1408 248h8v8h-8z"/>
<path fill="#15ff2b" d="M1416 248h8v8h-8z"/>
<path fill="#22ff29" d="M1424 248h8v8h-8z"/>
<path fill="#2fff26" d="M1432 248h8v8h-8z"/>
<path fill="#3dff23" d="M1440 248h8v8h-8z"/>
<path fill="#4bff20" d="M1448 248h8v8h-8z"/>
<path fill="#59ff1d" d="M1456 248h8v8h-8z"/>
<path fill="#68ff19" d="M1464 248h8v8h-8z"/>
<path fill="#77ff16" d="M1472 248h8v8h-8z"/>
<path fill="#87ff13" d="M1480 248h8v8h-8z"/>
<path fill="#97ff0f" d="M1488 248h8v8h-8z"/>
<path fill="#a8ff0b" d="M1496 248h8v8h-8z"/>
<path fill="#b9ff08" d="M1504 248h8v8h-8z"/>
<path fill="#cbff04" d="M1512 248h8v8h-8z"/>
<path fill="#ddff00" d="M1520 248h8v8h-8z"/>
<path fill="#f0ff00" d="M1528 248h8v8h-8z"/>
<path fill="#ffff00" d="M1536 248h8v8h-8z"/>
<path fill="#00ff3b" d="M1392 256h8v8h-8z"/>
<path fill="#01ff38" d="M1400 256h8v8h-8z"/>
<path fill="#0eff36" d="M1408 256h8v8h-8z"/>
<path fill="#1bff33" d="M1416 256h8v8h-8z"/>
<path fill="#28ff30" d="M1424 256h8v8h-8z"/>
<path fill="#36ff2d" d="M1432 256h8v8h-8z"/>
<path fill="#44ff2a" d="M1440 256h8v8h-8z"/>
<path fill="#53ff27" d="M1448 256h8v8h-8z"/>
<path fill="#62ff24" d="M1456 256h8v8h-8z"/>
<path fill="#71ff21" d="M1464 256h8v8h-8z"/>
<path fill="#81ff1e" d="M1472 256h8v8h-8z"/>
<path fill="#92ff1a" d="M1480 256h8v8h-8z"/>
<path fill="#a3ff17" d="M1488 256h8v8h-8z"/>
<path fill="#b4ff13" d="M1496 256h8v8h-8z"/>
<path fill="#c7ff0f" d="M1504 256h8v8h-8z"/>
<path fill="#d9ff0b" d="M1512 256h8v8h-8z"/>
<path fill="#edff07" d="M1520 256h8v8h-8z"/>
<path fill="#ffff03" d="M1528 256h8v8h-8z"/>
<path fill="#ffff00" d="M1536 256h8v8h-8z"/>
<path fill="#00ff46" d="M1384 264h8v8h-8z"/>
<path fill="#00ff43" d="M1392 264h8v8h-8z"/>
<path fill="#06ff41" d="M1400 264h8v8h-8z"/>
<path fill="#13ff3e" d="M1408 264h8v8h-8z"/>
<path fill="#21ff3b" d="M1416 264h8v8h-8z"/>
<path fill="#2fff38" d="M1424 264h8v8h-8z"/>
<path fill="#3dff36" d="M1432 264h8v8h-8z"/>
<path fill="#4cff33" d="M1440 264h8v8h-8z"/>
<path fill="#5cff30" d="M1448 264h8v8h-8z"/>
<path fill="#6bff2c" d="M1456 264h8v8h-8z"/>
<path fill="#7cff29" d="M1464 264h8v8h-8z"/>
<path fill="#8cff26" d="M1472 264h8v8h-8z"/>
<path fill="#9eff22" d="M1480 264h8v8h-8z"/>
<path fill="#b0ff1f" d="M1488 264h8v8h-8z"/>
<path fill="#c2ff1b" d="M1496 264h8v8h-8z"/>
<path fill="#d5ff17" d="M1504 264h8v8h-8z"/>
<path fill="#e9ff14" d="M1512 264h8v8h-8z"/>
<path fill="#feff0f" d="M1520 264h8v8h-8z"/>
<path fill="#ffff0b" d="M1528 264h8v8h-8z"/>
<path fill="#00ff4e" d="M1384 272h8v8h-8z"/>
<path fill="#00ff4c" d="M1392 272h8v8h-8z"/>
<path fill="#0bff49" d="M1400 272h8v8h-8z"/>
<path fill="#19ff47" d="M1408 272h8v8h-8z"/>
<path fill="#28ff44" d="M1416 272h8v8h-8z"/>
<path fill="#36ff41" d="M1424 272h8v8h-8z"/>
<path fill="#45ff3e" d="M1432 272h8v8h-8z"/>
<path fill="#55ff3c" d="M1440 272h8v8h-8z"/>
<path fill="#65ff38" d="M1448 272h8v8h-8z"/>
<path fill="#76ff35" d="M1456 272h8v8h-8z"/>
<path fill="#87ff32" d="M1464 272h8v8h-8z"/>
<path fill="#98ff2f" d="M1472 272h8v8h-8z"/>
<path fill="#abff2b" d="M1480 272h8v8h-8z"/>
<path fill="#beff28" d="M1488 272h8v8h-8z"/>
<path fill="#d1ff24" d="M1496 272h8v8h-8z"/>
<path fill="#e5ff20" d="M1504 272h8v8h-8z"/>
<path fill="#faff1c" d="M1512 272h8v8h-8z"/>
<path fill="#ffff18" d="M1520 272h8v8h-8z"/>
<path fill="#ffff14" d="M1528 272h8v8h-8z"/>
<path fill="#00ff58" d="M1384 280h8v8h-8z"/>
<path fill="#03ff55" d="M1392 280h8v8h-8z"/>
<path fill="#11ff53" d="M1400 280h8v8h-8z"/>
<path fill="#20ff50" d="M1408 280h8v8h-8z"/>
<path fill="#2fff4e" d="M1416 280h8v8h-8z"/>
<path fill="#3eff4b" d="M1424 280h8v8h-8z"/>
<path fill="#4eff48" d="M1432 280h8v8h-8z"/>
<path fill="#5eff45" d="M1440 280h8v8h-8z"/>
<path fill="#6fff42" d="M1448 280h8v8h-8z"/>
<path fill="#81ff3f" d="M1456 280h8v8h-8z"/>
<path fill="#93ff3c" d="M1464 280h8v8h-8z"/>
<path fill="#a5ff39" d="M1472 280h8v8h-8z"/>
<path fill="#b9ff35" d="M1480 280h8v8h-8z"/>
<path fill="#cdff32" d="M1488 280h8v8h-8z"/>
<path fill="#e1ff2e" d="M1496 280h8v8h-8z"/>
<path fill="#f7ff2a" d="M1504 280h8v8h-8z"/>
<path fill="#ffff26" d="M1512 280h8v8h-8z"/>
<path fill="#ffff22" d="M1520 280h8v8h-8z"/>
<path fill="#00ff64" d="M1376 288h8v8h-8z"/>
<path fill="#00ff62" d="M1384 288h8v8h-8z"/>
<path fill="#09ff5f" d="M1392 288h8v8h-8z"/>
<path fill="#18ff5d" d="M1400 288h8v8h-8z"/>
<path fill="#27ff5a" d="M1408 288h8v8h-8z"/>
<path fill="#36ff58" d="M1416 288h8v8h-8z"/>
<path fill="#47ff55" d="M1424 288h8v8h-8z"/>
<path fill="#57ff52" d="M1432 288h8v8h-8z"/>
<path fill="#69ff50" d="M1440 288h8v8h-8z"/>
<path fill="#7aff4d" d="M1448 288h8v8h-8z"/>
<path fill="#8dff4a" d="M1456 288h8v8h-8z"/>
<path fill="#a0ff46" d="M1464 288h8v8h-8z"/>
<path fill="#b4ff43" d="M1472 288h8v8h-8z"/>
<path fill="#c8ff40" d="M1480 288h8v8h-8z"/>
<path fill="#ddff3c" d="M1488 288h8v8h-8z"/>
<path fill="#f3ff39" d="M1496 288h8v8h-8z"/>
<path fill="#ffff35" d="M1504 288h8v8h-8z"/>
<path fill="#ffff31" d="M1512 288h8v8h-8z"/>
<path fill="#00ff6f" d="M1376 296h8v8h-8z"/>
<path fill="#00ff6d" d="M1384 296h8v8h-8z"/>
<path fill="#0fff6a" d="M1392 296h8v8h-8z"/>
<path fill="#1fff68" d="M1400 296h8v8h-8z"/>
<path fill="#2fff66" d="M1408 296h8v8h-8z"/>
<path fill="#3fff63" d="M1416 296h8v8h-8z"/>
<path fill="#50ff60" d="M1424 296h8v8h-8z"/>
<path fill="#61ff5e" d="M1432 296h8v8h-8z"/>
<path fill="#74ff5b" d="M1440 296h8v8h-8z"/>
<path fill="#86ff58" d="M1448 296h8v8h-8z"/>
<path fill="#9aff55" d="M1456 296h8v8h-8z"/>
<path fill="#aeff52" d="M1464 296h8v8h-8z"/>
<path fill="#c3ff4f" d="M1472 296h8v8h-8z"/>
<path fill="#d9ff4c" d="M1480 296h8v8h-8z"/>
<path fill="#f0ff48" d="M1488 296h8v8h-8z"/>
<path fill="#ffff44" d="M1496 296h8v8h-8z"/>
<path fill="#ffff41" d="M1504 296h8v8h-8z"/>
<path fill="#00ff7a" d="M1376 304h8v8h-8z"/>
<path fill="#06ff78" d="M1384 304h8v8h-8z"/>
<path fill="#16ff76" d="M1392 304h8v8h-8z"/>
<path fill="#26ff74" d="M1400 304h8v8h-8z"/>
<path fill="#37ff72" d="M1408 304h8v8h-8z"/>
<path fill="#48ff6f" d="M1416 304h8v8h-8z"/>
<path fill="#5aff6d" d="M1424 304h8v8h-8z"/>
<path fill="#6dff6a" d="M1432 304h8v8h-8z"/>
<path fill="#80ff67" d="M1440 304h8v8h-8z"/>
<path fill="#94ff65" d="M1448 304h8v8h-8z"/>
<path fill="#a8ff62" d="M1456 304h8v8h-8z"/>
<path fill="#beff5f" d="M1464 304h8v8h-8z"/>
<path fill="#d4ff5c" d="M1472 304h8v8h-8z"/>
<path fill="#ecff58" d="M1480 304h8v8h-8z"/>
<path fill="#ffff55" d="M1488 304h8v8h-8z"/>
<path fill="#ffff52" d="M1496 304h8v8h-8z"/>
<path fill="#00ff89" d="M1368 312h8v8h-8z"/>
<path fill="#00ff87" d="M1376 312h8v8h-8z"/>
<path fill="#0dff85" d="M1384 312h8v8h-8z"/>
<path fill="#1dff83" d="M1392 312h8v8h-8z"/>
<path fill="#2eff81" d="M1400 312h8v8h-8z"/>
<path fill="#40ff7f" d="M1408 312h8v8h-8z"/>
<path fill="#52ff7c" d="M1416 312h8v8h-8z"/>
<path fill="#65ff7a" d="M1424 312h8v8h-8z"/>
<path fill="#79ff78" d="M1432 312h8v8h-8z"/>
<path fill="#8dff75" d="M1440 312h8v8h-8z"/>
<path fill="#a2ff72" d="M1448 312h8v8h-8z"/>
<path fill="#b8ff70" d="M1456 312h8v8h-8z"/>
<path fill="#cfff6d" d="M1464 312h8v8h-8z"/>
<path fill="#e7ff6a" d="M1472 312h8v8h-8z"/>
<path fill="#ffff67" d="M1480 312h8v8h-8z"/>
<path fill="#ffff63" d="M1488 312h8v8h-8z"/>
<path fill="#00ff97" d="M1368 320h8v8h-8z"/>
<path fill="#03ff95" d="M1376 320h8v8h-8z"/>
<path fill="#14ff93" d="M1384 320h8v8h-8z"/>
<path fill="#25ff91" d="M1392 320h8v8h-8z"/>
<path fill="#37ff8f" d="M1400 320h8v8h-8z"/>
<path fill="#4aff8d" d="M1408 320h8v8h-8z"/>
<path fill="#5dff8b" d="M1416 320h8v8h-8z"/>
<path fill="#71ff89" d="M1424 320h8v8h-8z"/>
<path fill="#86ff87" d="M1432 320h8v8h-8z"/>
<path fill="#9cff84" d="M1440 320h8v8h-8z"/>
<path fill="#b3ff82" d="M1448 320h8v8h-8z"/>
<path fill="#caff7f" d="M1456 320h8v8h-8z"/>
<path fill="#e3ff7c" d="M1464 320h8v8h-8z"/>
<path fill="#fcff7a" d="M1472 320h8v8h-8z"/>
<path fill="#ffff77" d="M1480 320h8v8h-8z"/>
<path fill="#ffff74" d="M1488 320h8v8h-8z"/>
<path fill="#00ffa7" d="M1360 328h8v8h-8z"/>
<path fill="#00ffa6" d="M1368 328h8v8h-8z"/>
<path fill="#0affa4" d="M1376 328h8v8h-8z"/>
<path fill="#1cffa2" d="M1384 328h8v8h-8z"/>
<path fill="#2effa1" d="M1392 328h8v8h-8z"/>
<path fill="#41ff9f" d="M1400 328h8v8h-8z"/>
<path fill="#55ff9d" d="M1408 328h8v8h-8z"/>
<path fill="#69ff9b" d="M1416 328h8v8h-8z"/>
<path fill="#7fff99" d="M1424 328h8v8h-8z"/>
<path fill="#95ff97" d="M1432 328h8v8h-8z"/>
<path fill="#acff95" d="M1440 328h8v8h-8z"/>
<path fill="#c4ff93" d="M1448 328h8v8h-8z"/>
<path fill="#deff90" d="M1456 328h8v8h-8z"/>
<path fill="#f8ff8e" d="M1464 328h8v8h-8z"/>
<path fill="#ffff8b" d="M1472 328h8v8h-8z"/>
<path fill="#ffff89" d="M1480 328h8v8h-8z"/>
<path fill="#00ffb7" d="M1360 336h8v8h-8z"/>
<path fill="#00ffb6" d="M1368 336h8v8h-8z"/>
<path fill="#12ffb5" d="M1376 336h8v8h-8z"/>
<path fill="#24ffb3" d="M1384 336h8v8h-8z"/>
<path fill="#38ffb2" d="M1392 336h8v8h-8z"/>
<path fill="#4cffb0" d="M1400 336h8v8h-8z"/>
<path fill="#61ffaf" d="M1408 336h8v8h-8z"/>
<path fill="#77ffad" d="M1416 336h8v8h-8z"/>
<path fill="#8effab" d="M1424 336h8v8h-8z"/>
<path fill="#a6ffa9" d="M1432 336h8v8h-8z"/>
<path fill="#beffa8" d="M1440 336h8v8h-8z"/>
<path fill="#d9ffa6" d="M1448 336h8v8h-8z"/>
<path fill="#f4ffa4" d="M1456 336h8v8h-8z"/>
<path fill="#ffffa1" d="M1464 336h8v8h-8z"/>
<path fill="#ffff9f" d="M1472 336h8v8h-8z"/>
<path fill="#00ffc9" d="M1360 344h8v8h-8z"/>
<path fill="#07ffc8" d="M1368 344h8v8h-8z"/>
<path fill="#1affc7" d="M1376 344h8v8h-8z"/>
<path fill="#2effc6" d="M1384 344h8v8h-8z"/>
<path fill="#42ffc5" d="M1392 344h8v8h-8z"/>
<path fill="#58ffc3" d="M1400 344h8v8h-8z"/>
<path fill="#6effc2" d="M1408 344h8v8h-8z"/>
<path fill="#86ffc1" d="M1416 344h8v8h-8z"/>
<path fill="#9effbf" d="M1424 344h8v8h-8z"/>
<path fill="#b8ffbe" d="M1432 344h8v8h-8z"/>
<path fill="#d3ffbd" d="M1440 344h8v8h-8z"/>
<path fill="#efffbb" d="M1448 344h8v8h-8z"/>
<path fill="#ffffb9" d="M1456 344h8v8h-8z"/>
<path fill="#ffffb8" d="M1464 344h8v8h-8z"/>
<path fill="#00ffdd" d="M1352 352h8v8h-8z"/>
<path fill="#00ffdc" d="M1360 352h8v8h-8z"/>
<path fill="#0fffdc" d="M1368 352h8v8h-8z"/>
<path fill="#23ffdb" d="M1376 352h8v8h-8z"/>
<path fill="#38ffda" d="M1384 352h8v8h-8z"/>
<path fill="#4effda" d="M1392 352h8v8h-8z"/>
<path fill="#65ffd9" d="M1400 352h8v8h-8z"/>
<path fill="#7dffd8" d="M1408 352h8v8h-8z"/>
<path fill="#97ffd7" d="M1416 352h8v8h-8z"/>
<path fill="#b1ffd6" d="M1424 352h8v8h-8z"/>
<path fill="#cdffd5" d="M1432 352h8v8h-8z"/>
<path fill="#eaffd4" d="M1440 352h8v8h-8z"/>
<path fill="#ffffd3" d="M1448 352h8v8h-8z"/>
<path fill="#ffffd2" d="M1456 352h8v8h-8z"/>
<path fill="#00fff2" d="M1352 360h8v8h-8z"/>
<path fill="#03fff2" d="M1360 360h8v8h-8z"/>
<path fill="#18fff2" d="M1368 360h8v8h-8z"/>
<path fill="#2dfff2" d="M1376 360h8v8h-8z"/>
<path fill="#44fff1" d="M1384 360h8v8h-8z"/>
<path fill="#5cfff1" d="M1392 360h8v8h-8z"/>
<path fill="#74fff1" d="M1400 360h8v8h-8z"/>
<path fill="#8efff0" d="M1408 360h8v8h-8z"/>
<path fill="#aafff0" d="M1416 360h8v8h-8z"/>
<path fill="#c6fff0" d="M1424 360h8v8h-8z"/>
<path fill="#e4ffef" d="M1432 360h8v8h-8z"/>
<path fill="#ffffef" d="M1440 360h16v8h-16z"/>
<path fill="#00ffff" d="M1344 368h16v8h-16z"/>
<path fill="#0cffff" d="M1360 368h8v8h-8z"/>
<path fill="#22ffff" d="M1368 368h8v8h-8z"/>
<path fill="#39ffff" d="M1376 368h8v8h-8z"/>
<path fill="#51ffff" d="M1384 368h8v8h-8z"/>
<path fill="#6bffff" d="M1392 368h8v8h-8z"/>
<path fill="#85ffff" d="M1400 368h8v8h-8z"/>
<path fill="#a1ffff" d="M1408 368h8v8h-8z"/>
<path fill="#bfffff" d="M1416 368h8v8h-8z"/>
<path fill="#deffff" d="M1424 368h8v8h-8z"/>
<path fill="#ffffff" d="M1432 368h16v8h-16z"/>
<path fill="#00ffff" d="M1344 376h16v8h-16z"/>
<path fill="#15ffff" d="M1360 376h8v8h-8z"/>
<path fill="#2dffff" d="M1368 376h8v8h-8z"/>
<path fill="#46ffff" d="M1376 376h8v8h-8z"/>
<path fill="#60ffff" d="M1384 376h8v8h-8z"/>
<path fill="#7cffff" d="M1392 376h8v8h-8z"/>
<path fill="#99ffff" d="M1400 376h8v8h-8z"/>
<path fill="#b7ffff" d="M1408 376h8v8h-8z"/>
<path fill="#d8ffff" d="M1416 376h8v8h-8z"/>
</g></g>
<g clip-path="url(#sec2)"><g filter="url(#bli)">
<path fill="#00ffff" d="M1352 360h8v8h-8z"/>
<path fill="#03ffff" d="M1360 360h8v8h-8z"/>
<path fill="#19ffff" d="M1368 360h8v8h-8z"/>
<path fill="#30ffff" d="M1376 360h8v8h-8z"/>
<path fill="#48ffff" d="M1384 360h8v8h-8z"/>
<path fill="#61ffff" d="M1392 360h8v8h-8z"/>
<path fill="#7bffff" d="M1400 360h8v8h-8z"/>
<path fill="#97ffff" d="M1408 360h8v8h-8z"/>
<path fill="#b4ffff" d="M1416 360h8v8h-8z"/>
<path fill="#d3ffff" d="M1424 360h8v8h-8z"/>
<path fill="#f3ffff" d="M1432 360h8v8h-8z"/>
<path fill="#ffffff" d="M1440 360h8v8h-8z"/>
<path fill="#00f5ff" d="M1344 368h16v8h-16z"/>
<path fill="#0bf4ff" d="M1360 368h8v8h-8z"/>
<path fill="#20f4ff" d="M1368 368h8v8h-8z"/>
<path fill="#36f4ff" d="M1376 368h8v8h-8z"/>
<path fill="#4df3ff" d="M1384 368h8v8h-8z"/>
<path fill="#66f3ff" d="M1392 368h8v8h-8z"/>
<path fill="#7ff3ff" d="M1400 368h8v8h-8z"/>
<path fill="#99f2ff" d="M1408 368h8v8h-8z"/>
<path fill="#b5f2ff" d="M1416 368h8v8h-8z"/>
<path fill="#d3f2ff" d="M1424 368h8v8h-8z"/>
<path fill="#f2f1ff" d="M1432 368h8v8h-8z"/>
<path fill="#fff1ff" d="M1440 368h8v8h-8z"/>
<path fill="#00dfff" d="M1344 376h8v8h-8z"/>
<path fill="#00deff" d="M1352 376h8v8h-8z"/>
<path fill="#12deff" d="M1360 376h8v8h-8z"/>
<path fill="#27ddff" d="M1368 376h8v8h-8z"/>
<path fill="#3cdcff" d="M1376 376h8v8h-8z"/>
<path fill="#53dbff" d="M1384 376h8v8h-8z"/>
<path fill="#6adbff" d="M1392 376h8v8h-8z"/>
<path fill="#82daff" d="M1400 376h8v8h-8z"/>
<path fill="#9cd9ff" d="M1408 376h8v8h-8z"/>
<path fill="#b7d8ff" d="M1416 376h8v8h-8z"/>
<path fill="#d3d7ff" d="M1424 376h8v8h-8z"/>
<path fill="#f0d6ff" d="M1432 376h8v8h-8z"/>
<path fill="#ffd4ff" d="M1440 376h8v8h-8z"/>
<path fill="#00cbff" d="M1344 384h8v8h-8z"/>
<path fill="#06caff" d="M1352 384h8v8h-8z"/>
<path fill="#19c9ff" d="M1360 384h8v8h-8z"/>
<path fill="#2dc8ff" d="M1368 384h8v8h-8z"/>
<path fill="#42c6ff" d="M1376 384h8v8h-8z"/>
<path fill="#57c5ff" d="M1384 384h8v8h-8z"/>
<path fill="#6ec4ff" d="M1392 384h8v8h-8z"/>
<path fill="#85c2ff" d="M1400 384h8v8h-8z"/>
<path fill="#9ec1ff" d="M1408 384h8v8h-8z"/>
<path fill="#b8c0ff" d="M1416 384h8v8h-8z"/>
<path fill="#d3beff" d="M1424 384h8v8h-8z"/>
<path fill="#efbcff" d="M1432 384h8v8h-8z"/>
<path fill="#ffbbff" d="M1440 384h8v8h-8z"/>
<path fill="#ffb9ff" d="M1448 384h8v8h-8z"/>
<path fill="#00b9ff" d="M1336 392h8v8h-8z"/>
<path fill="#00b8ff" d="M1344 392h8v8h-8z"/>
<path fill="#0db7ff" d="M1352 392h8v8h-8z"/>
<path fill="#20b5ff" d="M1360 392h8v8h-8z"/>
<path fill="#33b4ff" d="M1368 392h8v8h-8z"/>
<path fill="#47b2ff" d="M1376 392h8v8h-8z"/>
<path fill="#5cb1ff" d="M1384 392h8v8h-8z"/>
<path fill="#72afff" d="M1392 392h8v8h-8z"/>
<path fill="#88adff" d="M1400 392h8v8h-8z"/>
<path fill="#a0abff" d="M1408 392h8v8h-8z"/>
<path fill="#b9a9ff" d="M1416 392h8v8h-8z"/>
<path fill="#d3a7ff" d="M1424 392h8v8h-8z"/>
<path fill="#eea5ff" d="M1432 392h8v8h-8z"/>
<path fill="#ffa3ff" d="M1440 392h8v8h-8z"/>
<path fill="#ffa1ff" d="M1448 392h8v8h-8z"/>
<path fill="#00a8ff" d="M1336 400h8v8h-8z"/>
<path fill="#02a6ff" d="M1344 400h8v8h-8z"/>
<path fill="#13a5ff" d="M1352 400h8v8h-8z"/>
<path fill="#25a3ff" d="M1360 400h8v8h-8z"/>
<path fill="#38a1ff" d="M1368 400h8v8h-8z"/>
<path fill="#4c9fff" d="M1376 400h8v8h-8z"/>
<path fill="#609dff" d="M1384 400h8v8h-8z"/>
<path fill="#759bff" d="M1392 400h8v8h-8z"/>
<path fill="#8b99ff" d="M1400 400h8v8h-8z"/>
<path fill="#a297ff" d="M1408 400h8v8h-8z"/>
<path fill="#ba95ff" d="M1416 400h8v8h-8z"/>
<path fill="#d392ff" d="M1424 400h8v8h-8z"/>
<path fill="#ed90ff" d="M1432 400h8v8h-8z"/>
<path fill="#ff8dff" d="M1440 400h8v8h-8z"/>
<path fill="#ff8bff" d="M1448 400h8v8h-8z"/>
<path fill="#0099ff" d="M1328 408h8v8h-8z"/>
<path fill="#0098ff" d="M1336 408h8v8h-8z"/>
<path fill="#0896ff" d="M1344 408h8v8h-8z"/>
<path fill="#1994ff" d="M1352 408h8v8h-8z"/>
<path fill="#2b92ff" d="M1360 408h8v8h-8z"/>
<path fill="#3d90ff" d="M1368 408h8v8h-8z"/>
<path fill="#508eff" d="M1376 408h8v8h-8z"/>
<path fill="#648bff" d="M1384 408h8v8h-8z"/>
<path fill="#7889ff" d="M1392 408h8v8h-8z"/>
<path fill="#8e87ff" d="M1400 408h8v8h-8z"/>
<path fill="#a484ff" d="M1408 408h8v8h-8z"/>
<path fill="#bb82ff" d="M1416 408h8v8h-8z"/>
<path fill="#d37fff" d="M1424 408h8v8h-8z"/>
<path fill="#ec7cff" d="M1432 408h8v8h-8z"/>
<path fill="#ff79ff" d="M1440 408h8v8h-8z"/>
<path fill="#ff76ff" d="M1448 408h8v8h-8z"/>
<path fill="#008aff" d="M1328 416h8v8h-8z"/>
<path fill="#0088ff" d="M1336 416h8v8h-8z"/>
<path fill="#0e86ff" d="M1344 416h8v8h-8z"/>
<path fill="#1f84ff" d="M1352 416h8v8h-8z"/>
<path fill="#3082ff" d="M1360 416h8v8h-8z"/>
<path fill="#4280ff" d="M1368 416h8v8h-8z"/>
<path fill="#547dff" d="M1376 416h8v8h-8z"/>
<path fill="#677bff" d="M1384 416h8v8h-8z"/>
<path fill="#7b78ff" d="M1392 416h8v8h-8z"/>
<path fill="#9076ff" d="M1400 416h8v8h-8z"/>
<path fill="#a573ff" d="M1408 416h8v8h-8z"/>
<path fill="#bb70ff" d="M1416 416h8v8h-8z"/>
<path fill="#d36dff" d="M1424 416h8v8h-8z"/>
<path fill="#eb6aff" d="M1432 416h8v8h-8z"/>
<path fill="#ff67ff" d="M1440 416h8v8h-8z"/>
<path fill="#ff64ff" d="M1448 416h8v8h-8z"/>
<path fill="#007cff" d="M1328 424h8v8h-8z"/>
<path fill="#047aff" d="M1336 424h8v8h-8z"/>
<path fill="#1477ff" d="M1344 424h8v8h-8z"/>
<path fill="#2475ff" d="M1352 424h8v8h-8z"/>
<path fill="#3573ff" d="M1360 424h8v8h-8z"/>
<path fill="#4670ff" d="M1368 424h8v8h-8z"/>
<path fill="#586eff" d="M1376 424h8v8h-8z"/>
<path fill="#6b6bff" d="M1384 424h8v8h-8z"/>
<path fill="#7e68ff" d="M1392 424h8v8h-8z"/>
<path fill="#9266ff" d="M1400 424h8v8h-8z"/>
<path fill="#a763ff" d="M1408 424h8v8h-8z"/>
<path fill="#bc60ff" d="M1416 424h8v8h-8z"/>
<path fill="#d35cff" d="M1424 424h8v8h-8z"/>
<path fill="#ea59ff" d="M1432 424h8v8h-8z"/>
<path fill="#ff56ff" d="M1440 424h8v8h-8z"/>
<path fill="#ff52ff" d="M1448 424h8v8h-8z"/>
<path fill="#0071ff" d="M1320 432h8v8h-8z"/>
<path fill="#006eff" d="M1328 432h8v8h-8z"/>
<path fill="#0a6cff" d="M1336 432h8v8h-8z"/>
<path fill="#196aff" d="M1344 432h8v8h-8z"/>
<path fill="#2967ff" d="M1352 432h8v8h-8z"/>
<path fill="#3a65ff" d="M1360 432h8v8h-8z"/>
<path fill="#4a62ff" d="M1368 432h8v8h-8z"/>
<path fill="#5c5fff" d="M1376 432h8v8h-8z"/>
<path fill="#6e5cff" d="M1384 432h8v8h-8z"/>
<path fill="#815aff" d="M1392 432h8v8h-8z"/>
<path fill="#9457ff" d="M1400 432h8v8h-8z"/>
<path fill="#a853ff" d="M1408 432h8v8h-8z"/>
<path fill="#bd50ff" d="M1416 432h8v8h-8z"/>
<path fill="#d34dff" d="M1424 432h8v8h-8z"/>
<path fill="#e949ff" d="M1432 432h8v8h-8z"/>
<path fill="#ff46ff" d="M1440 432h8v8h-8z"/>
<path fill="#ff42ff" d="M1448 432h8v8h-8z"/>
<path fill="#0064ff" d="M1320 440h8v8h-8z"/>
<path fill="#0161ff" d="M1328 440h8v8h-8z"/>
<path fill="#105fff" d="M1336 440h8v8h-8z"/>
<path fill="#1f5cff" d="M1344 440h8v8h-8z"/>
<path fill="#2e5aff" d="M1352 440h8v8h-8z"/>
<path fill="#3e57ff" d="M1360 440h8v8h-8z"/>
<path fill="#4e54ff" d="M1368 440h8v8h-8z"/>
<path fill="#5f52ff" d="M1376 440h8v8h-8z"/>
<path fill="#714fff" d="M1384 440h8v8h-8z"/>
<path fill="#834cff" d="M1392 440h8v8h-8z"/>
<path fill="#9648ff" d="M1400 440h8v8h-8z"/>
<path fill="#a945ff" d="M1408 440h8v8h-8z"/>
<path fill="#be42ff" d="M1416 440h8v8h-8z"/>
<path fill="#d33eff" d="M1424 440h8v8h-8z"/>
<path fill="#e83bff" d="M1432 440h8v8h-8z"/>
<path fill="#ff37ff" d="M1440 440h8v8h-8z"/>
<path fill="#ff33ff" d="M1448 440h8v8h-8z"/>
<path fill="#005aff" d="M1312 448h8v8h-8z"/>
<path fill="#0058ff" d="M1320 448h8v8h-8z"/>
<path fill="#0655ff" d="M1328 448h8v8h-8z"/>
<path fill="#1553ff" d="M1336 448h8v8h-8z"/>
<path fill="#2350ff" d="M1344 448h8v8h-8z"/>
<path fill="#324dff" d="M1352 448h8v8h-8z"/>
<path fill="#424bff" d="M1360 448h8v8h-8z"/>
<path fill="#5248ff" d="M1368 448h8v8h-8z"/>
<path fill="#6345ff" d="M1376 448h8v8h-8z"/>
<path fill="#7442ff" d="M1384 448h8v8h-8z"/>
<path fill="#853eff" d="M1392 448h8v8h-8z"/>
<path fill="#983bff" d="M1400 448h8v8h-8z"/>
<path fill="#ab38ff" d="M1408 448h8v8h-8z"/>
<path fill="#be34ff" d="M1416 448h8v8h-8z"/>
<path fill="#d331ff" d="M1424 448h8v8h-8z"/>
<path fill="#e82dff" d="M1432 448h8v8h-8z"/>
<path fill="#fd29ff" d="M1440 448h8v8h-8z"/>
<path fill="#ff25ff" d="M1448 448h8v8h-8z"/>
<path fill="#004fff" d="M1312 456h8v8h-8z"/>
<path fill="#004cff" d="M1320 456h8v8h-8z"/>
<path fill="#0c4aff" d="M1328 456h8v8h-8z"/>
<path fill="#1a47ff" d="M1336 456h8v8h-8z"/>
<path fill="#2844ff" d="M1344 456h8v8h-8z"/>
<path fill="#3742ff" d="M1352 456h8v8h-8z"/>
<path fill="#463fff" d="M1360 456h8v8h-8z"/>
<path fill="#563cff" d="M1368 456h8v8h-8z"/>
<path fill="#6639ff" d="M1376 456h8v8h-8z"/>
<path fill="#7635ff" d="M1384 456h8v8h-8z"/>
<path fill="#8832ff" d="M1392 456h8v8h-8z"/>
<path fill="#992fff" d="M1400 456h8v8h-8z"/>
<path fill="#ac2bff" d="M1408 456h8v8h-8z"/>
<path fill="#bf28ff" d="M1416 456h8v8h-8z"/>
<path fill="#d324ff" d="M1424 456h8v8h-8z"/>
<path fill="#e720ff" d="M1432 456h8v8h-8z"/>
<path fill="#fc1cff" d="M1440 456h8v8h-8z"/>
<path fill="#ff18ff" d="M1448 456h8v8h-8z"/>
<path fill="#0044ff" d="M1312 464h8v8h-8z"/>
<path fill="#0341ff" d="M1320 464h8v8h-8z"/>
<path fill="#103fff" d="M1328 464h8v8h-8z"/>
<path fill="#1e3cff" d="M1336 464h8v8h-8z"/>
<path fill="#2c39ff" d="M1344 464h8v8h-8z"/>
<path fill="#3b36ff" d="M1352 464h8v8h-8z"/>
<path fill="#4a33ff" d="M1360 464h8v8h-8z"/>
<path fill="#5930ff" d="M1368 464h8v8h-8z"/>
<path fill="#692dff" d="M1376 464h8v8h-8z"/>
<path fill="#792aff" d="M1384 464h8v8h-8z"/>
<path fill="#8a26ff" d="M1392 464h8v8h-8z"/>
<path fill="#9b23ff" d="M1400 464h8v8h-8z"/>
<path fill="#ad1fff" d="M1408 464h8v8h-8z"/>
<path fill="#bf1cff" d="M1416 464h8v8h-8z"/>
<path fill="#d318ff" d="M1424 464h8v8h-8z"/>
<path fill="#e614ff" d="M1432 464h8v8h-8z"/>
<path fill="#fb10ff" d="M1440 464h8v8h-8z"/>
<path fill="#ff0bff" d="M1448 464h8v8h-8z"/>
<path fill="#003cff" d="M1304 472h8v8h-8z"/>
<path fill="#003aff" d="M1312 472h8v8h-8z"/>
<path fill="#0837ff" d="M1320 472h8v8h-8z"/>
<path fill="#1534ff" d="M1328 472h8v8h-8z"/>
<path fill="#2331ff" d="M1336 472h8v8h-8z"/>
<path fill="#302fff" d="M1344 472h8v8h-8z"/>
<path fill="#3e2cff" d="M1352 472h8v8h-8z"/>
<path fill="#4d29ff" d="M1360 472h8v8h-8z"/>
<path fill="#5c25ff" d="M1368 472h8v8h-8z"/>
<path fill="#6b22ff" d="M1376 472h8v8h-8z"/>
<path fill="#7b1fff" d="M1384 472h8v8h-8z"/>
<path fill="#8c1bff" d="M1392 472h8v8h-8z"/>
<path fill="#9d18ff" d="M1400 472h8v8h-8z"/>
<path fill="#ae14ff" d="M1408 472h8v8h-8z"/>
<path fill="#c010ff" d="M1416 472h8v8h-8z"/>
<path fill="#d20cff" d="M1424 472h8v8h-8z"/>
<path fill="#e608ff" d="M1432 472h8v8h-8z"/>
<path fill="#f904ff" d="M1440 472h8v8h-8z"/>
<path fill="#ff00ff" d="M1448 472h8v8h-8z"/>
<path fill="#0033ff" d="M1304 480h8v8h-8z"/>
<path fill="#0030ff" d="M1312 480h8v8h-8z"/>
<path fill="#0d2dff" d="M1320 480h8v8h-8z"/>
<path fill="#1a2aff" d="M1328 480h8v8h-8z"/>
<path fill="#2727ff" d="M1336 480h8v8h-8z"/>
<path fill="#3424ff" d="M1344 480h8v8h-8z"/>
<path fill="#4221ff" d="M1352 480h8v8h-8z"/>
<path fill="#501eff" d="M1360 480h8v8h-8z"/>
<path fill="#5f1bff" d="M1368 480h8v8h-8z"/>
<path fill="#6e18ff" d="M1376 480h8v8h-8z"/>
<path fill="#7e14ff" d="M1384 480h8v8h-8z"/>
<path fill="#8e11ff" d="M1392 480h8v8h-8z"/>
<path fill="#9e0dff" d="M1400 480h8v8h-8z"/>
<path fill="#af09ff" d="M1408 480h8v8h-8z"/>
<path fill="#c006ff" d="M1416 480h8v8h-8z"/>
<path fill="#d202ff" d="M1424 480h8v8h-8z"/>
<path fill="#e500ff" d="M1432 480h8v8h-8z"/>
<path fill="#f800ff" d="M1440 480h8v8h-8z"/>
<path fill="#ff00ff" d="M1448 480h8v8h-8z"/>
<path fill="#0029ff" d="M1304 488h8v8h-8z"/>
<path fill="#0526ff" d="M1312 488h8v8h-8z"/>
<path fill="#1124ff" d="M1320 488h8v8h-8z"/>
<path fill="#1e21ff" d="M1328 488h8v8h-8z"/>
<path fill="#2b1eff" d="M1336 488h8v8h-8z"/>
<path fill="#381bff" d="M1344 488h8v8h-8z"/>
<path fill="#4618ff" d="M1352 488h8v8h-8z"/>
<path fill="#5315ff" d="M1360 488h8v8h-8z"/>
<path fill="#6211ff" d="M1368 488h8v8h-8z"/>
<path fill="#710eff" d="M1376 488h8v8h-8z"/>
<path fill="#800aff" d="M1384 488h8v8h-8z"/>
<path fill="#8f07ff" d="M1392 488h8v8h-8z"/>
<path fill="#9f03ff" d="M1400 488h8v8h-8z"/>
<path fill="#b000ff" d="M1408 488h8v8h-8z"/>
<path fill="#c100ff" d="M1416 488h8v8h-8z"/>
<path fill="#d200ff" d="M1424 488h8v8h-8z"/>
<path fill="#e500ff" d="M1432 488h8v8h-8z"/>
<path fill="#0023ff" d="M1296 496h8v8h-8z"/>
<path fill="#0020ff" d="M1304 496h8v8h-8z"/>
<path fill="#0a1eff" d="M1312 496h8v8h-8z"/>
<path fill="#161bff" d="M1320 496h8v8h-8z"/>
<path fill="#2218ff" d="M1328 496h8v8h-8z"/>
<path fill="#2f15ff" d="M1336 496h8v8h-8z"/>
<path fill="#3b12ff" d="M1344 496h8v8h-8z"/>
<path fill="#490fff" d="M1352 496h8v8h-8z"/>
<path fill="#560bff" d="M1360 496h8v8h-8z"/>
<path fill="#6408ff" d="M1368 496h8v8h-8z"/>
<path fill="#7305ff" d="M1376 496h8v8h-8z"/>
<path fill="#8201ff" d="M1384 496h8v8h-8z"/>
<path fill="#9100ff" d="M1392 496h8v8h-8z"/>
<path fill="#a100ff" d="M1400 496h8v8h-8z"/>
<path fill="#b100ff" d="M1408 496h8v8h-8z"/>
<path fill="#c100ff" d="M1416 496h8v8h-8z"/>
<path fill="#001bff" d="M1296 504h8v8h-8z"/>
<path fill="#0218ff" d="M1304 504h8v8h-8z"/>
<path fill="#0e15ff" d="M1312 504h8v8h-8z"/>
<path fill="#1a12ff" d="M1320 504h8v8h-8z"/>
<path fill="#260fff" d="M1328 504h8v8h-8z"/>
<path fill="#320cff" d="M1336 504h8v8h-8z"/>
<path fill="#3f09ff" d="M1344 504h8v8h-8z"/>
<path fill="#4c06ff" d="M1352 504h8v8h-8z"/>
<path fill="#5902ff" d="M1360 504h8v8h-8z"/>
<path fill="#6700ff" d="M1368 504h8v8h-8z"/>
<path fill="#7500ff" d="M1376 504h8v8h-8z"/>
<path fill="#8400ff" d="M1384 504h8v8h-8z"/>
<path fill="#9300ff" d="M1392 504h8v8h-8z"/>
<path fill="#0015ff" d="M1288 512h8v8h-8z"/>
<path fill="#0012ff" d="M1296 512h8v8h-8z"/>
<path fill="#0710ff" d="M1304 512h8v8h-8z"/>
<path fill="#120dff" d="M1312 512h8v8h-8z"/>
<path fill="#1e0aff" d="M1320 512h8v8h-8z"/>
<path fill="#2907ff" d="M1328 512h8v8h-8z"/>
<path fill="#3604ff" d="M1336 512h8v8h-8z"/>
<path fill="#4201ff" d="M1344 512h8v8h-8z"/>
<path fill="#4f00ff" d="M1352 512h8v8h-8z"/>
<path fill="#5c00ff" d="M1360 512h8v8h-8z"/>
<path fill="#6a00ff" d="M1368 512h8v8h-8z"/>
<path fill="#7700ff" d="M1376 512h8v8h-8z"/>
<path fill="#000dff" d="M1288 520h8v8h-8z"/>
<path fill="#000bff" d="M1296 520h8v8h-8z"/>
<path fill="#0b08ff" d="M1304 520h8v8h-8z"/>
<path fill="#1605ff" d="M1312 520h8v8h-8z"/>
<path fill="#2102ff" d="M1320 520h8v8h-8z"/>
<path fill="#2d00ff" d="M1328 520h8v8h-8z"/>
<path fill="#3900ff" d="M1336 520h8v8h-8z"/>
<path fill="#4500ff" d="M1344 520h8v8h-8z"/>
<path fill="#5200ff" d="M1352 520h8v8h-8z"/>
<path fill="#0006ff" d="M1288 528h8v8h-8z"/>
<path fill="#0403ff" d="M1296 528h8v8h-8z"/>
<path fill="#0f00ff" d="M1304 528h8v8h-8z"/>
<path fill="#1a00ff" d="M1312 528h8v8h-8z"/>
<path fill="#2500ff" d="M1320 528h8v8h-8z"/>
<path fill="#3000ff" d="M1328 528h8v8h-8z"/>
<path fill="#3c00ff" d="M1336 528h8v8h-8z"/>
<path fill="#0001ff" d="M1280 536h8v8h-8z"/>
<path fill="#0000ff" d="M1288 536h8v8h-8z"/>
<path fill="#0800ff" d="M1296 536h8v8h-8z"/>
<path fill="#1300ff" d="M1304 536h8v8h-8z"/>
<path fill="#1d00ff" d="M1312 536h8v8h-8z"/>
<path fill="#0200ff" d="M1288 544h8v8h-8z"/>
</g></g>
</g>
<rect x="1161.15" y="45" width="1.7" height="531" fill="#969696"/>
<rect x="1906.15" y="45" width="1.7" height="531" fill="#969696"/>
<rect x="1161.2" y="44.95" width="746.6" height="1.7" fill="#969696"/>
<rect x="1161.2" y="574.3" width="746.6" height="1.8" fill="#b0b0b0"/>
<rect x="1155" y="574" width="6" height="2" fill="#d0d0d0"/>
<text x="1154.5" y="581.7" font-size="15.3" text-anchor="end" textLength="9.11" lengthAdjust="spacingAndGlyphs">0</text>
<rect x="1161" y="575.2" width="2" height="6" fill="#d0d0d0"/>
<text x="1162" y="597.3" font-size="15.3" text-anchor="middle" textLength="9.11" lengthAdjust="spacingAndGlyphs">0</text>
<rect x="1155" y="511.76" width="6" height="1.2" fill="#d0d0d0"/>
<text x="1154.5" y="518.06" font-size="15.3" text-anchor="end" textLength="22.76" lengthAdjust="spacingAndGlyphs">0,1</text>
<rect x="1249.6" y="575.2" width="2" height="6" fill="#d0d0d0"/>
<text x="1250.6" y="597.3" font-size="15.3" text-anchor="middle" textLength="22.76" lengthAdjust="spacingAndGlyphs">0,1</text>
<rect x="1155" y="448.92" width="6" height="1.2" fill="#d0d0d0"/>
<text x="1154.5" y="455.22" font-size="15.3" text-anchor="end" textLength="22.76" lengthAdjust="spacingAndGlyphs">0,2</text>
<rect x="1338.2" y="575.2" width="2" height="6" fill="#d0d0d0"/>
<text x="1339.2" y="597.3" font-size="15.3" text-anchor="middle" textLength="22.76" lengthAdjust="spacingAndGlyphs">0,2</text>
<rect x="1155" y="386.08" width="6" height="1.2" fill="#d0d0d0"/>
<text x="1154.5" y="392.38" font-size="15.3" text-anchor="end" textLength="22.76" lengthAdjust="spacingAndGlyphs">0,3</text>
<rect x="1426.8" y="575.2" width="2" height="6" fill="#d0d0d0"/>
<text x="1427.8" y="597.3" font-size="15.3" text-anchor="middle" textLength="22.76" lengthAdjust="spacingAndGlyphs">0,3</text>
<rect x="1155" y="323.24" width="6" height="1.2" fill="#d0d0d0"/>
<text x="1154.5" y="329.54" font-size="15.3" text-anchor="end" textLength="22.76" lengthAdjust="spacingAndGlyphs">0,4</text>
<rect x="1515.4" y="575.2" width="2" height="6" fill="#d0d0d0"/>
<text x="1516.4" y="597.3" font-size="15.3" text-anchor="middle" textLength="22.76" lengthAdjust="spacingAndGlyphs">0,4</text>
<rect x="1155" y="260.4" width="6" height="1.2" fill="#d0d0d0"/>
<text x="1154.5" y="266.7" font-size="15.3" text-anchor="end" textLength="22.76" lengthAdjust="spacingAndGlyphs">0,5</text>
<rect x="1604" y="575.2" width="2" height="6" fill="#d0d0d0"/>
<text x="1605" y="597.3" font-size="15.3" text-anchor="middle" textLength="22.76" lengthAdjust="spacingAndGlyphs">0,5</text>
<rect x="1155" y="197.56" width="6" height="1.2" fill="#d0d0d0"/>
<text x="1154.5" y="203.86" font-size="15.3" text-anchor="end" textLength="22.76" lengthAdjust="spacingAndGlyphs">0,6</text>
<rect x="1692.6" y="575.2" width="2" height="6" fill="#d0d0d0"/>
<text x="1693.6" y="597.3" font-size="15.3" text-anchor="middle" textLength="22.76" lengthAdjust="spacingAndGlyphs">0,6</text>
<rect x="1155" y="134.72" width="6" height="1.2" fill="#d0d0d0"/>
<text x="1154.5" y="141.02" font-size="15.3" text-anchor="end" textLength="22.76" lengthAdjust="spacingAndGlyphs">0,7</text>
<rect x="1781.2" y="575.2" width="2" height="6" fill="#d0d0d0"/>
<text x="1782.2" y="597.3" font-size="15.3" text-anchor="middle" textLength="22.76" lengthAdjust="spacingAndGlyphs">0,7</text>
<rect x="1155" y="71.88" width="6" height="1.2" fill="#d0d0d0"/>
<text x="1154.5" y="78.18" font-size="15.3" text-anchor="end" textLength="22.76" lengthAdjust="spacingAndGlyphs">0,8</text>
<rect x="1869.8" y="575.2" width="2" height="6" fill="#d0d0d0"/>
<text x="1870.8" y="597.3" font-size="15.3" text-anchor="middle" textLength="22.76" lengthAdjust="spacingAndGlyphs">0,8</text>
<text x="1520" y="40" font-size="15.2" text-anchor="middle" textLength="87" lengthAdjust="spacingAndGlyphs">CIE 1931 xy</text>
<rect x="1418.9" y="188.6" width="17.6" height="15.6" fill="none" stroke="#fff" stroke-width="1.4"/>
<rect x="1525.3" y="247.6" width="17.6" height="15.6" fill="none" stroke="#fff" stroke-width="1.4"/>
<rect x="1720.5" y="358.7" width="17.6" height="15.6" fill="none" stroke="#fff" stroke-width="1.4"/>
<rect x="1437.8" y="469.7" width="17.6" height="15.6" fill="none" stroke="#fff" stroke-width="1.4"/>
<rect x="1285.8" y="528.6" width="17.6" height="15.6" fill="none" stroke="#fff" stroke-width="1.4"/>
<rect x="1351.8" y="358.8" width="17.6" height="15.6" fill="none" stroke="#fff" stroke-width="1.4"/>
<rect x="1430.1" y="359.2" width="17" height="15" fill="none" stroke="#000" stroke-width="1.9"/>
<ellipse cx="1430.2" cy="197.8" rx="5.7" ry="5.1" fill="#00ae00" stroke="#000" stroke-width="1.15"/>
<ellipse cx="1531.1" cy="255.4" rx="5.7" ry="5.1" fill="#a8a800" stroke="#000" stroke-width="1.15"/>
<ellipse cx="1713.7" cy="369.8" rx="5.7" ry="5.1" fill="#cc0000" stroke="#000" stroke-width="1.15"/>
<ellipse cx="1401" cy="500.8" rx="5.7" ry="5.1" fill="#c000b0" stroke="#000" stroke-width="1.15"/>
<ellipse cx="1302.4" cy="539.4" rx="5.7" ry="5.1" fill="#0000b4" stroke="#000" stroke-width="1.15"/>
<ellipse cx="1366.4" cy="366.4" rx="5.7" ry="5.1" fill="#00b4b4" stroke="#000" stroke-width="1.15"/>
<ellipse cx="1419.2" cy="377.9" rx="5.3" ry="5.3" fill="#fff" stroke="#000" stroke-width="1.15"/>
<ellipse cx="1420.9" cy="377.9" rx="5.3" ry="5.3" fill="#fff" stroke="#000" stroke-width="1.15"/>
<rect x="1638.6" y="44.7" width="267.2" height="199.1" fill="#3c3c3c" fill-opacity="0.49"/>
<rect x="1642" y="48" width="260.8" height="192.6" fill="url(#insg)"/>
<path d="M1772.4 144.9L1902.8 219.1V240.6H1736.9Z" fill="url(#insb)"/>
<rect x="1642" y="48" width="260.8" height="192.6" fill="none" stroke="#9c9c9c" stroke-width="1.6"/>
<rect x="1762.6" y="135.8" width="17.8" height="15.8" fill="none" stroke="#fff" stroke-width="1.4"/>
<ellipse cx="1793.6" cy="159.4" rx="5.7" ry="5" fill="#00ae00" stroke="#000" stroke-width="1.15"/>
<rect x="1286" y="631" width="459" height="199.7" fill="#000"/>
<rect x="0" y="918.6" width="1920" height="2.4" fill="#2b2b2b"/>
<rect x="1.7" y="843.8" width="186.3" height="75" rx="4.5" fill="url(#g16)"/>
<rect x="6.9" y="848.6" width="177" height="47.5" rx="5" fill="url(#g18)"/>
<rect x="8.1" y="849.9" width="174.6" height="45.1" rx="4" fill="#c0c0c0"/>
<rect x="9.5" y="851.3" width="171.8" height="42.3" rx="3" fill="none" stroke="#000" stroke-opacity="0.16" stroke-width="1"/>
<text x="94.8" y="913.7" font-size="13" text-anchor="middle" font-weight="bold" textLength="37.15" lengthAdjust="spacingAndGlyphs" fill="#424242">White</text>
<rect x="190.8" y="843.8" width="186.3" height="75" rx="4.5" fill="url(#g16)"/>
<rect x="196" y="848.6" width="177" height="47.5" rx="5" fill="url(#g18)"/>
<rect x="197.2" y="849.9" width="174.6" height="45.1" rx="4" fill="#c00000"/>
<rect x="198.6" y="851.3" width="171.8" height="42.3" rx="3" fill="none" stroke="#000" stroke-opacity="0.16" stroke-width="1"/>
<text x="283.9" y="913.7" font-size="13" text-anchor="middle" font-weight="bold" textLength="25.79" lengthAdjust="spacingAndGlyphs" fill="#424242">Red</text>
<rect x="379.9" y="843.8" width="186.3" height="75" rx="4.5" fill="url(#g17)"/>
<rect x="385.1" y="848.6" width="177" height="47.5" rx="5" fill="url(#g18)"/>
<rect x="386.3" y="849.9" width="174.6" height="45.1" rx="4" fill="#00c000"/>
<rect x="387.7" y="851.3" width="171.8" height="42.3" rx="3" fill="none" stroke="#000" stroke-opacity="0.16" stroke-width="1"/>
<text x="473" y="913.7" font-size="13" text-anchor="middle" font-weight="bold" textLength="39.45" lengthAdjust="spacingAndGlyphs" fill="#e6e6e6">Green</text>
<rect x="569" y="843.8" width="186.3" height="75" rx="4.5" fill="url(#g16)"/>
<rect x="574.2" y="848.6" width="177" height="47.5" rx="5" fill="url(#g18)"/>
<rect x="575.4" y="849.9" width="174.6" height="45.1" rx="4" fill="#0000c0"/>
<rect x="576.8" y="851.3" width="171.8" height="42.3" rx="3" fill="none" stroke="#000" stroke-opacity="0.16" stroke-width="1"/>
<text x="662.1" y="913.7" font-size="13" text-anchor="middle" font-weight="bold" textLength="29.58" lengthAdjust="spacingAndGlyphs" fill="#424242">Blue</text>
<rect x="758.1" y="843.8" width="186.3" height="75" rx="4.5" fill="url(#g16)"/>
<rect x="763.3" y="848.6" width="177" height="47.5" rx="5" fill="url(#g18)"/>
<rect x="764.5" y="849.9" width="174.6" height="45.1" rx="4" fill="#00c0c0"/>
<rect x="765.9" y="851.3" width="171.8" height="42.3" rx="3" fill="none" stroke="#000" stroke-opacity="0.16" stroke-width="1"/>
<text x="851.2" y="913.7" font-size="13" text-anchor="middle" font-weight="bold" textLength="33.38" lengthAdjust="spacingAndGlyphs" fill="#424242">Cyan</text>
<rect x="947.2" y="843.8" width="186.3" height="75" rx="4.5" fill="url(#g16)"/>
<rect x="952.4" y="848.6" width="177" height="47.5" rx="5" fill="url(#g18)"/>
<rect x="953.6" y="849.9" width="174.6" height="45.1" rx="4" fill="#c000c0"/>
<rect x="955" y="851.3" width="171.8" height="42.3" rx="3" fill="none" stroke="#000" stroke-opacity="0.16" stroke-width="1"/>
<text x="1040.3" y="913.7" font-size="13" text-anchor="middle" font-weight="bold" textLength="55.37" lengthAdjust="spacingAndGlyphs" fill="#424242">Magenta</text>
<rect x="1136.3" y="843.8" width="186.3" height="75" rx="4.5" fill="url(#g16)"/>
<rect x="1141.5" y="848.6" width="177" height="47.5" rx="5" fill="url(#g18)"/>
<rect x="1142.7" y="849.9" width="174.6" height="45.1" rx="4" fill="#c0c000"/>
<rect x="1144.1" y="851.3" width="171.8" height="42.3" rx="3" fill="none" stroke="#000" stroke-opacity="0.16" stroke-width="1"/>
<text x="1229.4" y="913.7" font-size="13" text-anchor="middle" font-weight="bold" textLength="42.48" lengthAdjust="spacingAndGlyphs" fill="#424242">Yellow</text>
<rect x="1325.4" y="843.8" width="186.3" height="75" rx="4.5" fill="url(#g16)"/>
<rect x="1330.6" y="848.6" width="177" height="47.5" rx="5" fill="url(#g18)"/>
<rect x="1331.8" y="849.9" width="174.6" height="45.1" rx="4" fill="#ffffff"/>
<rect x="1333.2" y="851.3" width="171.8" height="42.3" rx="3" fill="none" stroke="#000" stroke-opacity="0.16" stroke-width="1"/>
<text x="1418.5" y="913.7" font-size="13" text-anchor="middle" font-weight="bold" textLength="35.66" lengthAdjust="spacingAndGlyphs" fill="#424242">100W</text>
<rect x="1516" y="843.9" width="60" height="22.3" fill="url(#g19)" rx="3"/>
<rect x="1516" y="862" width="60" height="4.2" fill="#888888"/>
<rect x="1516" y="866.2" width="60" height="52.2" fill="url(#g20)" rx="3"/>
<rect x="1516" y="866.2" width="60" height="3.8" fill="#858585"/>
<rect x="1516" y="865.6" width="60" height="1.2" fill="#4a4a4a"/>
<rect x="1516" y="866.9" width="60" height="0.8" fill="#9a9a9a"/>
<circle cx="1546.4" cy="855.4" r="9.3" fill="url(#g21)"/>
<path d="M1546.4 850.6L1552.4 857H1540.4Z" fill="#363636"/>
<rect x="1525.4" y="872.8" width="41.3" height="41.8" rx="7" fill="#b8b8b8"/>
<rect x="1526.4" y="873.8" width="39.3" height="39.8" rx="6.2" fill="#1c1c1c"/>
<rect x="1529.6" y="877" width="32.9" height="33.4" rx="3.6" fill="url(#g23)"/>
<rect x="1537.8" y="885" width="17.2" height="17" fill="#000"/>
<path d="M1577.3 880.8V847.2q0-4 4-4H1860.3V880.8Z" fill="url(#g24)"/>
<path d="M1860.3 843.2H1913.9q4 0 4 4V880.8H1860.3Z" fill="url(#g25)"/>
<rect x="1634.65" y="843.2" width="1.5" height="37.6" fill="#262626"/>
<rect x="1636.35" y="843.2" width="0.5" height="37.6" fill="#9a9a9a"/>
<rect x="1690.55" y="843.2" width="1.5" height="37.6" fill="#262626"/>
<rect x="1692.25" y="843.2" width="0.5" height="37.6" fill="#9a9a9a"/>
<rect x="1747.15" y="843.2" width="1.5" height="37.6" fill="#262626"/>
<rect x="1748.85" y="843.2" width="0.5" height="37.6" fill="#9a9a9a"/>
<rect x="1803.35" y="843.2" width="1.5" height="37.6" fill="#262626"/>
<rect x="1805.05" y="843.2" width="0.5" height="37.6" fill="#9a9a9a"/>
<circle cx="1606" cy="862.5" r="12" fill="url(#g22)"/>
<circle cx="1663.3" cy="862.5" r="12" fill="url(#g22)"/>
<circle cx="1719.9" cy="862.5" r="12" fill="url(#g22)"/>
<circle cx="1776.1" cy="862.5" r="12" fill="url(#g22)"/>
<circle cx="1832.1" cy="862.5" r="12" fill="url(#g22)"/>
<circle cx="1889.4" cy="862.3" r="12" fill="url(#g26)"/>
<rect x="1601.3" y="857.7" width="9.6" height="9.2" fill="#3a3a3a"/>
<path d="M1659.6 857L1670.2 863L1659.6 869.2Z" fill="#3a3a3a"/>
<g fill="none" stroke="#3a3a3a" stroke-width="2.3"><path d="M1716.6 857.6H1713.9V868.4H1716.6M1723.6 857.6H1726.3V868.4H1723.6"/></g><circle cx="1718.2" cy="862.4" r="1.15" fill="#3a3a3a"/><circle cx="1721.8" cy="862.4" r="1.15" fill="#3a3a3a"/>
<path d="M1776.1 862.4c-2-3.2-7.4-3.4-7.4 0s5.400 3.200 7.400 0s7.400-3.400 7.400 0s-5.400 3.200-7.400 0z" fill="none" stroke="#3a3a3a" stroke-width="2.3"/>
<g fill="none" stroke="#3a3a3a" stroke-width="2.4"><path d="M1826.8 861.6a5.6 5.6 0 0 1 9.6-3.200"/><path d="M1837.4 863.400a5.600 5.600 0 0 1-9.600 3.200"/></g><path d="M1838.6 855.2V860.8H1833Z" fill="#3a3a3a"/><path d="M1825.6 869.800V864.200H1831.200Z" fill="#3a3a3a"/>
<path d="M1577.3 919.2V886.2q0-4 4-4H1747.9V919.2Z" fill="url(#g27)"/>
<path d="M1747.9 882.2H1913.9q4 0 4 4V919.2H1747.9Z" fill="url(#g27)"/>
<rect x="1747.15" y="882.2" width="1.5" height="37" fill="#2a2a2a"/>
<rect x="1748.75" y="882.2" width="0.7" height="37" fill="#b0b0b0"/>
<circle cx="1615.7" cy="901.2" r="12" fill="url(#g22)"/>
<circle cx="1882.4" cy="900.8" r="12" fill="url(#g22)"/>
<path d="M1614.6 895.2L1609.6 901.2L1614.6 907.2M1621 895.2L1616 901.2L1621 907.2" fill="none" stroke="#3a3a3a" stroke-width="2.2"/>
<path d="M1877.2 895L1882.2 901L1877.2 907M1883.6 895L1888.6 901L1883.6 907" fill="none" stroke="#3a3a3a" stroke-width="2.2"/>
<text x="1650" y="910.6" font-size="26" textLength="62.2" lengthAdjust="spacingAndGlyphs" fill="#383838" stroke="#383838" stroke-width="0.7" filter="url(#ts)">Back</text>
<text x="1783.3" y="910.6" font-size="26" textLength="64.5" lengthAdjust="spacingAndGlyphs" fill="#383838" stroke="#383838" stroke-width="0.7" filter="url(#ts)">Next</text>
</svg>
</body></html>
